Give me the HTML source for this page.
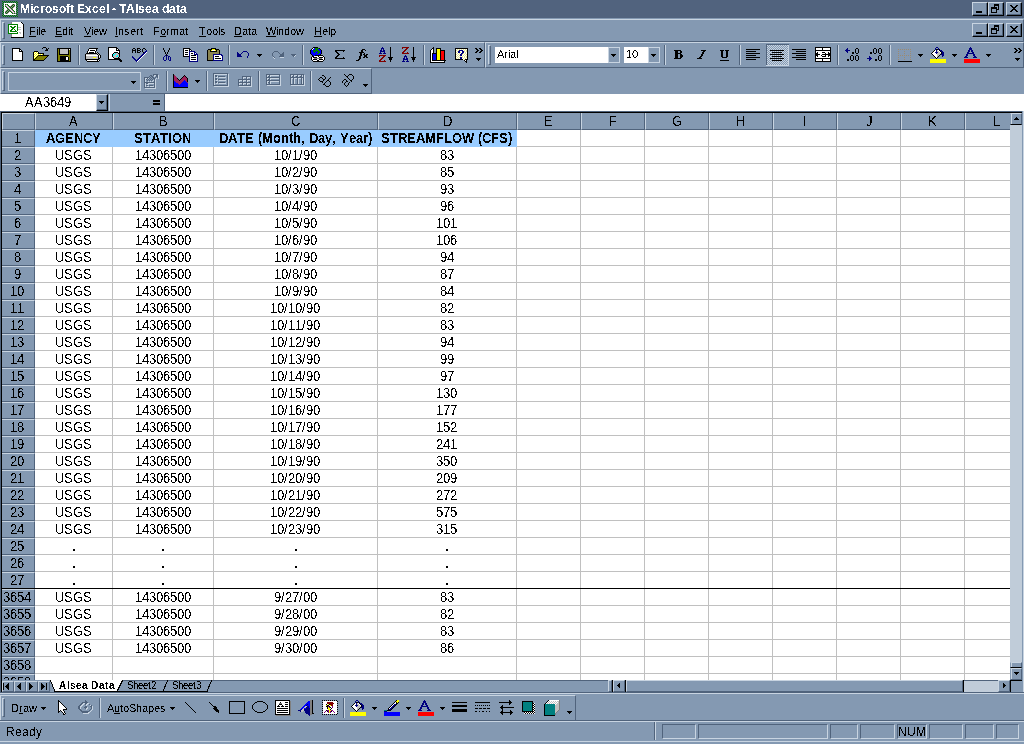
<!DOCTYPE html><html><head><meta charset="utf-8"><style>
html,body{margin:0;padding:0}
body{width:1024px;height:744px;overflow:hidden;position:relative;background:#8499b2;font-family:"Liberation Sans",sans-serif}
.a{position:absolute;margin:0;padding:0}
.b{box-sizing:border-box}
.t{white-space:nowrap;overflow:visible}
i.c{display:inline-block;font-style:normal}
i.u{text-decoration:underline}
</style></head><body>
<svg width="0" height="0" style="position:absolute"><filter id="c1" x="0" y="0" width="100%" height="100%"><feComponentTransfer><feFuncA type="discrete" tableValues="0 1"/></feComponentTransfer></filter><filter id="c2" x="0" y="0" width="100%" height="100%"><feComponentTransfer><feFuncA type="discrete" tableValues="0 1 1"/></feComponentTransfer></filter></svg>
<div class="a" style="left:0px;top:0px;width:1024px;height:18px;background:#51637e"></div>
<div class="a t" style="left:20px;top:1px;width:171px;height:16px;font-size:12px;color:#fff;font-weight:bold;line-height:16px;filter:url(#c1);"><span><i class="c" style="width:10px">M</i><i class="c" style="width:3px">i</i><i class="c" style="width:7px">c</i><i class="c" style="width:5px">r</i><i class="c" style="width:7px">o</i><i class="c" style="width:7px">s</i><i class="c" style="width:7px">o</i><i class="c" style="width:4px">f</i><i class="c" style="width:4px">t</i><i class="c" style="width:3px">&nbsp;</i><i class="c" style="width:8px">E</i><i class="c" style="width:7px">x</i><i class="c" style="width:7px">c</i><i class="c" style="width:7px">e</i><i class="c" style="width:3px">l</i><i class="c" style="width:3px">&nbsp;</i><i class="c" style="width:4px">-</i><i class="c" style="width:3px">&nbsp;</i><i class="c" style="width:7px">T</i><i class="c" style="width:9px">A</i><i class="c" style="width:3px">l</i><i class="c" style="width:7px">s</i><i class="c" style="width:7px">e</i><i class="c" style="width:7px">a</i><i class="c" style="width:3px">&nbsp;</i><i class="c" style="width:7px">d</i><i class="c" style="width:7px">a</i><i class="c" style="width:4px">t</i><i class="c" style="width:7px">a</i></span></div>
<div class="a b" style="left:972px;top:2px;width:16px;height:14px;background:#8499b2;border-style:solid;border-width:1px;border-color:#c8d4e1 #000 #000 #c8d4e1"></div>
<div class="a" style="left:973px;top:14px;width:14px;height:1px;background:#50637c"></div>
<div class="a" style="left:986px;top:3px;width:1px;height:12px;background:#50637c"></div>
<div class="a b" style="left:988px;top:2px;width:16px;height:14px;background:#8499b2;border-style:solid;border-width:1px;border-color:#c8d4e1 #000 #000 #c8d4e1"></div>
<div class="a" style="left:989px;top:14px;width:14px;height:1px;background:#50637c"></div>
<div class="a" style="left:1002px;top:3px;width:1px;height:12px;background:#50637c"></div>
<div class="a b" style="left:1006px;top:2px;width:16px;height:14px;background:#8499b2;border-style:solid;border-width:1px;border-color:#c8d4e1 #000 #000 #c8d4e1"></div>
<div class="a" style="left:1007px;top:14px;width:14px;height:1px;background:#50637c"></div>
<div class="a" style="left:1020px;top:3px;width:1px;height:12px;background:#50637c"></div>
<div class="a b" style="left:0px;top:19px;width:1024px;height:23px;background:#8499b2;border-style:solid;border-width:1px;border-color:#c8d4e1 #50637c #50637c #c8d4e1"></div>
<div class="a" style="left:0px;top:41px;width:1024px;height:1px;background:#50637c"></div>
<div class="a" style="left:2px;top:22px;width:3px;height:15px;border-style:solid;border-width:1px 1px 1px 1px;border-color:#c8d4e1 #50637c #50637c #c8d4e1;width:1px;"></div>
<div class="a t" style="left:29px;top:24px;width:21px;height:14px;font-size:11px;color:#000;line-height:14px;filter:url(#c1);"><span><i class="c u" style="width:7px">F</i><i class="c" style="width:2px">i</i><i class="c" style="width:2px">l</i><i class="c" style="width:6px">e</i></span></div>
<div class="a t" style="left:55px;top:24px;width:22px;height:14px;font-size:11px;color:#000;line-height:14px;filter:url(#c1);"><span><i class="c u" style="width:7px">E</i><i class="c" style="width:6px">d</i><i class="c" style="width:2px">i</i><i class="c" style="width:3px">t</i></span></div>
<div class="a t" style="left:84px;top:24px;width:27px;height:14px;font-size:11px;color:#000;line-height:14px;filter:url(#c1);"><span><i class="c u" style="width:7px">V</i><i class="c" style="width:2px">i</i><i class="c" style="width:6px">e</i><i class="c" style="width:8px">w</i></span></div>
<div class="a t" style="left:115px;top:24px;width:32px;height:14px;font-size:11px;color:#000;line-height:14px;filter:url(#c1);"><span><i class="c u" style="width:3px">I</i><i class="c" style="width:6px">n</i><i class="c" style="width:6px">s</i><i class="c" style="width:6px">e</i><i class="c" style="width:4px">r</i><i class="c" style="width:3px">t</i></span></div>
<div class="a t" style="left:153px;top:24px;width:39px;height:14px;font-size:11px;color:#000;line-height:14px;filter:url(#c1);"><span><i class="c" style="width:7px">F</i><i class="c u" style="width:6px">o</i><i class="c" style="width:4px">r</i><i class="c" style="width:9px">m</i><i class="c" style="width:6px">a</i><i class="c" style="width:3px">t</i></span></div>
<div class="a t" style="left:199px;top:24px;width:31px;height:14px;font-size:11px;color:#000;line-height:14px;filter:url(#c1);"><span><i class="c u" style="width:7px">T</i><i class="c" style="width:6px">o</i><i class="c" style="width:6px">o</i><i class="c" style="width:2px">l</i><i class="c" style="width:6px">s</i></span></div>
<div class="a t" style="left:234px;top:24px;width:27px;height:14px;font-size:11px;color:#000;line-height:14px;filter:url(#c1);"><span><i class="c u" style="width:8px">D</i><i class="c" style="width:6px">a</i><i class="c" style="width:3px">t</i><i class="c" style="width:6px">a</i></span></div>
<div class="a t" style="left:266px;top:24px;width:42px;height:14px;font-size:11px;color:#000;line-height:14px;filter:url(#c1);"><span><i class="c u" style="width:10px">W</i><i class="c" style="width:2px">i</i><i class="c" style="width:6px">n</i><i class="c" style="width:6px">d</i><i class="c" style="width:6px">o</i><i class="c" style="width:8px">w</i></span></div>
<div class="a t" style="left:314px;top:24px;width:26px;height:14px;font-size:11px;color:#000;line-height:14px;filter:url(#c1);"><span><i class="c u" style="width:8px">H</i><i class="c" style="width:6px">e</i><i class="c" style="width:2px">l</i><i class="c" style="width:6px">p</i></span></div>
<div class="a b" style="left:972px;top:23px;width:16px;height:14px;background:#8499b2;border-style:solid;border-width:1px;border-color:#c8d4e1 #000 #000 #c8d4e1"></div>
<div class="a" style="left:973px;top:35px;width:14px;height:1px;background:#50637c"></div>
<div class="a" style="left:986px;top:24px;width:1px;height:12px;background:#50637c"></div>
<div class="a b" style="left:988px;top:23px;width:16px;height:14px;background:#8499b2;border-style:solid;border-width:1px;border-color:#c8d4e1 #000 #000 #c8d4e1"></div>
<div class="a" style="left:989px;top:35px;width:14px;height:1px;background:#50637c"></div>
<div class="a" style="left:1002px;top:24px;width:1px;height:12px;background:#50637c"></div>
<div class="a b" style="left:1006px;top:23px;width:16px;height:14px;background:#8499b2;border-style:solid;border-width:1px;border-color:#c8d4e1 #000 #000 #c8d4e1"></div>
<div class="a" style="left:1007px;top:35px;width:14px;height:1px;background:#50637c"></div>
<div class="a" style="left:1020px;top:24px;width:1px;height:12px;background:#50637c"></div>
<div class="a b" style="left:0px;top:42px;width:485px;height:26px;background:#8499b2;border-style:solid;border-width:1px;border-color:#c8d4e1 #50637c #50637c #c8d4e1"></div>
<div class="a" style="left:2px;top:45px;width:3px;height:18px;border-style:solid;border-width:1px 1px 1px 1px;border-color:#c8d4e1 #50637c #50637c #c8d4e1;width:1px;"></div>
<div class="a b" style="left:485px;top:42px;width:539px;height:26px;background:#8499b2;border-style:solid;border-width:1px;border-color:#c8d4e1 #50637c #50637c #c8d4e1"></div>
<div class="a" style="left:488px;top:45px;width:3px;height:18px;border-style:solid;border-width:1px 1px 1px 1px;border-color:#c8d4e1 #50637c #50637c #c8d4e1;width:1px;"></div>
<div class="a" style="left:495px;top:47px;width:113px;height:16px;background:#fff"></div>
<div class="a t" style="left:497px;top:48px;width:25px;height:13px;font-size:11px;color:#000;line-height:13px;filter:url(#c1);"><span><i class="c" style="width:7px">A</i><i class="c" style="width:4px">r</i><i class="c" style="width:2px">i</i><i class="c" style="width:6px">a</i><i class="c" style="width:2px">l</i></span></div>
<div class="a b" style="left:608px;top:47px;width:12px;height:16px;border:1px solid #c8d4e1"></div>
<svg class="a" style="left:611px;top:54px" width="5" height="3" viewBox="0 0 5 3" shape-rendering="crispEdges"><path d="M0 0h5v1h-5zM1 1h3v1h-3zM2 2h1v1h-1z" fill="#000"/></svg>
<div class="a" style="left:624px;top:47px;width:24px;height:16px;background:#fff"></div>
<div class="a t" style="left:626px;top:48px;width:16px;height:13px;font-size:11px;color:#000;line-height:13px;filter:url(#c1);"><span><i class="c" style="width:6px">1</i><i class="c" style="width:6px">0</i></span></div>
<div class="a b" style="left:648px;top:47px;width:12px;height:16px;border:1px solid #c8d4e1"></div>
<svg class="a" style="left:651px;top:54px" width="5" height="3" viewBox="0 0 5 3" shape-rendering="crispEdges"><path d="M0 0h5v1h-5zM1 1h3v1h-3zM2 2h1v1h-1z" fill="#000"/></svg>
<div class="a" style="left:78px;top:45px;width:1px;height:20px;background:#50637c"></div>
<div class="a" style="left:79px;top:45px;width:1px;height:20px;background:#c8d4e1"></div>
<div class="a" style="left:153px;top:45px;width:1px;height:20px;background:#50637c"></div>
<div class="a" style="left:154px;top:45px;width:1px;height:20px;background:#c8d4e1"></div>
<div class="a" style="left:228px;top:45px;width:1px;height:20px;background:#50637c"></div>
<div class="a" style="left:229px;top:45px;width:1px;height:20px;background:#c8d4e1"></div>
<div class="a" style="left:302px;top:45px;width:1px;height:20px;background:#50637c"></div>
<div class="a" style="left:303px;top:45px;width:1px;height:20px;background:#c8d4e1"></div>
<div class="a" style="left:423px;top:45px;width:1px;height:20px;background:#50637c"></div>
<div class="a" style="left:424px;top:45px;width:1px;height:20px;background:#c8d4e1"></div>
<div class="a" style="left:664px;top:45px;width:1px;height:20px;background:#50637c"></div>
<div class="a" style="left:665px;top:45px;width:1px;height:20px;background:#c8d4e1"></div>
<div class="a" style="left:739px;top:45px;width:1px;height:20px;background:#50637c"></div>
<div class="a" style="left:740px;top:45px;width:1px;height:20px;background:#c8d4e1"></div>
<div class="a" style="left:837px;top:45px;width:1px;height:20px;background:#50637c"></div>
<div class="a" style="left:838px;top:45px;width:1px;height:20px;background:#c8d4e1"></div>
<div class="a" style="left:889px;top:45px;width:1px;height:20px;background:#50637c"></div>
<div class="a" style="left:890px;top:45px;width:1px;height:20px;background:#c8d4e1"></div>
<div class="a b" style="left:0px;top:68px;width:372px;height:26px;background:#8499b2;border-style:solid;border-width:1px;border-color:#c8d4e1 #50637c #50637c #c8d4e1"></div>
<div class="a" style="left:2px;top:71px;width:3px;height:18px;border-style:solid;border-width:1px 1px 1px 1px;border-color:#c8d4e1 #50637c #50637c #c8d4e1;width:1px;"></div>
<div class="a b" style="left:8px;top:72px;width:133px;height:19px;border:1px solid #c8d4e1"></div>
<svg class="a" style="left:131px;top:81px" width="5" height="3" viewBox="0 0 5 3" shape-rendering="crispEdges"><path d="M0 0h5v1h-5zM1 1h3v1h-3zM2 2h1v1h-1z" fill="#000"/></svg>
<div class="a" style="left:166px;top:71px;width:1px;height:20px;background:#50637c"></div>
<div class="a" style="left:167px;top:71px;width:1px;height:20px;background:#c8d4e1"></div>
<div class="a" style="left:206px;top:71px;width:1px;height:20px;background:#50637c"></div>
<div class="a" style="left:207px;top:71px;width:1px;height:20px;background:#c8d4e1"></div>
<div class="a" style="left:258px;top:71px;width:1px;height:20px;background:#50637c"></div>
<div class="a" style="left:259px;top:71px;width:1px;height:20px;background:#c8d4e1"></div>
<div class="a" style="left:310px;top:71px;width:1px;height:20px;background:#50637c"></div>
<div class="a" style="left:311px;top:71px;width:1px;height:20px;background:#c8d4e1"></div>
<div class="a" style="left:0px;top:94px;width:96px;height:17px;background:#fff"></div>
<div class="a t" style="left:25px;top:95px;width:50px;height:15px;font-size:13px;color:#000;line-height:15px;filter:url(#c1);"><span style="display:inline-block;transform:scaleY(1.1);transform-origin:50% 11.80px"><i class="c" style="width:9px">A</i><i class="c" style="width:9px">A</i><i class="c" style="width:7px">3</i><i class="c" style="width:7px">6</i><i class="c" style="width:7px">4</i><i class="c" style="width:7px">9</i></span></div>
<div class="a b" style="left:96px;top:94px;width:12px;height:17px;background:#8499b2;border-style:solid;border-width:1px;border-color:#c8d4e1 #000 #000 #c8d4e1"></div>
<div class="a" style="left:97px;top:109px;width:10px;height:1px;background:#50637c"></div>
<div class="a" style="left:106px;top:95px;width:1px;height:15px;background:#50637c"></div>
<svg class="a" style="left:99px;top:101px" width="5" height="3" viewBox="0 0 5 3" shape-rendering="crispEdges"><path d="M0 0h5v1h-5zM1 1h3v1h-3zM2 2h1v1h-1z" fill="#000"/></svg>
<div class="a" style="left:109px;top:94px;width:1px;height:17px;background:#c8d4e1"></div>
<div class="a" style="left:153px;top:100px;width:7px;height:2px;background:#000"></div>
<div class="a" style="left:153px;top:103px;width:7px;height:2px;background:#000"></div>
<div class="a" style="left:164px;top:94px;width:1px;height:17px;background:#50637c"></div>
<div class="a" style="left:165px;top:94px;width:859px;height:17px;background:#fff"></div>
<div class="a" style="left:0px;top:111px;width:1024px;height:1px;background:#50637c"></div>
<div class="a" style="left:0px;top:111px;width:1px;height:582px;background:#50637c"></div>
<div class="a" style="left:1px;top:112px;width:1021px;height:1px;background:#000"></div>
<div class="a" style="left:1px;top:112px;width:1px;height:580px;background:#000"></div>
<div class="a" style="left:1022px;top:111px;width:1px;height:582px;background:#8499b2"></div>
<div class="a" style="left:1023px;top:111px;width:1px;height:582px;background:#c8d4e1"></div>
<div class="a" style="left:2px;top:113px;width:1008px;height:567px;background:#fff"></div>
<div class="a b" style="left:2px;top:113px;width:33px;height:17px;background:#8499b2;border-style:solid;border-width:1px;border-color:#c8d4e1 #50637c #50637c #c8d4e1"></div>
<div class="a b" style="left:35px;top:113px;width:78px;height:17px;background:#8499b2;border-style:solid;border-width:0 1px 1px 1px;border-color:#c8d4e1 #50637c #50637c #c8d4e1"></div>
<div class="a t" style="left:69px;top:114px;width:13px;height:15px;font-size:13px;color:#000;line-height:15px;filter:url(#c1);"><span style="display:inline-block;transform:scaleY(1.1);transform-origin:50% 11.80px"><i class="c" style="width:9px">A</i></span></div>
<div class="a b" style="left:113px;top:113px;width:101px;height:17px;background:#8499b2;border-style:solid;border-width:0 1px 1px 1px;border-color:#c8d4e1 #50637c #50637c #c8d4e1"></div>
<div class="a t" style="left:159px;top:114px;width:13px;height:15px;font-size:13px;color:#000;line-height:15px;filter:url(#c1);"><span style="display:inline-block;transform:scaleY(1.1);transform-origin:50% 11.80px"><i class="c" style="width:9px">B</i></span></div>
<div class="a b" style="left:214px;top:113px;width:164px;height:17px;background:#8499b2;border-style:solid;border-width:0 1px 1px 1px;border-color:#c8d4e1 #50637c #50637c #c8d4e1"></div>
<div class="a t" style="left:291px;top:114px;width:13px;height:15px;font-size:13px;color:#000;line-height:15px;filter:url(#c1);"><span style="display:inline-block;transform:scaleY(1.1);transform-origin:50% 11.80px"><i class="c" style="width:9px">C</i></span></div>
<div class="a b" style="left:378px;top:113px;width:139px;height:17px;background:#8499b2;border-style:solid;border-width:0 1px 1px 1px;border-color:#c8d4e1 #50637c #50637c #c8d4e1"></div>
<div class="a t" style="left:443px;top:114px;width:13px;height:15px;font-size:13px;color:#000;line-height:15px;filter:url(#c1);"><span style="display:inline-block;transform:scaleY(1.1);transform-origin:50% 11.80px"><i class="c" style="width:9px">D</i></span></div>
<div class="a b" style="left:517px;top:113px;width:64px;height:17px;background:#8499b2;border-style:solid;border-width:0 1px 1px 1px;border-color:#c8d4e1 #50637c #50637c #c8d4e1"></div>
<div class="a t" style="left:544px;top:114px;width:13px;height:15px;font-size:13px;color:#000;line-height:15px;filter:url(#c1);"><span style="display:inline-block;transform:scaleY(1.1);transform-origin:50% 11.80px"><i class="c" style="width:9px">E</i></span></div>
<div class="a b" style="left:581px;top:113px;width:64px;height:17px;background:#8499b2;border-style:solid;border-width:0 1px 1px 1px;border-color:#c8d4e1 #50637c #50637c #c8d4e1"></div>
<div class="a t" style="left:609px;top:114px;width:12px;height:15px;font-size:13px;color:#000;line-height:15px;filter:url(#c1);"><span style="display:inline-block;transform:scaleY(1.1);transform-origin:50% 11.80px"><i class="c" style="width:8px">F</i></span></div>
<div class="a b" style="left:645px;top:113px;width:64px;height:17px;background:#8499b2;border-style:solid;border-width:0 1px 1px 1px;border-color:#c8d4e1 #50637c #50637c #c8d4e1"></div>
<div class="a t" style="left:672px;top:114px;width:14px;height:15px;font-size:13px;color:#000;line-height:15px;filter:url(#c1);"><span style="display:inline-block;transform:scaleY(1.1);transform-origin:50% 11.80px"><i class="c" style="width:10px">G</i></span></div>
<div class="a b" style="left:709px;top:113px;width:64px;height:17px;background:#8499b2;border-style:solid;border-width:0 1px 1px 1px;border-color:#c8d4e1 #50637c #50637c #c8d4e1"></div>
<div class="a t" style="left:736px;top:114px;width:13px;height:15px;font-size:13px;color:#000;line-height:15px;filter:url(#c1);"><span style="display:inline-block;transform:scaleY(1.1);transform-origin:50% 11.80px"><i class="c" style="width:9px">H</i></span></div>
<div class="a b" style="left:773px;top:113px;width:64px;height:17px;background:#8499b2;border-style:solid;border-width:0 1px 1px 1px;border-color:#c8d4e1 #50637c #50637c #c8d4e1"></div>
<div class="a t" style="left:803px;top:114px;width:8px;height:15px;font-size:13px;color:#000;line-height:15px;filter:url(#c1);"><span style="display:inline-block;transform:scaleY(1.1);transform-origin:50% 11.80px"><i class="c" style="width:4px">I</i></span></div>
<div class="a b" style="left:837px;top:113px;width:64px;height:17px;background:#8499b2;border-style:solid;border-width:0 1px 1px 1px;border-color:#c8d4e1 #50637c #50637c #c8d4e1"></div>
<div class="a t" style="left:866px;top:114px;width:10px;height:15px;font-size:13px;color:#000;line-height:15px;filter:url(#c1);"><span style="display:inline-block;transform:scaleY(1.1);transform-origin:50% 11.80px"><i class="c" style="width:6px">J</i></span></div>
<div class="a b" style="left:901px;top:113px;width:64px;height:17px;background:#8499b2;border-style:solid;border-width:0 1px 1px 1px;border-color:#c8d4e1 #50637c #50637c #c8d4e1"></div>
<div class="a t" style="left:928px;top:114px;width:13px;height:15px;font-size:13px;color:#000;line-height:15px;filter:url(#c1);"><span style="display:inline-block;transform:scaleY(1.1);transform-origin:50% 11.80px"><i class="c" style="width:9px">K</i></span></div>
<div class="a b" style="left:965px;top:113px;width:45px;height:17px;background:#8499b2;border-style:solid;border-width:0 0 1px 1px;border-color:#c8d4e1 #50637c #50637c #c8d4e1"></div>
<div class="a t" style="left:993px;top:114px;width:11px;height:15px;font-size:13px;color:#000;line-height:15px;filter:url(#c1);"><span style="display:inline-block;transform:scaleY(1.1);transform-origin:50% 11.80px"><i class="c" style="width:7px">L</i></span></div>
<div class="a b" style="left:2px;top:130px;width:33px;height:17px;background:#8499b2;border-style:solid;border-width:1px 1px 1px 0;border-color:#c8d4e1 #50637c #50637c #c8d4e1"></div>
<div class="a t" style="left:14px;top:131px;width:11px;height:16px;font-size:13px;color:#000;line-height:16px;filter:url(#c1);overflow:hidden;height:16px;"><span style="display:inline-block;transform:scaleY(1.1);transform-origin:50% 12.30px"><i class="c" style="width:7px">1</i></span></div>
<div class="a b" style="left:2px;top:147px;width:33px;height:17px;background:#8499b2;border-style:solid;border-width:1px 1px 1px 0;border-color:#c8d4e1 #50637c #50637c #c8d4e1"></div>
<div class="a t" style="left:14px;top:148px;width:11px;height:16px;font-size:13px;color:#000;line-height:16px;filter:url(#c1);overflow:hidden;height:16px;"><span style="display:inline-block;transform:scaleY(1.1);transform-origin:50% 12.30px"><i class="c" style="width:7px">2</i></span></div>
<div class="a b" style="left:2px;top:164px;width:33px;height:17px;background:#8499b2;border-style:solid;border-width:1px 1px 1px 0;border-color:#c8d4e1 #50637c #50637c #c8d4e1"></div>
<div class="a t" style="left:14px;top:165px;width:11px;height:16px;font-size:13px;color:#000;line-height:16px;filter:url(#c1);overflow:hidden;height:16px;"><span style="display:inline-block;transform:scaleY(1.1);transform-origin:50% 12.30px"><i class="c" style="width:7px">3</i></span></div>
<div class="a b" style="left:2px;top:181px;width:33px;height:17px;background:#8499b2;border-style:solid;border-width:1px 1px 1px 0;border-color:#c8d4e1 #50637c #50637c #c8d4e1"></div>
<div class="a t" style="left:14px;top:182px;width:11px;height:16px;font-size:13px;color:#000;line-height:16px;filter:url(#c1);overflow:hidden;height:16px;"><span style="display:inline-block;transform:scaleY(1.1);transform-origin:50% 12.30px"><i class="c" style="width:7px">4</i></span></div>
<div class="a b" style="left:2px;top:198px;width:33px;height:17px;background:#8499b2;border-style:solid;border-width:1px 1px 1px 0;border-color:#c8d4e1 #50637c #50637c #c8d4e1"></div>
<div class="a t" style="left:14px;top:199px;width:11px;height:16px;font-size:13px;color:#000;line-height:16px;filter:url(#c1);overflow:hidden;height:16px;"><span style="display:inline-block;transform:scaleY(1.1);transform-origin:50% 12.30px"><i class="c" style="width:7px">5</i></span></div>
<div class="a b" style="left:2px;top:215px;width:33px;height:17px;background:#8499b2;border-style:solid;border-width:1px 1px 1px 0;border-color:#c8d4e1 #50637c #50637c #c8d4e1"></div>
<div class="a t" style="left:14px;top:216px;width:11px;height:16px;font-size:13px;color:#000;line-height:16px;filter:url(#c1);overflow:hidden;height:16px;"><span style="display:inline-block;transform:scaleY(1.1);transform-origin:50% 12.30px"><i class="c" style="width:7px">6</i></span></div>
<div class="a b" style="left:2px;top:232px;width:33px;height:17px;background:#8499b2;border-style:solid;border-width:1px 1px 1px 0;border-color:#c8d4e1 #50637c #50637c #c8d4e1"></div>
<div class="a t" style="left:14px;top:233px;width:11px;height:16px;font-size:13px;color:#000;line-height:16px;filter:url(#c1);overflow:hidden;height:16px;"><span style="display:inline-block;transform:scaleY(1.1);transform-origin:50% 12.30px"><i class="c" style="width:7px">7</i></span></div>
<div class="a b" style="left:2px;top:249px;width:33px;height:17px;background:#8499b2;border-style:solid;border-width:1px 1px 1px 0;border-color:#c8d4e1 #50637c #50637c #c8d4e1"></div>
<div class="a t" style="left:14px;top:250px;width:11px;height:16px;font-size:13px;color:#000;line-height:16px;filter:url(#c1);overflow:hidden;height:16px;"><span style="display:inline-block;transform:scaleY(1.1);transform-origin:50% 12.30px"><i class="c" style="width:7px">8</i></span></div>
<div class="a b" style="left:2px;top:266px;width:33px;height:17px;background:#8499b2;border-style:solid;border-width:1px 1px 1px 0;border-color:#c8d4e1 #50637c #50637c #c8d4e1"></div>
<div class="a t" style="left:14px;top:267px;width:11px;height:16px;font-size:13px;color:#000;line-height:16px;filter:url(#c1);overflow:hidden;height:16px;"><span style="display:inline-block;transform:scaleY(1.1);transform-origin:50% 12.30px"><i class="c" style="width:7px">9</i></span></div>
<div class="a b" style="left:2px;top:283px;width:33px;height:17px;background:#8499b2;border-style:solid;border-width:1px 1px 1px 0;border-color:#c8d4e1 #50637c #50637c #c8d4e1"></div>
<div class="a t" style="left:10px;top:284px;width:18px;height:16px;font-size:13px;color:#000;line-height:16px;filter:url(#c1);overflow:hidden;height:16px;"><span style="display:inline-block;transform:scaleY(1.1);transform-origin:50% 12.30px"><i class="c" style="width:7px">1</i><i class="c" style="width:7px">0</i></span></div>
<div class="a b" style="left:2px;top:300px;width:33px;height:17px;background:#8499b2;border-style:solid;border-width:1px 1px 1px 0;border-color:#c8d4e1 #50637c #50637c #c8d4e1"></div>
<div class="a t" style="left:10px;top:301px;width:18px;height:16px;font-size:13px;color:#000;line-height:16px;filter:url(#c1);overflow:hidden;height:16px;"><span style="display:inline-block;transform:scaleY(1.1);transform-origin:50% 12.30px"><i class="c" style="width:7px">1</i><i class="c" style="width:7px">1</i></span></div>
<div class="a b" style="left:2px;top:317px;width:33px;height:17px;background:#8499b2;border-style:solid;border-width:1px 1px 1px 0;border-color:#c8d4e1 #50637c #50637c #c8d4e1"></div>
<div class="a t" style="left:10px;top:318px;width:18px;height:16px;font-size:13px;color:#000;line-height:16px;filter:url(#c1);overflow:hidden;height:16px;"><span style="display:inline-block;transform:scaleY(1.1);transform-origin:50% 12.30px"><i class="c" style="width:7px">1</i><i class="c" style="width:7px">2</i></span></div>
<div class="a b" style="left:2px;top:334px;width:33px;height:17px;background:#8499b2;border-style:solid;border-width:1px 1px 1px 0;border-color:#c8d4e1 #50637c #50637c #c8d4e1"></div>
<div class="a t" style="left:10px;top:335px;width:18px;height:16px;font-size:13px;color:#000;line-height:16px;filter:url(#c1);overflow:hidden;height:16px;"><span style="display:inline-block;transform:scaleY(1.1);transform-origin:50% 12.30px"><i class="c" style="width:7px">1</i><i class="c" style="width:7px">3</i></span></div>
<div class="a b" style="left:2px;top:351px;width:33px;height:17px;background:#8499b2;border-style:solid;border-width:1px 1px 1px 0;border-color:#c8d4e1 #50637c #50637c #c8d4e1"></div>
<div class="a t" style="left:10px;top:352px;width:18px;height:16px;font-size:13px;color:#000;line-height:16px;filter:url(#c1);overflow:hidden;height:16px;"><span style="display:inline-block;transform:scaleY(1.1);transform-origin:50% 12.30px"><i class="c" style="width:7px">1</i><i class="c" style="width:7px">4</i></span></div>
<div class="a b" style="left:2px;top:368px;width:33px;height:17px;background:#8499b2;border-style:solid;border-width:1px 1px 1px 0;border-color:#c8d4e1 #50637c #50637c #c8d4e1"></div>
<div class="a t" style="left:10px;top:369px;width:18px;height:16px;font-size:13px;color:#000;line-height:16px;filter:url(#c1);overflow:hidden;height:16px;"><span style="display:inline-block;transform:scaleY(1.1);transform-origin:50% 12.30px"><i class="c" style="width:7px">1</i><i class="c" style="width:7px">5</i></span></div>
<div class="a b" style="left:2px;top:385px;width:33px;height:17px;background:#8499b2;border-style:solid;border-width:1px 1px 1px 0;border-color:#c8d4e1 #50637c #50637c #c8d4e1"></div>
<div class="a t" style="left:10px;top:386px;width:18px;height:16px;font-size:13px;color:#000;line-height:16px;filter:url(#c1);overflow:hidden;height:16px;"><span style="display:inline-block;transform:scaleY(1.1);transform-origin:50% 12.30px"><i class="c" style="width:7px">1</i><i class="c" style="width:7px">6</i></span></div>
<div class="a b" style="left:2px;top:402px;width:33px;height:17px;background:#8499b2;border-style:solid;border-width:1px 1px 1px 0;border-color:#c8d4e1 #50637c #50637c #c8d4e1"></div>
<div class="a t" style="left:10px;top:403px;width:18px;height:16px;font-size:13px;color:#000;line-height:16px;filter:url(#c1);overflow:hidden;height:16px;"><span style="display:inline-block;transform:scaleY(1.1);transform-origin:50% 12.30px"><i class="c" style="width:7px">1</i><i class="c" style="width:7px">7</i></span></div>
<div class="a b" style="left:2px;top:419px;width:33px;height:17px;background:#8499b2;border-style:solid;border-width:1px 1px 1px 0;border-color:#c8d4e1 #50637c #50637c #c8d4e1"></div>
<div class="a t" style="left:10px;top:420px;width:18px;height:16px;font-size:13px;color:#000;line-height:16px;filter:url(#c1);overflow:hidden;height:16px;"><span style="display:inline-block;transform:scaleY(1.1);transform-origin:50% 12.30px"><i class="c" style="width:7px">1</i><i class="c" style="width:7px">8</i></span></div>
<div class="a b" style="left:2px;top:436px;width:33px;height:17px;background:#8499b2;border-style:solid;border-width:1px 1px 1px 0;border-color:#c8d4e1 #50637c #50637c #c8d4e1"></div>
<div class="a t" style="left:10px;top:437px;width:18px;height:16px;font-size:13px;color:#000;line-height:16px;filter:url(#c1);overflow:hidden;height:16px;"><span style="display:inline-block;transform:scaleY(1.1);transform-origin:50% 12.30px"><i class="c" style="width:7px">1</i><i class="c" style="width:7px">9</i></span></div>
<div class="a b" style="left:2px;top:453px;width:33px;height:17px;background:#8499b2;border-style:solid;border-width:1px 1px 1px 0;border-color:#c8d4e1 #50637c #50637c #c8d4e1"></div>
<div class="a t" style="left:10px;top:454px;width:18px;height:16px;font-size:13px;color:#000;line-height:16px;filter:url(#c1);overflow:hidden;height:16px;"><span style="display:inline-block;transform:scaleY(1.1);transform-origin:50% 12.30px"><i class="c" style="width:7px">2</i><i class="c" style="width:7px">0</i></span></div>
<div class="a b" style="left:2px;top:470px;width:33px;height:17px;background:#8499b2;border-style:solid;border-width:1px 1px 1px 0;border-color:#c8d4e1 #50637c #50637c #c8d4e1"></div>
<div class="a t" style="left:10px;top:471px;width:18px;height:16px;font-size:13px;color:#000;line-height:16px;filter:url(#c1);overflow:hidden;height:16px;"><span style="display:inline-block;transform:scaleY(1.1);transform-origin:50% 12.30px"><i class="c" style="width:7px">2</i><i class="c" style="width:7px">1</i></span></div>
<div class="a b" style="left:2px;top:487px;width:33px;height:17px;background:#8499b2;border-style:solid;border-width:1px 1px 1px 0;border-color:#c8d4e1 #50637c #50637c #c8d4e1"></div>
<div class="a t" style="left:10px;top:488px;width:18px;height:16px;font-size:13px;color:#000;line-height:16px;filter:url(#c1);overflow:hidden;height:16px;"><span style="display:inline-block;transform:scaleY(1.1);transform-origin:50% 12.30px"><i class="c" style="width:7px">2</i><i class="c" style="width:7px">2</i></span></div>
<div class="a b" style="left:2px;top:504px;width:33px;height:17px;background:#8499b2;border-style:solid;border-width:1px 1px 1px 0;border-color:#c8d4e1 #50637c #50637c #c8d4e1"></div>
<div class="a t" style="left:10px;top:505px;width:18px;height:16px;font-size:13px;color:#000;line-height:16px;filter:url(#c1);overflow:hidden;height:16px;"><span style="display:inline-block;transform:scaleY(1.1);transform-origin:50% 12.30px"><i class="c" style="width:7px">2</i><i class="c" style="width:7px">3</i></span></div>
<div class="a b" style="left:2px;top:521px;width:33px;height:17px;background:#8499b2;border-style:solid;border-width:1px 1px 1px 0;border-color:#c8d4e1 #50637c #50637c #c8d4e1"></div>
<div class="a t" style="left:10px;top:522px;width:18px;height:16px;font-size:13px;color:#000;line-height:16px;filter:url(#c1);overflow:hidden;height:16px;"><span style="display:inline-block;transform:scaleY(1.1);transform-origin:50% 12.30px"><i class="c" style="width:7px">2</i><i class="c" style="width:7px">4</i></span></div>
<div class="a b" style="left:2px;top:538px;width:33px;height:17px;background:#8499b2;border-style:solid;border-width:1px 1px 1px 0;border-color:#c8d4e1 #50637c #50637c #c8d4e1"></div>
<div class="a t" style="left:10px;top:539px;width:18px;height:16px;font-size:13px;color:#000;line-height:16px;filter:url(#c1);overflow:hidden;height:16px;"><span style="display:inline-block;transform:scaleY(1.1);transform-origin:50% 12.30px"><i class="c" style="width:7px">2</i><i class="c" style="width:7px">5</i></span></div>
<div class="a b" style="left:2px;top:555px;width:33px;height:17px;background:#8499b2;border-style:solid;border-width:1px 1px 1px 0;border-color:#c8d4e1 #50637c #50637c #c8d4e1"></div>
<div class="a t" style="left:10px;top:556px;width:18px;height:16px;font-size:13px;color:#000;line-height:16px;filter:url(#c1);overflow:hidden;height:16px;"><span style="display:inline-block;transform:scaleY(1.1);transform-origin:50% 12.30px"><i class="c" style="width:7px">2</i><i class="c" style="width:7px">6</i></span></div>
<div class="a b" style="left:2px;top:572px;width:33px;height:17px;background:#8499b2;border-style:solid;border-width:1px 1px 1px 0;border-color:#c8d4e1 #50637c #50637c #c8d4e1"></div>
<div class="a t" style="left:10px;top:573px;width:18px;height:16px;font-size:13px;color:#000;line-height:16px;filter:url(#c1);overflow:hidden;height:16px;"><span style="display:inline-block;transform:scaleY(1.1);transform-origin:50% 12.30px"><i class="c" style="width:7px">2</i><i class="c" style="width:7px">7</i></span></div>
<div class="a b" style="left:2px;top:589px;width:33px;height:17px;background:#8499b2;border-style:solid;border-width:1px 1px 1px 0;border-color:#c8d4e1 #50637c #50637c #c8d4e1"></div>
<div class="a t" style="left:3px;top:590px;width:32px;height:16px;font-size:13px;color:#000;line-height:16px;filter:url(#c1);overflow:hidden;height:16px;"><span style="display:inline-block;transform:scaleY(1.1);transform-origin:50% 12.30px"><i class="c" style="width:7px">3</i><i class="c" style="width:7px">6</i><i class="c" style="width:7px">5</i><i class="c" style="width:7px">4</i></span></div>
<div class="a b" style="left:2px;top:606px;width:33px;height:17px;background:#8499b2;border-style:solid;border-width:1px 1px 1px 0;border-color:#c8d4e1 #50637c #50637c #c8d4e1"></div>
<div class="a t" style="left:3px;top:607px;width:32px;height:16px;font-size:13px;color:#000;line-height:16px;filter:url(#c1);overflow:hidden;height:16px;"><span style="display:inline-block;transform:scaleY(1.1);transform-origin:50% 12.30px"><i class="c" style="width:7px">3</i><i class="c" style="width:7px">6</i><i class="c" style="width:7px">5</i><i class="c" style="width:7px">5</i></span></div>
<div class="a b" style="left:2px;top:623px;width:33px;height:17px;background:#8499b2;border-style:solid;border-width:1px 1px 1px 0;border-color:#c8d4e1 #50637c #50637c #c8d4e1"></div>
<div class="a t" style="left:3px;top:624px;width:32px;height:16px;font-size:13px;color:#000;line-height:16px;filter:url(#c1);overflow:hidden;height:16px;"><span style="display:inline-block;transform:scaleY(1.1);transform-origin:50% 12.30px"><i class="c" style="width:7px">3</i><i class="c" style="width:7px">6</i><i class="c" style="width:7px">5</i><i class="c" style="width:7px">6</i></span></div>
<div class="a b" style="left:2px;top:640px;width:33px;height:17px;background:#8499b2;border-style:solid;border-width:1px 1px 1px 0;border-color:#c8d4e1 #50637c #50637c #c8d4e1"></div>
<div class="a t" style="left:3px;top:641px;width:32px;height:16px;font-size:13px;color:#000;line-height:16px;filter:url(#c1);overflow:hidden;height:16px;"><span style="display:inline-block;transform:scaleY(1.1);transform-origin:50% 12.30px"><i class="c" style="width:7px">3</i><i class="c" style="width:7px">6</i><i class="c" style="width:7px">5</i><i class="c" style="width:7px">7</i></span></div>
<div class="a b" style="left:2px;top:657px;width:33px;height:17px;background:#8499b2;border-style:solid;border-width:1px 1px 1px 0;border-color:#c8d4e1 #50637c #50637c #c8d4e1"></div>
<div class="a t" style="left:3px;top:658px;width:32px;height:16px;font-size:13px;color:#000;line-height:16px;filter:url(#c1);overflow:hidden;height:16px;"><span style="display:inline-block;transform:scaleY(1.1);transform-origin:50% 12.30px"><i class="c" style="width:7px">3</i><i class="c" style="width:7px">6</i><i class="c" style="width:7px">5</i><i class="c" style="width:7px">8</i></span></div>
<div class="a b" style="left:2px;top:674px;width:33px;height:6px;background:#8499b2;border-style:solid;border-width:1px 1px 0px 0;border-color:#c8d4e1 #50637c #50637c #c8d4e1"></div>
<div class="a t" style="left:3px;top:675px;width:32px;height:16px;font-size:13px;color:#000;line-height:16px;filter:url(#c1);overflow:hidden;height:5px;"><span style="display:inline-block;transform:scaleY(1.1);transform-origin:50% 12.30px"><i class="c" style="width:7px">3</i><i class="c" style="width:7px">6</i><i class="c" style="width:7px">5</i><i class="c" style="width:7px">9</i></span></div>
<div class="a" style="left:35px;top:146px;width:975px;height:1px;background:#c0c0c0"></div>
<div class="a" style="left:35px;top:163px;width:975px;height:1px;background:#c0c0c0"></div>
<div class="a" style="left:35px;top:180px;width:975px;height:1px;background:#c0c0c0"></div>
<div class="a" style="left:35px;top:197px;width:975px;height:1px;background:#c0c0c0"></div>
<div class="a" style="left:35px;top:214px;width:975px;height:1px;background:#c0c0c0"></div>
<div class="a" style="left:35px;top:231px;width:975px;height:1px;background:#c0c0c0"></div>
<div class="a" style="left:35px;top:248px;width:975px;height:1px;background:#c0c0c0"></div>
<div class="a" style="left:35px;top:265px;width:975px;height:1px;background:#c0c0c0"></div>
<div class="a" style="left:35px;top:282px;width:975px;height:1px;background:#c0c0c0"></div>
<div class="a" style="left:35px;top:299px;width:975px;height:1px;background:#c0c0c0"></div>
<div class="a" style="left:35px;top:316px;width:975px;height:1px;background:#c0c0c0"></div>
<div class="a" style="left:35px;top:333px;width:975px;height:1px;background:#c0c0c0"></div>
<div class="a" style="left:35px;top:350px;width:975px;height:1px;background:#c0c0c0"></div>
<div class="a" style="left:35px;top:367px;width:975px;height:1px;background:#c0c0c0"></div>
<div class="a" style="left:35px;top:384px;width:975px;height:1px;background:#c0c0c0"></div>
<div class="a" style="left:35px;top:401px;width:975px;height:1px;background:#c0c0c0"></div>
<div class="a" style="left:35px;top:418px;width:975px;height:1px;background:#c0c0c0"></div>
<div class="a" style="left:35px;top:435px;width:975px;height:1px;background:#c0c0c0"></div>
<div class="a" style="left:35px;top:452px;width:975px;height:1px;background:#c0c0c0"></div>
<div class="a" style="left:35px;top:469px;width:975px;height:1px;background:#c0c0c0"></div>
<div class="a" style="left:35px;top:486px;width:975px;height:1px;background:#c0c0c0"></div>
<div class="a" style="left:35px;top:503px;width:975px;height:1px;background:#c0c0c0"></div>
<div class="a" style="left:35px;top:520px;width:975px;height:1px;background:#c0c0c0"></div>
<div class="a" style="left:35px;top:537px;width:975px;height:1px;background:#c0c0c0"></div>
<div class="a" style="left:35px;top:554px;width:975px;height:1px;background:#c0c0c0"></div>
<div class="a" style="left:35px;top:571px;width:975px;height:1px;background:#c0c0c0"></div>
<div class="a" style="left:35px;top:588px;width:975px;height:1px;background:#c0c0c0"></div>
<div class="a" style="left:35px;top:605px;width:975px;height:1px;background:#c0c0c0"></div>
<div class="a" style="left:35px;top:622px;width:975px;height:1px;background:#c0c0c0"></div>
<div class="a" style="left:35px;top:639px;width:975px;height:1px;background:#c0c0c0"></div>
<div class="a" style="left:35px;top:656px;width:975px;height:1px;background:#c0c0c0"></div>
<div class="a" style="left:35px;top:673px;width:975px;height:1px;background:#c0c0c0"></div>
<div class="a" style="left:112px;top:130px;width:1px;height:550px;background:#c0c0c0"></div>
<div class="a" style="left:213px;top:130px;width:1px;height:550px;background:#c0c0c0"></div>
<div class="a" style="left:377px;top:130px;width:1px;height:550px;background:#c0c0c0"></div>
<div class="a" style="left:516px;top:130px;width:1px;height:550px;background:#c0c0c0"></div>
<div class="a" style="left:580px;top:130px;width:1px;height:550px;background:#c0c0c0"></div>
<div class="a" style="left:644px;top:130px;width:1px;height:550px;background:#c0c0c0"></div>
<div class="a" style="left:708px;top:130px;width:1px;height:550px;background:#c0c0c0"></div>
<div class="a" style="left:772px;top:130px;width:1px;height:550px;background:#c0c0c0"></div>
<div class="a" style="left:836px;top:130px;width:1px;height:550px;background:#c0c0c0"></div>
<div class="a" style="left:900px;top:130px;width:1px;height:550px;background:#c0c0c0"></div>
<div class="a" style="left:964px;top:130px;width:1px;height:550px;background:#c0c0c0"></div>
<div class="a" style="left:35px;top:130px;width:482px;height:17px;background:#99ccff"></div>
<div class="a" style="left:1px;top:588px;width:1009px;height:1px;background:#000"></div>
<div class="a t" style="left:46px;top:130px;width:59px;height:17px;font-size:13px;color:#000;font-weight:bold;line-height:17px;filter:url(#c1);"><span style="display:inline-block;transform:scaleY(1.1);transform-origin:50% 12.80px"><i class="c" style="width:9px">A</i><i class="c" style="width:10px">G</i><i class="c" style="width:9px">E</i><i class="c" style="width:9px">N</i><i class="c" style="width:9px">C</i><i class="c" style="width:9px">Y</i></span></div>
<div class="a t" style="left:134px;top:130px;width:61px;height:17px;font-size:13px;color:#000;font-weight:bold;line-height:17px;filter:url(#c1);"><span style="display:inline-block;transform:scaleY(1.1);transform-origin:50% 12.80px"><i class="c" style="width:9px">S</i><i class="c" style="width:8px">T</i><i class="c" style="width:9px">A</i><i class="c" style="width:8px">T</i><i class="c" style="width:4px">I</i><i class="c" style="width:10px">O</i><i class="c" style="width:9px">N</i></span></div>
<div class="a t" style="left:219px;top:130px;width:157px;height:17px;font-size:13px;color:#000;font-weight:bold;line-height:17px;filter:url(#c1);"><span style="display:inline-block;transform:scaleY(1.1);transform-origin:50% 12.80px"><i class="c" style="width:9px">D</i><i class="c" style="width:9px">A</i><i class="c" style="width:8px">T</i><i class="c" style="width:9px">E</i><i class="c" style="width:4px">&nbsp;</i><i class="c" style="width:4px">(</i><i class="c" style="width:11px">M</i><i class="c" style="width:8px">o</i><i class="c" style="width:8px">n</i><i class="c" style="width:4px">t</i><i class="c" style="width:8px">h</i><i class="c" style="width:4px">,</i><i class="c" style="width:4px">&nbsp;</i><i class="c" style="width:9px">D</i><i class="c" style="width:7px">a</i><i class="c" style="width:7px">y</i><i class="c" style="width:4px">,</i><i class="c" style="width:4px">&nbsp;</i><i class="c" style="width:9px">Y</i><i class="c" style="width:7px">e</i><i class="c" style="width:7px">a</i><i class="c" style="width:5px">r</i><i class="c" style="width:4px">)</i></span></div>
<div class="a t" style="left:381px;top:130px;width:135px;height:17px;font-size:13px;color:#000;font-weight:bold;line-height:17px;filter:url(#c1);"><span style="display:inline-block;transform:scaleY(1.1);transform-origin:50% 12.80px"><i class="c" style="width:9px">S</i><i class="c" style="width:8px">T</i><i class="c" style="width:9px">R</i><i class="c" style="width:9px">E</i><i class="c" style="width:9px">A</i><i class="c" style="width:11px">M</i><i class="c" style="width:8px">F</i><i class="c" style="width:8px">L</i><i class="c" style="width:10px">O</i><i class="c" style="width:12px">W</i><i class="c" style="width:4px">&nbsp;</i><i class="c" style="width:4px">(</i><i class="c" style="width:9px">C</i><i class="c" style="width:8px">F</i><i class="c" style="width:9px">S</i><i class="c" style="width:4px">)</i></span></div>
<div class="a t" style="left:55px;top:147px;width:41px;height:17px;font-size:13px;color:#000;line-height:17px;filter:url(#c1);"><span style="display:inline-block;transform:scaleY(1.1);transform-origin:50% 12.80px"><i class="c" style="width:9px">U</i><i class="c" style="width:9px">S</i><i class="c" style="width:10px">G</i><i class="c" style="width:9px">S</i></span></div>
<div class="a t" style="left:135px;top:147px;width:60px;height:17px;font-size:13px;color:#000;line-height:17px;filter:url(#c1);"><span style="display:inline-block;transform:scaleY(1.1);transform-origin:50% 12.80px"><i class="c" style="width:7px">1</i><i class="c" style="width:7px">4</i><i class="c" style="width:7px">3</i><i class="c" style="width:7px">0</i><i class="c" style="width:7px">6</i><i class="c" style="width:7px">5</i><i class="c" style="width:7px">0</i><i class="c" style="width:7px">0</i></span></div>
<div class="a t" style="left:274px;top:147px;width:47px;height:17px;font-size:13px;color:#000;line-height:17px;filter:url(#c1);"><span style="display:inline-block;transform:scaleY(1.1);transform-origin:50% 12.80px"><i class="c" style="width:7px">1</i><i class="c" style="width:7px">0</i><i class="c" style="width:4px">/</i><i class="c" style="width:7px">1</i><i class="c" style="width:4px">/</i><i class="c" style="width:7px">9</i><i class="c" style="width:7px">0</i></span></div>
<div class="a t" style="left:440px;top:147px;width:18px;height:17px;font-size:13px;color:#000;line-height:17px;filter:url(#c1);"><span style="display:inline-block;transform:scaleY(1.1);transform-origin:50% 12.80px"><i class="c" style="width:7px">8</i><i class="c" style="width:7px">3</i></span></div>
<div class="a t" style="left:55px;top:164px;width:41px;height:17px;font-size:13px;color:#000;line-height:17px;filter:url(#c1);"><span style="display:inline-block;transform:scaleY(1.1);transform-origin:50% 12.80px"><i class="c" style="width:9px">U</i><i class="c" style="width:9px">S</i><i class="c" style="width:10px">G</i><i class="c" style="width:9px">S</i></span></div>
<div class="a t" style="left:135px;top:164px;width:60px;height:17px;font-size:13px;color:#000;line-height:17px;filter:url(#c1);"><span style="display:inline-block;transform:scaleY(1.1);transform-origin:50% 12.80px"><i class="c" style="width:7px">1</i><i class="c" style="width:7px">4</i><i class="c" style="width:7px">3</i><i class="c" style="width:7px">0</i><i class="c" style="width:7px">6</i><i class="c" style="width:7px">5</i><i class="c" style="width:7px">0</i><i class="c" style="width:7px">0</i></span></div>
<div class="a t" style="left:274px;top:164px;width:47px;height:17px;font-size:13px;color:#000;line-height:17px;filter:url(#c1);"><span style="display:inline-block;transform:scaleY(1.1);transform-origin:50% 12.80px"><i class="c" style="width:7px">1</i><i class="c" style="width:7px">0</i><i class="c" style="width:4px">/</i><i class="c" style="width:7px">2</i><i class="c" style="width:4px">/</i><i class="c" style="width:7px">9</i><i class="c" style="width:7px">0</i></span></div>
<div class="a t" style="left:440px;top:164px;width:18px;height:17px;font-size:13px;color:#000;line-height:17px;filter:url(#c1);"><span style="display:inline-block;transform:scaleY(1.1);transform-origin:50% 12.80px"><i class="c" style="width:7px">8</i><i class="c" style="width:7px">5</i></span></div>
<div class="a t" style="left:55px;top:181px;width:41px;height:17px;font-size:13px;color:#000;line-height:17px;filter:url(#c1);"><span style="display:inline-block;transform:scaleY(1.1);transform-origin:50% 12.80px"><i class="c" style="width:9px">U</i><i class="c" style="width:9px">S</i><i class="c" style="width:10px">G</i><i class="c" style="width:9px">S</i></span></div>
<div class="a t" style="left:135px;top:181px;width:60px;height:17px;font-size:13px;color:#000;line-height:17px;filter:url(#c1);"><span style="display:inline-block;transform:scaleY(1.1);transform-origin:50% 12.80px"><i class="c" style="width:7px">1</i><i class="c" style="width:7px">4</i><i class="c" style="width:7px">3</i><i class="c" style="width:7px">0</i><i class="c" style="width:7px">6</i><i class="c" style="width:7px">5</i><i class="c" style="width:7px">0</i><i class="c" style="width:7px">0</i></span></div>
<div class="a t" style="left:274px;top:181px;width:47px;height:17px;font-size:13px;color:#000;line-height:17px;filter:url(#c1);"><span style="display:inline-block;transform:scaleY(1.1);transform-origin:50% 12.80px"><i class="c" style="width:7px">1</i><i class="c" style="width:7px">0</i><i class="c" style="width:4px">/</i><i class="c" style="width:7px">3</i><i class="c" style="width:4px">/</i><i class="c" style="width:7px">9</i><i class="c" style="width:7px">0</i></span></div>
<div class="a t" style="left:440px;top:181px;width:18px;height:17px;font-size:13px;color:#000;line-height:17px;filter:url(#c1);"><span style="display:inline-block;transform:scaleY(1.1);transform-origin:50% 12.80px"><i class="c" style="width:7px">9</i><i class="c" style="width:7px">3</i></span></div>
<div class="a t" style="left:55px;top:198px;width:41px;height:17px;font-size:13px;color:#000;line-height:17px;filter:url(#c1);"><span style="display:inline-block;transform:scaleY(1.1);transform-origin:50% 12.80px"><i class="c" style="width:9px">U</i><i class="c" style="width:9px">S</i><i class="c" style="width:10px">G</i><i class="c" style="width:9px">S</i></span></div>
<div class="a t" style="left:135px;top:198px;width:60px;height:17px;font-size:13px;color:#000;line-height:17px;filter:url(#c1);"><span style="display:inline-block;transform:scaleY(1.1);transform-origin:50% 12.80px"><i class="c" style="width:7px">1</i><i class="c" style="width:7px">4</i><i class="c" style="width:7px">3</i><i class="c" style="width:7px">0</i><i class="c" style="width:7px">6</i><i class="c" style="width:7px">5</i><i class="c" style="width:7px">0</i><i class="c" style="width:7px">0</i></span></div>
<div class="a t" style="left:274px;top:198px;width:47px;height:17px;font-size:13px;color:#000;line-height:17px;filter:url(#c1);"><span style="display:inline-block;transform:scaleY(1.1);transform-origin:50% 12.80px"><i class="c" style="width:7px">1</i><i class="c" style="width:7px">0</i><i class="c" style="width:4px">/</i><i class="c" style="width:7px">4</i><i class="c" style="width:4px">/</i><i class="c" style="width:7px">9</i><i class="c" style="width:7px">0</i></span></div>
<div class="a t" style="left:440px;top:198px;width:18px;height:17px;font-size:13px;color:#000;line-height:17px;filter:url(#c1);"><span style="display:inline-block;transform:scaleY(1.1);transform-origin:50% 12.80px"><i class="c" style="width:7px">9</i><i class="c" style="width:7px">6</i></span></div>
<div class="a t" style="left:55px;top:215px;width:41px;height:17px;font-size:13px;color:#000;line-height:17px;filter:url(#c1);"><span style="display:inline-block;transform:scaleY(1.1);transform-origin:50% 12.80px"><i class="c" style="width:9px">U</i><i class="c" style="width:9px">S</i><i class="c" style="width:10px">G</i><i class="c" style="width:9px">S</i></span></div>
<div class="a t" style="left:135px;top:215px;width:60px;height:17px;font-size:13px;color:#000;line-height:17px;filter:url(#c1);"><span style="display:inline-block;transform:scaleY(1.1);transform-origin:50% 12.80px"><i class="c" style="width:7px">1</i><i class="c" style="width:7px">4</i><i class="c" style="width:7px">3</i><i class="c" style="width:7px">0</i><i class="c" style="width:7px">6</i><i class="c" style="width:7px">5</i><i class="c" style="width:7px">0</i><i class="c" style="width:7px">0</i></span></div>
<div class="a t" style="left:274px;top:215px;width:47px;height:17px;font-size:13px;color:#000;line-height:17px;filter:url(#c1);"><span style="display:inline-block;transform:scaleY(1.1);transform-origin:50% 12.80px"><i class="c" style="width:7px">1</i><i class="c" style="width:7px">0</i><i class="c" style="width:4px">/</i><i class="c" style="width:7px">5</i><i class="c" style="width:4px">/</i><i class="c" style="width:7px">9</i><i class="c" style="width:7px">0</i></span></div>
<div class="a t" style="left:436px;top:215px;width:25px;height:17px;font-size:13px;color:#000;line-height:17px;filter:url(#c1);"><span style="display:inline-block;transform:scaleY(1.1);transform-origin:50% 12.80px"><i class="c" style="width:7px">1</i><i class="c" style="width:7px">0</i><i class="c" style="width:7px">1</i></span></div>
<div class="a t" style="left:55px;top:232px;width:41px;height:17px;font-size:13px;color:#000;line-height:17px;filter:url(#c1);"><span style="display:inline-block;transform:scaleY(1.1);transform-origin:50% 12.80px"><i class="c" style="width:9px">U</i><i class="c" style="width:9px">S</i><i class="c" style="width:10px">G</i><i class="c" style="width:9px">S</i></span></div>
<div class="a t" style="left:135px;top:232px;width:60px;height:17px;font-size:13px;color:#000;line-height:17px;filter:url(#c1);"><span style="display:inline-block;transform:scaleY(1.1);transform-origin:50% 12.80px"><i class="c" style="width:7px">1</i><i class="c" style="width:7px">4</i><i class="c" style="width:7px">3</i><i class="c" style="width:7px">0</i><i class="c" style="width:7px">6</i><i class="c" style="width:7px">5</i><i class="c" style="width:7px">0</i><i class="c" style="width:7px">0</i></span></div>
<div class="a t" style="left:274px;top:232px;width:47px;height:17px;font-size:13px;color:#000;line-height:17px;filter:url(#c1);"><span style="display:inline-block;transform:scaleY(1.1);transform-origin:50% 12.80px"><i class="c" style="width:7px">1</i><i class="c" style="width:7px">0</i><i class="c" style="width:4px">/</i><i class="c" style="width:7px">6</i><i class="c" style="width:4px">/</i><i class="c" style="width:7px">9</i><i class="c" style="width:7px">0</i></span></div>
<div class="a t" style="left:436px;top:232px;width:25px;height:17px;font-size:13px;color:#000;line-height:17px;filter:url(#c1);"><span style="display:inline-block;transform:scaleY(1.1);transform-origin:50% 12.80px"><i class="c" style="width:7px">1</i><i class="c" style="width:7px">0</i><i class="c" style="width:7px">6</i></span></div>
<div class="a t" style="left:55px;top:249px;width:41px;height:17px;font-size:13px;color:#000;line-height:17px;filter:url(#c1);"><span style="display:inline-block;transform:scaleY(1.1);transform-origin:50% 12.80px"><i class="c" style="width:9px">U</i><i class="c" style="width:9px">S</i><i class="c" style="width:10px">G</i><i class="c" style="width:9px">S</i></span></div>
<div class="a t" style="left:135px;top:249px;width:60px;height:17px;font-size:13px;color:#000;line-height:17px;filter:url(#c1);"><span style="display:inline-block;transform:scaleY(1.1);transform-origin:50% 12.80px"><i class="c" style="width:7px">1</i><i class="c" style="width:7px">4</i><i class="c" style="width:7px">3</i><i class="c" style="width:7px">0</i><i class="c" style="width:7px">6</i><i class="c" style="width:7px">5</i><i class="c" style="width:7px">0</i><i class="c" style="width:7px">0</i></span></div>
<div class="a t" style="left:274px;top:249px;width:47px;height:17px;font-size:13px;color:#000;line-height:17px;filter:url(#c1);"><span style="display:inline-block;transform:scaleY(1.1);transform-origin:50% 12.80px"><i class="c" style="width:7px">1</i><i class="c" style="width:7px">0</i><i class="c" style="width:4px">/</i><i class="c" style="width:7px">7</i><i class="c" style="width:4px">/</i><i class="c" style="width:7px">9</i><i class="c" style="width:7px">0</i></span></div>
<div class="a t" style="left:440px;top:249px;width:18px;height:17px;font-size:13px;color:#000;line-height:17px;filter:url(#c1);"><span style="display:inline-block;transform:scaleY(1.1);transform-origin:50% 12.80px"><i class="c" style="width:7px">9</i><i class="c" style="width:7px">4</i></span></div>
<div class="a t" style="left:55px;top:266px;width:41px;height:17px;font-size:13px;color:#000;line-height:17px;filter:url(#c1);"><span style="display:inline-block;transform:scaleY(1.1);transform-origin:50% 12.80px"><i class="c" style="width:9px">U</i><i class="c" style="width:9px">S</i><i class="c" style="width:10px">G</i><i class="c" style="width:9px">S</i></span></div>
<div class="a t" style="left:135px;top:266px;width:60px;height:17px;font-size:13px;color:#000;line-height:17px;filter:url(#c1);"><span style="display:inline-block;transform:scaleY(1.1);transform-origin:50% 12.80px"><i class="c" style="width:7px">1</i><i class="c" style="width:7px">4</i><i class="c" style="width:7px">3</i><i class="c" style="width:7px">0</i><i class="c" style="width:7px">6</i><i class="c" style="width:7px">5</i><i class="c" style="width:7px">0</i><i class="c" style="width:7px">0</i></span></div>
<div class="a t" style="left:274px;top:266px;width:47px;height:17px;font-size:13px;color:#000;line-height:17px;filter:url(#c1);"><span style="display:inline-block;transform:scaleY(1.1);transform-origin:50% 12.80px"><i class="c" style="width:7px">1</i><i class="c" style="width:7px">0</i><i class="c" style="width:4px">/</i><i class="c" style="width:7px">8</i><i class="c" style="width:4px">/</i><i class="c" style="width:7px">9</i><i class="c" style="width:7px">0</i></span></div>
<div class="a t" style="left:440px;top:266px;width:18px;height:17px;font-size:13px;color:#000;line-height:17px;filter:url(#c1);"><span style="display:inline-block;transform:scaleY(1.1);transform-origin:50% 12.80px"><i class="c" style="width:7px">8</i><i class="c" style="width:7px">7</i></span></div>
<div class="a t" style="left:55px;top:283px;width:41px;height:17px;font-size:13px;color:#000;line-height:17px;filter:url(#c1);"><span style="display:inline-block;transform:scaleY(1.1);transform-origin:50% 12.80px"><i class="c" style="width:9px">U</i><i class="c" style="width:9px">S</i><i class="c" style="width:10px">G</i><i class="c" style="width:9px">S</i></span></div>
<div class="a t" style="left:135px;top:283px;width:60px;height:17px;font-size:13px;color:#000;line-height:17px;filter:url(#c1);"><span style="display:inline-block;transform:scaleY(1.1);transform-origin:50% 12.80px"><i class="c" style="width:7px">1</i><i class="c" style="width:7px">4</i><i class="c" style="width:7px">3</i><i class="c" style="width:7px">0</i><i class="c" style="width:7px">6</i><i class="c" style="width:7px">5</i><i class="c" style="width:7px">0</i><i class="c" style="width:7px">0</i></span></div>
<div class="a t" style="left:274px;top:283px;width:47px;height:17px;font-size:13px;color:#000;line-height:17px;filter:url(#c1);"><span style="display:inline-block;transform:scaleY(1.1);transform-origin:50% 12.80px"><i class="c" style="width:7px">1</i><i class="c" style="width:7px">0</i><i class="c" style="width:4px">/</i><i class="c" style="width:7px">9</i><i class="c" style="width:4px">/</i><i class="c" style="width:7px">9</i><i class="c" style="width:7px">0</i></span></div>
<div class="a t" style="left:440px;top:283px;width:18px;height:17px;font-size:13px;color:#000;line-height:17px;filter:url(#c1);"><span style="display:inline-block;transform:scaleY(1.1);transform-origin:50% 12.80px"><i class="c" style="width:7px">8</i><i class="c" style="width:7px">4</i></span></div>
<div class="a t" style="left:55px;top:300px;width:41px;height:17px;font-size:13px;color:#000;line-height:17px;filter:url(#c1);"><span style="display:inline-block;transform:scaleY(1.1);transform-origin:50% 12.80px"><i class="c" style="width:9px">U</i><i class="c" style="width:9px">S</i><i class="c" style="width:10px">G</i><i class="c" style="width:9px">S</i></span></div>
<div class="a t" style="left:135px;top:300px;width:60px;height:17px;font-size:13px;color:#000;line-height:17px;filter:url(#c1);"><span style="display:inline-block;transform:scaleY(1.1);transform-origin:50% 12.80px"><i class="c" style="width:7px">1</i><i class="c" style="width:7px">4</i><i class="c" style="width:7px">3</i><i class="c" style="width:7px">0</i><i class="c" style="width:7px">6</i><i class="c" style="width:7px">5</i><i class="c" style="width:7px">0</i><i class="c" style="width:7px">0</i></span></div>
<div class="a t" style="left:270px;top:300px;width:54px;height:17px;font-size:13px;color:#000;line-height:17px;filter:url(#c1);"><span style="display:inline-block;transform:scaleY(1.1);transform-origin:50% 12.80px"><i class="c" style="width:7px">1</i><i class="c" style="width:7px">0</i><i class="c" style="width:4px">/</i><i class="c" style="width:7px">1</i><i class="c" style="width:7px">0</i><i class="c" style="width:4px">/</i><i class="c" style="width:7px">9</i><i class="c" style="width:7px">0</i></span></div>
<div class="a t" style="left:440px;top:300px;width:18px;height:17px;font-size:13px;color:#000;line-height:17px;filter:url(#c1);"><span style="display:inline-block;transform:scaleY(1.1);transform-origin:50% 12.80px"><i class="c" style="width:7px">8</i><i class="c" style="width:7px">2</i></span></div>
<div class="a t" style="left:55px;top:317px;width:41px;height:17px;font-size:13px;color:#000;line-height:17px;filter:url(#c1);"><span style="display:inline-block;transform:scaleY(1.1);transform-origin:50% 12.80px"><i class="c" style="width:9px">U</i><i class="c" style="width:9px">S</i><i class="c" style="width:10px">G</i><i class="c" style="width:9px">S</i></span></div>
<div class="a t" style="left:135px;top:317px;width:60px;height:17px;font-size:13px;color:#000;line-height:17px;filter:url(#c1);"><span style="display:inline-block;transform:scaleY(1.1);transform-origin:50% 12.80px"><i class="c" style="width:7px">1</i><i class="c" style="width:7px">4</i><i class="c" style="width:7px">3</i><i class="c" style="width:7px">0</i><i class="c" style="width:7px">6</i><i class="c" style="width:7px">5</i><i class="c" style="width:7px">0</i><i class="c" style="width:7px">0</i></span></div>
<div class="a t" style="left:270px;top:317px;width:54px;height:17px;font-size:13px;color:#000;line-height:17px;filter:url(#c1);"><span style="display:inline-block;transform:scaleY(1.1);transform-origin:50% 12.80px"><i class="c" style="width:7px">1</i><i class="c" style="width:7px">0</i><i class="c" style="width:4px">/</i><i class="c" style="width:7px">1</i><i class="c" style="width:7px">1</i><i class="c" style="width:4px">/</i><i class="c" style="width:7px">9</i><i class="c" style="width:7px">0</i></span></div>
<div class="a t" style="left:440px;top:317px;width:18px;height:17px;font-size:13px;color:#000;line-height:17px;filter:url(#c1);"><span style="display:inline-block;transform:scaleY(1.1);transform-origin:50% 12.80px"><i class="c" style="width:7px">8</i><i class="c" style="width:7px">3</i></span></div>
<div class="a t" style="left:55px;top:334px;width:41px;height:17px;font-size:13px;color:#000;line-height:17px;filter:url(#c1);"><span style="display:inline-block;transform:scaleY(1.1);transform-origin:50% 12.80px"><i class="c" style="width:9px">U</i><i class="c" style="width:9px">S</i><i class="c" style="width:10px">G</i><i class="c" style="width:9px">S</i></span></div>
<div class="a t" style="left:135px;top:334px;width:60px;height:17px;font-size:13px;color:#000;line-height:17px;filter:url(#c1);"><span style="display:inline-block;transform:scaleY(1.1);transform-origin:50% 12.80px"><i class="c" style="width:7px">1</i><i class="c" style="width:7px">4</i><i class="c" style="width:7px">3</i><i class="c" style="width:7px">0</i><i class="c" style="width:7px">6</i><i class="c" style="width:7px">5</i><i class="c" style="width:7px">0</i><i class="c" style="width:7px">0</i></span></div>
<div class="a t" style="left:270px;top:334px;width:54px;height:17px;font-size:13px;color:#000;line-height:17px;filter:url(#c1);"><span style="display:inline-block;transform:scaleY(1.1);transform-origin:50% 12.80px"><i class="c" style="width:7px">1</i><i class="c" style="width:7px">0</i><i class="c" style="width:4px">/</i><i class="c" style="width:7px">1</i><i class="c" style="width:7px">2</i><i class="c" style="width:4px">/</i><i class="c" style="width:7px">9</i><i class="c" style="width:7px">0</i></span></div>
<div class="a t" style="left:440px;top:334px;width:18px;height:17px;font-size:13px;color:#000;line-height:17px;filter:url(#c1);"><span style="display:inline-block;transform:scaleY(1.1);transform-origin:50% 12.80px"><i class="c" style="width:7px">9</i><i class="c" style="width:7px">4</i></span></div>
<div class="a t" style="left:55px;top:351px;width:41px;height:17px;font-size:13px;color:#000;line-height:17px;filter:url(#c1);"><span style="display:inline-block;transform:scaleY(1.1);transform-origin:50% 12.80px"><i class="c" style="width:9px">U</i><i class="c" style="width:9px">S</i><i class="c" style="width:10px">G</i><i class="c" style="width:9px">S</i></span></div>
<div class="a t" style="left:135px;top:351px;width:60px;height:17px;font-size:13px;color:#000;line-height:17px;filter:url(#c1);"><span style="display:inline-block;transform:scaleY(1.1);transform-origin:50% 12.80px"><i class="c" style="width:7px">1</i><i class="c" style="width:7px">4</i><i class="c" style="width:7px">3</i><i class="c" style="width:7px">0</i><i class="c" style="width:7px">6</i><i class="c" style="width:7px">5</i><i class="c" style="width:7px">0</i><i class="c" style="width:7px">0</i></span></div>
<div class="a t" style="left:270px;top:351px;width:54px;height:17px;font-size:13px;color:#000;line-height:17px;filter:url(#c1);"><span style="display:inline-block;transform:scaleY(1.1);transform-origin:50% 12.80px"><i class="c" style="width:7px">1</i><i class="c" style="width:7px">0</i><i class="c" style="width:4px">/</i><i class="c" style="width:7px">1</i><i class="c" style="width:7px">3</i><i class="c" style="width:4px">/</i><i class="c" style="width:7px">9</i><i class="c" style="width:7px">0</i></span></div>
<div class="a t" style="left:440px;top:351px;width:18px;height:17px;font-size:13px;color:#000;line-height:17px;filter:url(#c1);"><span style="display:inline-block;transform:scaleY(1.1);transform-origin:50% 12.80px"><i class="c" style="width:7px">9</i><i class="c" style="width:7px">9</i></span></div>
<div class="a t" style="left:55px;top:368px;width:41px;height:17px;font-size:13px;color:#000;line-height:17px;filter:url(#c1);"><span style="display:inline-block;transform:scaleY(1.1);transform-origin:50% 12.80px"><i class="c" style="width:9px">U</i><i class="c" style="width:9px">S</i><i class="c" style="width:10px">G</i><i class="c" style="width:9px">S</i></span></div>
<div class="a t" style="left:135px;top:368px;width:60px;height:17px;font-size:13px;color:#000;line-height:17px;filter:url(#c1);"><span style="display:inline-block;transform:scaleY(1.1);transform-origin:50% 12.80px"><i class="c" style="width:7px">1</i><i class="c" style="width:7px">4</i><i class="c" style="width:7px">3</i><i class="c" style="width:7px">0</i><i class="c" style="width:7px">6</i><i class="c" style="width:7px">5</i><i class="c" style="width:7px">0</i><i class="c" style="width:7px">0</i></span></div>
<div class="a t" style="left:270px;top:368px;width:54px;height:17px;font-size:13px;color:#000;line-height:17px;filter:url(#c1);"><span style="display:inline-block;transform:scaleY(1.1);transform-origin:50% 12.80px"><i class="c" style="width:7px">1</i><i class="c" style="width:7px">0</i><i class="c" style="width:4px">/</i><i class="c" style="width:7px">1</i><i class="c" style="width:7px">4</i><i class="c" style="width:4px">/</i><i class="c" style="width:7px">9</i><i class="c" style="width:7px">0</i></span></div>
<div class="a t" style="left:440px;top:368px;width:18px;height:17px;font-size:13px;color:#000;line-height:17px;filter:url(#c1);"><span style="display:inline-block;transform:scaleY(1.1);transform-origin:50% 12.80px"><i class="c" style="width:7px">9</i><i class="c" style="width:7px">7</i></span></div>
<div class="a t" style="left:55px;top:385px;width:41px;height:17px;font-size:13px;color:#000;line-height:17px;filter:url(#c1);"><span style="display:inline-block;transform:scaleY(1.1);transform-origin:50% 12.80px"><i class="c" style="width:9px">U</i><i class="c" style="width:9px">S</i><i class="c" style="width:10px">G</i><i class="c" style="width:9px">S</i></span></div>
<div class="a t" style="left:135px;top:385px;width:60px;height:17px;font-size:13px;color:#000;line-height:17px;filter:url(#c1);"><span style="display:inline-block;transform:scaleY(1.1);transform-origin:50% 12.80px"><i class="c" style="width:7px">1</i><i class="c" style="width:7px">4</i><i class="c" style="width:7px">3</i><i class="c" style="width:7px">0</i><i class="c" style="width:7px">6</i><i class="c" style="width:7px">5</i><i class="c" style="width:7px">0</i><i class="c" style="width:7px">0</i></span></div>
<div class="a t" style="left:270px;top:385px;width:54px;height:17px;font-size:13px;color:#000;line-height:17px;filter:url(#c1);"><span style="display:inline-block;transform:scaleY(1.1);transform-origin:50% 12.80px"><i class="c" style="width:7px">1</i><i class="c" style="width:7px">0</i><i class="c" style="width:4px">/</i><i class="c" style="width:7px">1</i><i class="c" style="width:7px">5</i><i class="c" style="width:4px">/</i><i class="c" style="width:7px">9</i><i class="c" style="width:7px">0</i></span></div>
<div class="a t" style="left:436px;top:385px;width:25px;height:17px;font-size:13px;color:#000;line-height:17px;filter:url(#c1);"><span style="display:inline-block;transform:scaleY(1.1);transform-origin:50% 12.80px"><i class="c" style="width:7px">1</i><i class="c" style="width:7px">3</i><i class="c" style="width:7px">0</i></span></div>
<div class="a t" style="left:55px;top:402px;width:41px;height:17px;font-size:13px;color:#000;line-height:17px;filter:url(#c1);"><span style="display:inline-block;transform:scaleY(1.1);transform-origin:50% 12.80px"><i class="c" style="width:9px">U</i><i class="c" style="width:9px">S</i><i class="c" style="width:10px">G</i><i class="c" style="width:9px">S</i></span></div>
<div class="a t" style="left:135px;top:402px;width:60px;height:17px;font-size:13px;color:#000;line-height:17px;filter:url(#c1);"><span style="display:inline-block;transform:scaleY(1.1);transform-origin:50% 12.80px"><i class="c" style="width:7px">1</i><i class="c" style="width:7px">4</i><i class="c" style="width:7px">3</i><i class="c" style="width:7px">0</i><i class="c" style="width:7px">6</i><i class="c" style="width:7px">5</i><i class="c" style="width:7px">0</i><i class="c" style="width:7px">0</i></span></div>
<div class="a t" style="left:270px;top:402px;width:54px;height:17px;font-size:13px;color:#000;line-height:17px;filter:url(#c1);"><span style="display:inline-block;transform:scaleY(1.1);transform-origin:50% 12.80px"><i class="c" style="width:7px">1</i><i class="c" style="width:7px">0</i><i class="c" style="width:4px">/</i><i class="c" style="width:7px">1</i><i class="c" style="width:7px">6</i><i class="c" style="width:4px">/</i><i class="c" style="width:7px">9</i><i class="c" style="width:7px">0</i></span></div>
<div class="a t" style="left:436px;top:402px;width:25px;height:17px;font-size:13px;color:#000;line-height:17px;filter:url(#c1);"><span style="display:inline-block;transform:scaleY(1.1);transform-origin:50% 12.80px"><i class="c" style="width:7px">1</i><i class="c" style="width:7px">7</i><i class="c" style="width:7px">7</i></span></div>
<div class="a t" style="left:55px;top:419px;width:41px;height:17px;font-size:13px;color:#000;line-height:17px;filter:url(#c1);"><span style="display:inline-block;transform:scaleY(1.1);transform-origin:50% 12.80px"><i class="c" style="width:9px">U</i><i class="c" style="width:9px">S</i><i class="c" style="width:10px">G</i><i class="c" style="width:9px">S</i></span></div>
<div class="a t" style="left:135px;top:419px;width:60px;height:17px;font-size:13px;color:#000;line-height:17px;filter:url(#c1);"><span style="display:inline-block;transform:scaleY(1.1);transform-origin:50% 12.80px"><i class="c" style="width:7px">1</i><i class="c" style="width:7px">4</i><i class="c" style="width:7px">3</i><i class="c" style="width:7px">0</i><i class="c" style="width:7px">6</i><i class="c" style="width:7px">5</i><i class="c" style="width:7px">0</i><i class="c" style="width:7px">0</i></span></div>
<div class="a t" style="left:270px;top:419px;width:54px;height:17px;font-size:13px;color:#000;line-height:17px;filter:url(#c1);"><span style="display:inline-block;transform:scaleY(1.1);transform-origin:50% 12.80px"><i class="c" style="width:7px">1</i><i class="c" style="width:7px">0</i><i class="c" style="width:4px">/</i><i class="c" style="width:7px">1</i><i class="c" style="width:7px">7</i><i class="c" style="width:4px">/</i><i class="c" style="width:7px">9</i><i class="c" style="width:7px">0</i></span></div>
<div class="a t" style="left:436px;top:419px;width:25px;height:17px;font-size:13px;color:#000;line-height:17px;filter:url(#c1);"><span style="display:inline-block;transform:scaleY(1.1);transform-origin:50% 12.80px"><i class="c" style="width:7px">1</i><i class="c" style="width:7px">5</i><i class="c" style="width:7px">2</i></span></div>
<div class="a t" style="left:55px;top:436px;width:41px;height:17px;font-size:13px;color:#000;line-height:17px;filter:url(#c1);"><span style="display:inline-block;transform:scaleY(1.1);transform-origin:50% 12.80px"><i class="c" style="width:9px">U</i><i class="c" style="width:9px">S</i><i class="c" style="width:10px">G</i><i class="c" style="width:9px">S</i></span></div>
<div class="a t" style="left:135px;top:436px;width:60px;height:17px;font-size:13px;color:#000;line-height:17px;filter:url(#c1);"><span style="display:inline-block;transform:scaleY(1.1);transform-origin:50% 12.80px"><i class="c" style="width:7px">1</i><i class="c" style="width:7px">4</i><i class="c" style="width:7px">3</i><i class="c" style="width:7px">0</i><i class="c" style="width:7px">6</i><i class="c" style="width:7px">5</i><i class="c" style="width:7px">0</i><i class="c" style="width:7px">0</i></span></div>
<div class="a t" style="left:270px;top:436px;width:54px;height:17px;font-size:13px;color:#000;line-height:17px;filter:url(#c1);"><span style="display:inline-block;transform:scaleY(1.1);transform-origin:50% 12.80px"><i class="c" style="width:7px">1</i><i class="c" style="width:7px">0</i><i class="c" style="width:4px">/</i><i class="c" style="width:7px">1</i><i class="c" style="width:7px">8</i><i class="c" style="width:4px">/</i><i class="c" style="width:7px">9</i><i class="c" style="width:7px">0</i></span></div>
<div class="a t" style="left:436px;top:436px;width:25px;height:17px;font-size:13px;color:#000;line-height:17px;filter:url(#c1);"><span style="display:inline-block;transform:scaleY(1.1);transform-origin:50% 12.80px"><i class="c" style="width:7px">2</i><i class="c" style="width:7px">4</i><i class="c" style="width:7px">1</i></span></div>
<div class="a t" style="left:55px;top:453px;width:41px;height:17px;font-size:13px;color:#000;line-height:17px;filter:url(#c1);"><span style="display:inline-block;transform:scaleY(1.1);transform-origin:50% 12.80px"><i class="c" style="width:9px">U</i><i class="c" style="width:9px">S</i><i class="c" style="width:10px">G</i><i class="c" style="width:9px">S</i></span></div>
<div class="a t" style="left:135px;top:453px;width:60px;height:17px;font-size:13px;color:#000;line-height:17px;filter:url(#c1);"><span style="display:inline-block;transform:scaleY(1.1);transform-origin:50% 12.80px"><i class="c" style="width:7px">1</i><i class="c" style="width:7px">4</i><i class="c" style="width:7px">3</i><i class="c" style="width:7px">0</i><i class="c" style="width:7px">6</i><i class="c" style="width:7px">5</i><i class="c" style="width:7px">0</i><i class="c" style="width:7px">0</i></span></div>
<div class="a t" style="left:270px;top:453px;width:54px;height:17px;font-size:13px;color:#000;line-height:17px;filter:url(#c1);"><span style="display:inline-block;transform:scaleY(1.1);transform-origin:50% 12.80px"><i class="c" style="width:7px">1</i><i class="c" style="width:7px">0</i><i class="c" style="width:4px">/</i><i class="c" style="width:7px">1</i><i class="c" style="width:7px">9</i><i class="c" style="width:4px">/</i><i class="c" style="width:7px">9</i><i class="c" style="width:7px">0</i></span></div>
<div class="a t" style="left:436px;top:453px;width:25px;height:17px;font-size:13px;color:#000;line-height:17px;filter:url(#c1);"><span style="display:inline-block;transform:scaleY(1.1);transform-origin:50% 12.80px"><i class="c" style="width:7px">3</i><i class="c" style="width:7px">5</i><i class="c" style="width:7px">0</i></span></div>
<div class="a t" style="left:55px;top:470px;width:41px;height:17px;font-size:13px;color:#000;line-height:17px;filter:url(#c1);"><span style="display:inline-block;transform:scaleY(1.1);transform-origin:50% 12.80px"><i class="c" style="width:9px">U</i><i class="c" style="width:9px">S</i><i class="c" style="width:10px">G</i><i class="c" style="width:9px">S</i></span></div>
<div class="a t" style="left:135px;top:470px;width:60px;height:17px;font-size:13px;color:#000;line-height:17px;filter:url(#c1);"><span style="display:inline-block;transform:scaleY(1.1);transform-origin:50% 12.80px"><i class="c" style="width:7px">1</i><i class="c" style="width:7px">4</i><i class="c" style="width:7px">3</i><i class="c" style="width:7px">0</i><i class="c" style="width:7px">6</i><i class="c" style="width:7px">5</i><i class="c" style="width:7px">0</i><i class="c" style="width:7px">0</i></span></div>
<div class="a t" style="left:270px;top:470px;width:54px;height:17px;font-size:13px;color:#000;line-height:17px;filter:url(#c1);"><span style="display:inline-block;transform:scaleY(1.1);transform-origin:50% 12.80px"><i class="c" style="width:7px">1</i><i class="c" style="width:7px">0</i><i class="c" style="width:4px">/</i><i class="c" style="width:7px">2</i><i class="c" style="width:7px">0</i><i class="c" style="width:4px">/</i><i class="c" style="width:7px">9</i><i class="c" style="width:7px">0</i></span></div>
<div class="a t" style="left:436px;top:470px;width:25px;height:17px;font-size:13px;color:#000;line-height:17px;filter:url(#c1);"><span style="display:inline-block;transform:scaleY(1.1);transform-origin:50% 12.80px"><i class="c" style="width:7px">2</i><i class="c" style="width:7px">0</i><i class="c" style="width:7px">9</i></span></div>
<div class="a t" style="left:55px;top:487px;width:41px;height:17px;font-size:13px;color:#000;line-height:17px;filter:url(#c1);"><span style="display:inline-block;transform:scaleY(1.1);transform-origin:50% 12.80px"><i class="c" style="width:9px">U</i><i class="c" style="width:9px">S</i><i class="c" style="width:10px">G</i><i class="c" style="width:9px">S</i></span></div>
<div class="a t" style="left:135px;top:487px;width:60px;height:17px;font-size:13px;color:#000;line-height:17px;filter:url(#c1);"><span style="display:inline-block;transform:scaleY(1.1);transform-origin:50% 12.80px"><i class="c" style="width:7px">1</i><i class="c" style="width:7px">4</i><i class="c" style="width:7px">3</i><i class="c" style="width:7px">0</i><i class="c" style="width:7px">6</i><i class="c" style="width:7px">5</i><i class="c" style="width:7px">0</i><i class="c" style="width:7px">0</i></span></div>
<div class="a t" style="left:270px;top:487px;width:54px;height:17px;font-size:13px;color:#000;line-height:17px;filter:url(#c1);"><span style="display:inline-block;transform:scaleY(1.1);transform-origin:50% 12.80px"><i class="c" style="width:7px">1</i><i class="c" style="width:7px">0</i><i class="c" style="width:4px">/</i><i class="c" style="width:7px">2</i><i class="c" style="width:7px">1</i><i class="c" style="width:4px">/</i><i class="c" style="width:7px">9</i><i class="c" style="width:7px">0</i></span></div>
<div class="a t" style="left:436px;top:487px;width:25px;height:17px;font-size:13px;color:#000;line-height:17px;filter:url(#c1);"><span style="display:inline-block;transform:scaleY(1.1);transform-origin:50% 12.80px"><i class="c" style="width:7px">2</i><i class="c" style="width:7px">7</i><i class="c" style="width:7px">2</i></span></div>
<div class="a t" style="left:55px;top:504px;width:41px;height:17px;font-size:13px;color:#000;line-height:17px;filter:url(#c1);"><span style="display:inline-block;transform:scaleY(1.1);transform-origin:50% 12.80px"><i class="c" style="width:9px">U</i><i class="c" style="width:9px">S</i><i class="c" style="width:10px">G</i><i class="c" style="width:9px">S</i></span></div>
<div class="a t" style="left:135px;top:504px;width:60px;height:17px;font-size:13px;color:#000;line-height:17px;filter:url(#c1);"><span style="display:inline-block;transform:scaleY(1.1);transform-origin:50% 12.80px"><i class="c" style="width:7px">1</i><i class="c" style="width:7px">4</i><i class="c" style="width:7px">3</i><i class="c" style="width:7px">0</i><i class="c" style="width:7px">6</i><i class="c" style="width:7px">5</i><i class="c" style="width:7px">0</i><i class="c" style="width:7px">0</i></span></div>
<div class="a t" style="left:270px;top:504px;width:54px;height:17px;font-size:13px;color:#000;line-height:17px;filter:url(#c1);"><span style="display:inline-block;transform:scaleY(1.1);transform-origin:50% 12.80px"><i class="c" style="width:7px">1</i><i class="c" style="width:7px">0</i><i class="c" style="width:4px">/</i><i class="c" style="width:7px">2</i><i class="c" style="width:7px">2</i><i class="c" style="width:4px">/</i><i class="c" style="width:7px">9</i><i class="c" style="width:7px">0</i></span></div>
<div class="a t" style="left:436px;top:504px;width:25px;height:17px;font-size:13px;color:#000;line-height:17px;filter:url(#c1);"><span style="display:inline-block;transform:scaleY(1.1);transform-origin:50% 12.80px"><i class="c" style="width:7px">5</i><i class="c" style="width:7px">7</i><i class="c" style="width:7px">5</i></span></div>
<div class="a t" style="left:55px;top:521px;width:41px;height:17px;font-size:13px;color:#000;line-height:17px;filter:url(#c1);"><span style="display:inline-block;transform:scaleY(1.1);transform-origin:50% 12.80px"><i class="c" style="width:9px">U</i><i class="c" style="width:9px">S</i><i class="c" style="width:10px">G</i><i class="c" style="width:9px">S</i></span></div>
<div class="a t" style="left:135px;top:521px;width:60px;height:17px;font-size:13px;color:#000;line-height:17px;filter:url(#c1);"><span style="display:inline-block;transform:scaleY(1.1);transform-origin:50% 12.80px"><i class="c" style="width:7px">1</i><i class="c" style="width:7px">4</i><i class="c" style="width:7px">3</i><i class="c" style="width:7px">0</i><i class="c" style="width:7px">6</i><i class="c" style="width:7px">5</i><i class="c" style="width:7px">0</i><i class="c" style="width:7px">0</i></span></div>
<div class="a t" style="left:270px;top:521px;width:54px;height:17px;font-size:13px;color:#000;line-height:17px;filter:url(#c1);"><span style="display:inline-block;transform:scaleY(1.1);transform-origin:50% 12.80px"><i class="c" style="width:7px">1</i><i class="c" style="width:7px">0</i><i class="c" style="width:4px">/</i><i class="c" style="width:7px">2</i><i class="c" style="width:7px">3</i><i class="c" style="width:4px">/</i><i class="c" style="width:7px">9</i><i class="c" style="width:7px">0</i></span></div>
<div class="a t" style="left:436px;top:521px;width:25px;height:17px;font-size:13px;color:#000;line-height:17px;filter:url(#c1);"><span style="display:inline-block;transform:scaleY(1.1);transform-origin:50% 12.80px"><i class="c" style="width:7px">3</i><i class="c" style="width:7px">1</i><i class="c" style="width:7px">5</i></span></div>
<div class="a" style="left:73px;top:549px;width:2px;height:2px;background:#000"></div>
<div class="a" style="left:162px;top:549px;width:2px;height:2px;background:#000"></div>
<div class="a" style="left:295px;top:549px;width:2px;height:2px;background:#000"></div>
<div class="a" style="left:446px;top:549px;width:2px;height:2px;background:#000"></div>
<div class="a" style="left:73px;top:566px;width:2px;height:2px;background:#000"></div>
<div class="a" style="left:162px;top:566px;width:2px;height:2px;background:#000"></div>
<div class="a" style="left:295px;top:566px;width:2px;height:2px;background:#000"></div>
<div class="a" style="left:446px;top:566px;width:2px;height:2px;background:#000"></div>
<div class="a" style="left:73px;top:583px;width:2px;height:2px;background:#000"></div>
<div class="a" style="left:162px;top:583px;width:2px;height:2px;background:#000"></div>
<div class="a" style="left:295px;top:583px;width:2px;height:2px;background:#000"></div>
<div class="a" style="left:446px;top:583px;width:2px;height:2px;background:#000"></div>
<div class="a t" style="left:55px;top:589px;width:41px;height:17px;font-size:13px;color:#000;line-height:17px;filter:url(#c1);"><span style="display:inline-block;transform:scaleY(1.1);transform-origin:50% 12.80px"><i class="c" style="width:9px">U</i><i class="c" style="width:9px">S</i><i class="c" style="width:10px">G</i><i class="c" style="width:9px">S</i></span></div>
<div class="a t" style="left:135px;top:589px;width:60px;height:17px;font-size:13px;color:#000;line-height:17px;filter:url(#c1);"><span style="display:inline-block;transform:scaleY(1.1);transform-origin:50% 12.80px"><i class="c" style="width:7px">1</i><i class="c" style="width:7px">4</i><i class="c" style="width:7px">3</i><i class="c" style="width:7px">0</i><i class="c" style="width:7px">6</i><i class="c" style="width:7px">5</i><i class="c" style="width:7px">0</i><i class="c" style="width:7px">0</i></span></div>
<div class="a t" style="left:274px;top:589px;width:47px;height:17px;font-size:13px;color:#000;line-height:17px;filter:url(#c1);"><span style="display:inline-block;transform:scaleY(1.1);transform-origin:50% 12.80px"><i class="c" style="width:7px">9</i><i class="c" style="width:4px">/</i><i class="c" style="width:7px">2</i><i class="c" style="width:7px">7</i><i class="c" style="width:4px">/</i><i class="c" style="width:7px">0</i><i class="c" style="width:7px">0</i></span></div>
<div class="a t" style="left:440px;top:589px;width:18px;height:17px;font-size:13px;color:#000;line-height:17px;filter:url(#c1);"><span style="display:inline-block;transform:scaleY(1.1);transform-origin:50% 12.80px"><i class="c" style="width:7px">8</i><i class="c" style="width:7px">3</i></span></div>
<div class="a t" style="left:55px;top:606px;width:41px;height:17px;font-size:13px;color:#000;line-height:17px;filter:url(#c1);"><span style="display:inline-block;transform:scaleY(1.1);transform-origin:50% 12.80px"><i class="c" style="width:9px">U</i><i class="c" style="width:9px">S</i><i class="c" style="width:10px">G</i><i class="c" style="width:9px">S</i></span></div>
<div class="a t" style="left:135px;top:606px;width:60px;height:17px;font-size:13px;color:#000;line-height:17px;filter:url(#c1);"><span style="display:inline-block;transform:scaleY(1.1);transform-origin:50% 12.80px"><i class="c" style="width:7px">1</i><i class="c" style="width:7px">4</i><i class="c" style="width:7px">3</i><i class="c" style="width:7px">0</i><i class="c" style="width:7px">6</i><i class="c" style="width:7px">5</i><i class="c" style="width:7px">0</i><i class="c" style="width:7px">0</i></span></div>
<div class="a t" style="left:274px;top:606px;width:47px;height:17px;font-size:13px;color:#000;line-height:17px;filter:url(#c1);"><span style="display:inline-block;transform:scaleY(1.1);transform-origin:50% 12.80px"><i class="c" style="width:7px">9</i><i class="c" style="width:4px">/</i><i class="c" style="width:7px">2</i><i class="c" style="width:7px">8</i><i class="c" style="width:4px">/</i><i class="c" style="width:7px">0</i><i class="c" style="width:7px">0</i></span></div>
<div class="a t" style="left:440px;top:606px;width:18px;height:17px;font-size:13px;color:#000;line-height:17px;filter:url(#c1);"><span style="display:inline-block;transform:scaleY(1.1);transform-origin:50% 12.80px"><i class="c" style="width:7px">8</i><i class="c" style="width:7px">2</i></span></div>
<div class="a t" style="left:55px;top:623px;width:41px;height:17px;font-size:13px;color:#000;line-height:17px;filter:url(#c1);"><span style="display:inline-block;transform:scaleY(1.1);transform-origin:50% 12.80px"><i class="c" style="width:9px">U</i><i class="c" style="width:9px">S</i><i class="c" style="width:10px">G</i><i class="c" style="width:9px">S</i></span></div>
<div class="a t" style="left:135px;top:623px;width:60px;height:17px;font-size:13px;color:#000;line-height:17px;filter:url(#c1);"><span style="display:inline-block;transform:scaleY(1.1);transform-origin:50% 12.80px"><i class="c" style="width:7px">1</i><i class="c" style="width:7px">4</i><i class="c" style="width:7px">3</i><i class="c" style="width:7px">0</i><i class="c" style="width:7px">6</i><i class="c" style="width:7px">5</i><i class="c" style="width:7px">0</i><i class="c" style="width:7px">0</i></span></div>
<div class="a t" style="left:274px;top:623px;width:47px;height:17px;font-size:13px;color:#000;line-height:17px;filter:url(#c1);"><span style="display:inline-block;transform:scaleY(1.1);transform-origin:50% 12.80px"><i class="c" style="width:7px">9</i><i class="c" style="width:4px">/</i><i class="c" style="width:7px">2</i><i class="c" style="width:7px">9</i><i class="c" style="width:4px">/</i><i class="c" style="width:7px">0</i><i class="c" style="width:7px">0</i></span></div>
<div class="a t" style="left:440px;top:623px;width:18px;height:17px;font-size:13px;color:#000;line-height:17px;filter:url(#c1);"><span style="display:inline-block;transform:scaleY(1.1);transform-origin:50% 12.80px"><i class="c" style="width:7px">8</i><i class="c" style="width:7px">3</i></span></div>
<div class="a t" style="left:55px;top:640px;width:41px;height:17px;font-size:13px;color:#000;line-height:17px;filter:url(#c1);"><span style="display:inline-block;transform:scaleY(1.1);transform-origin:50% 12.80px"><i class="c" style="width:9px">U</i><i class="c" style="width:9px">S</i><i class="c" style="width:10px">G</i><i class="c" style="width:9px">S</i></span></div>
<div class="a t" style="left:135px;top:640px;width:60px;height:17px;font-size:13px;color:#000;line-height:17px;filter:url(#c1);"><span style="display:inline-block;transform:scaleY(1.1);transform-origin:50% 12.80px"><i class="c" style="width:7px">1</i><i class="c" style="width:7px">4</i><i class="c" style="width:7px">3</i><i class="c" style="width:7px">0</i><i class="c" style="width:7px">6</i><i class="c" style="width:7px">5</i><i class="c" style="width:7px">0</i><i class="c" style="width:7px">0</i></span></div>
<div class="a t" style="left:274px;top:640px;width:47px;height:17px;font-size:13px;color:#000;line-height:17px;filter:url(#c1);"><span style="display:inline-block;transform:scaleY(1.1);transform-origin:50% 12.80px"><i class="c" style="width:7px">9</i><i class="c" style="width:4px">/</i><i class="c" style="width:7px">3</i><i class="c" style="width:7px">0</i><i class="c" style="width:4px">/</i><i class="c" style="width:7px">0</i><i class="c" style="width:7px">0</i></span></div>
<div class="a t" style="left:440px;top:640px;width:18px;height:17px;font-size:13px;color:#000;line-height:17px;filter:url(#c1);"><span style="display:inline-block;transform:scaleY(1.1);transform-origin:50% 12.80px"><i class="c" style="width:7px">8</i><i class="c" style="width:7px">6</i></span></div>
<div class="a" style="left:1010px;top:113px;width:12px;height:567px;background:#c0ccd9"></div>
<div class="a b" style="left:1010px;top:113px;width:12px;height:12px;background:#8499b2;border-style:solid;border-width:1px;border-color:#c8d4e1 #50637c #000 #8499b2"></div>
<div class="a" style="left:1011px;top:114px;width:1px;height:10px;background:#c8d4e1"></div>
<svg class="a" style="left:1014px;top:117px" width="5" height="3" shape-rendering="crispEdges"><rect x="2" y="0" width="1" height="1" fill="#000000"/><rect x="1" y="1" width="3" height="1" fill="#000000"/><rect x="0" y="2" width="5" height="1" fill="#000000"/></svg>
<div class="a b" style="left:1010px;top:662px;width:12px;height:6px;background:#8499b2;border-style:solid;border-width:1px;border-color:#c8d4e1 #50637c #000 #8499b2"></div>
<div class="a" style="left:1011px;top:663px;width:1px;height:4px;background:#c8d4e1"></div>
<div class="a b" style="left:1010px;top:668px;width:12px;height:12px;background:#8499b2;border-style:solid;border-width:1px;border-color:#c8d4e1 #50637c #50637c #8499b2"></div>
<div class="a" style="left:1011px;top:669px;width:1px;height:10px;background:#c8d4e1"></div>
<svg class="a" style="left:1014px;top:672px" width="5" height="3" shape-rendering="crispEdges"><rect x="0" y="0" width="5" height="1" fill="#000000"/><rect x="1" y="1" width="3" height="1" fill="#000000"/><rect x="2" y="2" width="1" height="1" fill="#000000"/></svg>
<div class="a" style="left:2px;top:680px;width:1020px;height:12px;background:#8499b2"></div>
<div class="a" style="left:50px;top:680px;width:558px;height:1px;background:#50637c"></div>
<div class="a b" style="left:2px;top:681px;width:12px;height:11px;background:#8499b2;border-style:solid;border-width:1px;border-color:#c8d4e1 #50637c #50637c #c8d4e1"></div>
<div class="a b" style="left:14px;top:681px;width:12px;height:11px;background:#8499b2;border-style:solid;border-width:1px;border-color:#c8d4e1 #50637c #50637c #c8d4e1"></div>
<div class="a b" style="left:26px;top:681px;width:12px;height:11px;background:#8499b2;border-style:solid;border-width:1px;border-color:#c8d4e1 #50637c #50637c #c8d4e1"></div>
<div class="a b" style="left:38px;top:681px;width:12px;height:11px;background:#8499b2;border-style:solid;border-width:1px;border-color:#c8d4e1 #50637c #50637c #c8d4e1"></div>
<svg class="a" style="left:0px;top:680px" width="240" height="13" shape-rendering="crispEdges">
<path d="M167.5 0.5 L163 11.5 L207 11.5 L211.5 0.5" fill="#8499b2" stroke="#000" stroke-width="1"/>
<path d="M122.5 0.5 L117 11.5 L163 11.5 L167.5 0.5" fill="#8499b2" stroke="#000" stroke-width="1"/>
<path d="M50 0 L55 12 L117 12 L123 0 Z" fill="#fff" stroke="none"/>
<path d="M50.5 0.5 L55 11.5 L117 11.5 L122.5 0.5" fill="none" stroke="#000" stroke-width="1"/>
</svg>
<div class="a t" style="left:59px;top:679px;width:60px;height:13px;font-size:10px;color:#000;font-weight:bold;line-height:13px;filter:url(#c1);"><span><i class="c" style="width:8px">A</i><i class="c" style="width:3px">l</i><i class="c" style="width:6px">s</i><i class="c" style="width:6px">e</i><i class="c" style="width:6px">a</i><i class="c" style="width:3px">&nbsp;</i><i class="c" style="width:8px">D</i><i class="c" style="width:6px">a</i><i class="c" style="width:4px">t</i><i class="c" style="width:6px">a</i></span></div>
<div class="a t" style="left:127px;top:679px;width:33px;height:13px;font-size:10px;color:#000;line-height:13px;filter:url(#c1);"><span><i class="c" style="width:6px">S</i><i class="c" style="width:5px">h</i><i class="c" style="width:5px">e</i><i class="c" style="width:5px">e</i><i class="c" style="width:3px">t</i><i class="c" style="width:5px">2</i></span></div>
<div class="a t" style="left:172px;top:679px;width:33px;height:13px;font-size:10px;color:#000;line-height:13px;filter:url(#c1);"><span><i class="c" style="width:6px">S</i><i class="c" style="width:5px">h</i><i class="c" style="width:5px">e</i><i class="c" style="width:5px">e</i><i class="c" style="width:3px">t</i><i class="c" style="width:5px">3</i></span></div>
<svg class="a" style="left:3px;top:683px" width="6" height="7" shape-rendering="crispEdges"><rect x="0" y="0" width="1" height="1" fill="#000000"/><rect x="5" y="0" width="1" height="1" fill="#000000"/><rect x="0" y="1" width="1" height="1" fill="#000000"/><rect x="4" y="1" width="2" height="1" fill="#000000"/><rect x="0" y="2" width="1" height="1" fill="#000000"/><rect x="3" y="2" width="3" height="1" fill="#000000"/><rect x="0" y="3" width="1" height="1" fill="#000000"/><rect x="2" y="3" width="4" height="1" fill="#000000"/><rect x="0" y="4" width="1" height="1" fill="#000000"/><rect x="3" y="4" width="3" height="1" fill="#000000"/><rect x="0" y="5" width="1" height="1" fill="#000000"/><rect x="4" y="5" width="2" height="1" fill="#000000"/><rect x="0" y="6" width="1" height="1" fill="#000000"/><rect x="5" y="6" width="1" height="1" fill="#000000"/></svg>
<svg class="a" style="left:17px;top:683px" width="4" height="7" shape-rendering="crispEdges"><rect x="3" y="0" width="1" height="1" fill="#000000"/><rect x="2" y="1" width="2" height="1" fill="#000000"/><rect x="1" y="2" width="3" height="1" fill="#000000"/><rect x="0" y="3" width="4" height="1" fill="#000000"/><rect x="1" y="4" width="3" height="1" fill="#000000"/><rect x="2" y="5" width="2" height="1" fill="#000000"/><rect x="3" y="6" width="1" height="1" fill="#000000"/></svg>
<svg class="a" style="left:29px;top:683px" width="4" height="7" shape-rendering="crispEdges"><rect x="0" y="0" width="1" height="1" fill="#000000"/><rect x="0" y="1" width="2" height="1" fill="#000000"/><rect x="0" y="2" width="3" height="1" fill="#000000"/><rect x="0" y="3" width="4" height="1" fill="#000000"/><rect x="0" y="4" width="3" height="1" fill="#000000"/><rect x="0" y="5" width="2" height="1" fill="#000000"/><rect x="0" y="6" width="1" height="1" fill="#000000"/></svg>
<svg class="a" style="left:41px;top:683px" width="6" height="7" shape-rendering="crispEdges"><rect x="0" y="0" width="1" height="1" fill="#000000"/><rect x="5" y="0" width="1" height="1" fill="#000000"/><rect x="0" y="1" width="2" height="1" fill="#000000"/><rect x="5" y="1" width="1" height="1" fill="#000000"/><rect x="0" y="2" width="3" height="1" fill="#000000"/><rect x="5" y="2" width="1" height="1" fill="#000000"/><rect x="0" y="3" width="4" height="1" fill="#000000"/><rect x="5" y="3" width="1" height="1" fill="#000000"/><rect x="0" y="4" width="3" height="1" fill="#000000"/><rect x="5" y="4" width="1" height="1" fill="#000000"/><rect x="0" y="5" width="2" height="1" fill="#000000"/><rect x="5" y="5" width="1" height="1" fill="#000000"/><rect x="0" y="6" width="1" height="1" fill="#000000"/><rect x="5" y="6" width="1" height="1" fill="#000000"/></svg>
<div class="a b" style="left:608px;top:680px;width:4px;height:12px;background:#8499b2;border-style:solid;border-width:1px;border-color:#c8d4e1 #50637c #50637c #c8d4e1"></div>
<div class="a" style="left:612px;top:680px;width:1px;height:12px;background:#000"></div>
<div class="a b" style="left:613px;top:680px;width:12px;height:12px;background:#8499b2;border-style:solid;border-width:1px;border-color:#c8d4e1 #50637c #50637c #c8d4e1"></div>
<svg class="a" style="left:617px;top:683px" width="3" height="5" shape-rendering="crispEdges"><rect x="2" y="0" width="1" height="1" fill="#000000"/><rect x="1" y="1" width="2" height="1" fill="#000000"/><rect x="0" y="2" width="3" height="1" fill="#000000"/><rect x="1" y="3" width="2" height="1" fill="#000000"/><rect x="2" y="4" width="1" height="1" fill="#000000"/></svg>
<div class="a" style="left:625px;top:680px;width:1px;height:12px;background:#000"></div>
<div class="a b" style="left:626px;top:680px;width:337px;height:12px;background:#8499b2;border-style:solid;border-width:1px;border-color:#c8d4e1 #50637c #50637c #c8d4e1"></div>
<div class="a" style="left:963px;top:680px;width:1px;height:12px;background:#000"></div>
<div class="a" style="left:964px;top:680px;width:34px;height:12px;background:#c0ccd9"></div>
<div class="a" style="left:964px;top:680px;width:34px;height:1px;background:#50637c"></div>
<div class="a b" style="left:998px;top:680px;width:12px;height:12px;background:#8499b2;border-style:solid;border-width:1px;border-color:#c8d4e1 #50637c #50637c #c8d4e1"></div>
<svg class="a" style="left:1003px;top:683px" width="3" height="5" shape-rendering="crispEdges"><rect x="0" y="0" width="1" height="1" fill="#000000"/><rect x="0" y="1" width="2" height="1" fill="#000000"/><rect x="0" y="2" width="3" height="1" fill="#000000"/><rect x="0" y="3" width="2" height="1" fill="#000000"/><rect x="0" y="4" width="1" height="1" fill="#000000"/></svg>
<div class="a" style="left:1010px;top:680px;width:12px;height:12px;background:#8499b2"></div>
<div class="a" style="left:1010px;top:680px;width:12px;height:1px;background:#000"></div>
<div class="a" style="left:1010px;top:680px;width:1px;height:12px;background:#000"></div>
<div class="a" style="left:0px;top:692px;width:1024px;height:1px;background:#50637c"></div>
<div class="a" style="left:0px;top:693px;width:1024px;height:1px;background:#c8d4e1"></div>
<div class="a b" style="left:0px;top:695px;width:576px;height:26px;background:#8499b2;border-style:solid;border-width:1px;border-color:#c8d4e1 #50637c #50637c #c8d4e1"></div>
<div class="a" style="left:2px;top:698px;width:3px;height:17px;border-style:solid;border-width:1px 1px 1px 1px;border-color:#c8d4e1 #50637c #50637c #c8d4e1;width:1px;"></div>
<div class="a t" style="left:11px;top:701px;width:30px;height:14px;font-size:11px;color:#000;line-height:14px;filter:url(#c1);"><span><i class="c" style="width:8px">D</i><i class="c u" style="width:4px">r</i><i class="c" style="width:6px">a</i><i class="c" style="width:8px">w</i></span></div>
<svg class="a" style="left:41px;top:707px" width="5" height="3" viewBox="0 0 5 3" shape-rendering="crispEdges"><path d="M0 0h5v1h-5zM1 1h3v1h-3zM2 2h1v1h-1z" fill="#000"/></svg>
<div class="a t" style="left:107px;top:701px;width:63px;height:14px;font-size:11px;color:#000;line-height:14px;filter:url(#c1);"><span><i class="c" style="width:7px">A</i><i class="c u" style="width:6px">u</i><i class="c" style="width:3px">t</i><i class="c" style="width:6px">o</i><i class="c" style="width:7px">S</i><i class="c" style="width:6px">h</i><i class="c" style="width:6px">a</i><i class="c" style="width:6px">p</i><i class="c" style="width:6px">e</i><i class="c" style="width:6px">s</i></span></div>
<svg class="a" style="left:170px;top:707px" width="5" height="3" viewBox="0 0 5 3" shape-rendering="crispEdges"><path d="M0 0h5v1h-5zM1 1h3v1h-3zM2 2h1v1h-1z" fill="#000"/></svg>
<div class="a" style="left:99px;top:698px;width:1px;height:20px;background:#50637c"></div>
<div class="a" style="left:100px;top:698px;width:1px;height:20px;background:#c8d4e1"></div>
<div class="a" style="left:343px;top:698px;width:1px;height:20px;background:#50637c"></div>
<div class="a" style="left:344px;top:698px;width:1px;height:20px;background:#c8d4e1"></div>
<div class="a" style="left:0px;top:720px;width:1024px;height:1px;background:#50637c"></div>
<div class="a" style="left:0px;top:721px;width:1024px;height:1px;background:#c8d4e1"></div>
<div class="a t" style="left:6px;top:724px;width:40px;height:16px;font-size:12px;color:#000;line-height:16px;filter:url(#c1);"><span><i class="c" style="width:9px">R</i><i class="c" style="width:7px">e</i><i class="c" style="width:7px">a</i><i class="c" style="width:7px">d</i><i class="c" style="width:6px">y</i></span></div>
<div class="a" style="left:654px;top:722px;width:1px;height:18px;background:#50637c"></div>
<div class="a" style="left:655px;top:722px;width:1px;height:18px;background:#c8d4e1"></div>
<div class="a b" style="left:662px;top:724px;width:34px;height:15px;border-style:solid;border-width:1px;border-color:#50637c #c8d4e1 #c8d4e1 #50637c"></div>
<div class="a b" style="left:698px;top:724px;width:130px;height:15px;border-style:solid;border-width:1px;border-color:#50637c #c8d4e1 #c8d4e1 #50637c"></div>
<div class="a b" style="left:830px;top:724px;width:28px;height:15px;border-style:solid;border-width:1px;border-color:#50637c #c8d4e1 #c8d4e1 #50637c"></div>
<div class="a b" style="left:860px;top:724px;width:35px;height:15px;border-style:solid;border-width:1px;border-color:#50637c #c8d4e1 #c8d4e1 #50637c"></div>
<div class="a b" style="left:897px;top:724px;width:30px;height:15px;border-style:solid;border-width:1px;border-color:#50637c #c8d4e1 #c8d4e1 #50637c"></div>
<div class="a b" style="left:929px;top:724px;width:34px;height:15px;border-style:solid;border-width:1px;border-color:#50637c #c8d4e1 #c8d4e1 #50637c"></div>
<div class="a b" style="left:965px;top:724px;width:29px;height:15px;border-style:solid;border-width:1px;border-color:#50637c #c8d4e1 #c8d4e1 #50637c"></div>
<div class="a b" style="left:996px;top:724px;width:23px;height:15px;border-style:solid;border-width:1px;border-color:#50637c #c8d4e1 #c8d4e1 #50637c"></div>
<div class="a t" style="left:898px;top:725px;width:32px;height:15px;font-size:12px;color:#000;line-height:15px;filter:url(#c1);"><span><i class="c" style="width:9px">N</i><i class="c" style="width:9px">U</i><i class="c" style="width:10px">M</i></span></div>
<div class="a" style="left:0px;top:741px;width:1024px;height:1px;background:#c8d4e1"></div>
<svg class="a" style="left:2px;top:1px" width="16" height="16" shape-rendering="crispEdges"><rect x="0" y="0" width="1" height="1" fill="#008000"/><rect x="2" y="0" width="1" height="1" fill="#008000"/><rect x="4" y="0" width="1" height="1" fill="#008000"/><rect x="6" y="0" width="1" height="1" fill="#008000"/><rect x="8" y="0" width="1" height="1" fill="#008000"/><rect x="10" y="0" width="1" height="1" fill="#008000"/><rect x="12" y="0" width="1" height="1" fill="#008000"/><rect x="14" y="0" width="1" height="1" fill="#008000"/><rect x="1" y="1" width="1" height="1" fill="#008000"/><rect x="3" y="1" width="1" height="1" fill="#008000"/><rect x="5" y="1" width="1" height="1" fill="#008000"/><rect x="7" y="1" width="1" height="1" fill="#008000"/><rect x="9" y="1" width="1" height="1" fill="#008000"/><rect x="11" y="1" width="1" height="1" fill="#008000"/><rect x="13" y="1" width="1" height="1" fill="#008000"/><rect x="15" y="1" width="1" height="1" fill="#008000"/><rect x="0" y="2" width="1" height="1" fill="#008000"/><rect x="2" y="2" width="12" height="1" fill="#ffffff"/><rect x="14" y="2" width="1" height="1" fill="#008000"/><rect x="1" y="3" width="1" height="1" fill="#008000"/><rect x="2" y="3" width="1" height="1" fill="#ffffff"/><rect x="3" y="3" width="1" height="1" fill="#008000"/><rect x="4" y="3" width="1" height="1" fill="#a07898"/><rect x="5" y="3" width="1" height="1" fill="#008000"/><rect x="6" y="3" width="4" height="1" fill="#ffffff"/><rect x="10" y="3" width="1" height="1" fill="#a07898"/><rect x="11" y="3" width="1" height="1" fill="#008000"/><rect x="12" y="3" width="1" height="1" fill="#a07898"/><rect x="13" y="3" width="1" height="1" fill="#ffffff"/><rect x="15" y="3" width="1" height="1" fill="#008000"/><rect x="0" y="4" width="1" height="1" fill="#008000"/><rect x="2" y="4" width="1" height="1" fill="#ffffff"/><rect x="3" y="4" width="1" height="1" fill="#a07898"/><rect x="4" y="4" width="1" height="1" fill="#ffffff"/><rect x="5" y="4" width="1" height="1" fill="#a07898"/><rect x="6" y="4" width="1" height="1" fill="#008000"/><rect x="7" y="4" width="2" height="1" fill="#ffffff"/><rect x="9" y="4" width="1" height="1" fill="#a07898"/><rect x="10" y="4" width="1" height="1" fill="#008000"/><rect x="11" y="4" width="1" height="1" fill="#a07898"/><rect x="12" y="4" width="1" height="1" fill="#008000"/><rect x="13" y="4" width="1" height="1" fill="#ffffff"/><rect x="14" y="4" width="1" height="1" fill="#008000"/><rect x="1" y="5" width="1" height="1" fill="#008000"/><rect x="2" y="5" width="1" height="1" fill="#ffffff"/><rect x="3" y="5" width="1" height="1" fill="#008000"/><rect x="4" y="5" width="1" height="1" fill="#a07898"/><rect x="5" y="5" width="1" height="1" fill="#ffffff"/><rect x="6" y="5" width="1" height="1" fill="#a07898"/><rect x="7" y="5" width="1" height="1" fill="#008000"/><rect x="8" y="5" width="1" height="1" fill="#a07898"/><rect x="9" y="5" width="1" height="1" fill="#008000"/><rect x="10" y="5" width="1" height="1" fill="#a07898"/><rect x="11" y="5" width="1" height="1" fill="#008000"/><rect x="12" y="5" width="1" height="1" fill="#a07898"/><rect x="13" y="5" width="1" height="1" fill="#ffffff"/><rect x="15" y="5" width="1" height="1" fill="#008000"/><rect x="0" y="6" width="1" height="1" fill="#008000"/><rect x="2" y="6" width="2" height="1" fill="#ffffff"/><rect x="4" y="6" width="1" height="1" fill="#008000"/><rect x="5" y="6" width="1" height="1" fill="#a07898"/><rect x="6" y="6" width="1" height="1" fill="#ffffff"/><rect x="7" y="6" width="1" height="1" fill="#a07898"/><rect x="8" y="6" width="1" height="1" fill="#008000"/><rect x="9" y="6" width="1" height="1" fill="#a07898"/><rect x="10" y="6" width="1" height="1" fill="#008000"/><rect x="11" y="6" width="1" height="1" fill="#a07898"/><rect x="12" y="6" width="2" height="1" fill="#ffffff"/><rect x="14" y="6" width="1" height="1" fill="#008000"/><rect x="1" y="7" width="1" height="1" fill="#008000"/><rect x="2" y="7" width="3" height="1" fill="#ffffff"/><rect x="5" y="7" width="1" height="1" fill="#008000"/><rect x="6" y="7" width="1" height="1" fill="#a07898"/><rect x="7" y="7" width="1" height="1" fill="#ffffff"/><rect x="8" y="7" width="1" height="1" fill="#a07898"/><rect x="9" y="7" width="1" height="1" fill="#008000"/><rect x="10" y="7" width="1" height="1" fill="#a07898"/><rect x="11" y="7" width="3" height="1" fill="#ffffff"/><rect x="15" y="7" width="1" height="1" fill="#008000"/><rect x="0" y="8" width="1" height="1" fill="#008000"/><rect x="2" y="8" width="3" height="1" fill="#ffffff"/><rect x="5" y="8" width="1" height="1" fill="#a07898"/><rect x="6" y="8" width="1" height="1" fill="#008000"/><rect x="7" y="8" width="1" height="1" fill="#a07898"/><rect x="8" y="8" width="1" height="1" fill="#ffffff"/><rect x="9" y="8" width="1" height="1" fill="#a07898"/><rect x="10" y="8" width="1" height="1" fill="#008000"/><rect x="11" y="8" width="3" height="1" fill="#ffffff"/><rect x="14" y="8" width="1" height="1" fill="#008000"/><rect x="1" y="9" width="1" height="1" fill="#008000"/><rect x="2" y="9" width="2" height="1" fill="#ffffff"/><rect x="4" y="9" width="1" height="1" fill="#a07898"/><rect x="5" y="9" width="1" height="1" fill="#008000"/><rect x="6" y="9" width="1" height="1" fill="#a07898"/><rect x="7" y="9" width="1" height="1" fill="#008000"/><rect x="8" y="9" width="1" height="1" fill="#a07898"/><rect x="9" y="9" width="1" height="1" fill="#ffffff"/><rect x="10" y="9" width="1" height="1" fill="#a07898"/><rect x="11" y="9" width="1" height="1" fill="#008000"/><rect x="12" y="9" width="2" height="1" fill="#ffffff"/><rect x="15" y="9" width="1" height="1" fill="#008000"/><rect x="0" y="10" width="1" height="1" fill="#008000"/><rect x="2" y="10" width="1" height="1" fill="#ffffff"/><rect x="3" y="10" width="1" height="1" fill="#a07898"/><rect x="4" y="10" width="1" height="1" fill="#008000"/><rect x="5" y="10" width="1" height="1" fill="#a07898"/><rect x="6" y="10" width="1" height="1" fill="#008000"/><rect x="7" y="10" width="1" height="1" fill="#a07898"/><rect x="8" y="10" width="1" height="1" fill="#008000"/><rect x="9" y="10" width="1" height="1" fill="#a07898"/><rect x="10" y="10" width="1" height="1" fill="#ffffff"/><rect x="11" y="10" width="1" height="1" fill="#a07898"/><rect x="12" y="10" width="1" height="1" fill="#008000"/><rect x="13" y="10" width="1" height="1" fill="#ffffff"/><rect x="14" y="10" width="1" height="1" fill="#008000"/><rect x="1" y="11" width="1" height="1" fill="#008000"/><rect x="2" y="11" width="1" height="1" fill="#ffffff"/><rect x="3" y="11" width="1" height="1" fill="#008000"/><rect x="4" y="11" width="1" height="1" fill="#a07898"/><rect x="5" y="11" width="1" height="1" fill="#008000"/><rect x="6" y="11" width="1" height="1" fill="#a07898"/><rect x="7" y="11" width="2" height="1" fill="#ffffff"/><rect x="9" y="11" width="1" height="1" fill="#008000"/><rect x="10" y="11" width="1" height="1" fill="#a07898"/><rect x="11" y="11" width="1" height="1" fill="#ffffff"/><rect x="12" y="11" width="1" height="1" fill="#a07898"/><rect x="13" y="11" width="1" height="1" fill="#ffffff"/><rect x="15" y="11" width="1" height="1" fill="#008000"/><rect x="0" y="12" width="1" height="1" fill="#008000"/><rect x="2" y="12" width="1" height="1" fill="#ffffff"/><rect x="3" y="12" width="1" height="1" fill="#a07898"/><rect x="4" y="12" width="1" height="1" fill="#008000"/><rect x="5" y="12" width="1" height="1" fill="#a07898"/><rect x="6" y="12" width="4" height="1" fill="#ffffff"/><rect x="10" y="12" width="1" height="1" fill="#008000"/><rect x="11" y="12" width="1" height="1" fill="#a07898"/><rect x="12" y="12" width="1" height="1" fill="#008000"/><rect x="13" y="12" width="1" height="1" fill="#a07898"/><rect x="14" y="12" width="1" height="1" fill="#008000"/><rect x="1" y="13" width="1" height="1" fill="#008000"/><rect x="2" y="13" width="12" height="1" fill="#ffffff"/><rect x="15" y="13" width="1" height="1" fill="#008000"/><rect x="0" y="14" width="1" height="1" fill="#008000"/><rect x="2" y="14" width="1" height="1" fill="#008000"/><rect x="4" y="14" width="1" height="1" fill="#008000"/><rect x="6" y="14" width="1" height="1" fill="#008000"/><rect x="8" y="14" width="1" height="1" fill="#008000"/><rect x="10" y="14" width="1" height="1" fill="#008000"/><rect x="12" y="14" width="1" height="1" fill="#008000"/><rect x="14" y="14" width="1" height="1" fill="#008000"/><rect x="1" y="15" width="1" height="1" fill="#008000"/><rect x="3" y="15" width="1" height="1" fill="#008000"/><rect x="5" y="15" width="1" height="1" fill="#008000"/><rect x="7" y="15" width="1" height="1" fill="#008000"/><rect x="9" y="15" width="1" height="1" fill="#008000"/><rect x="11" y="15" width="1" height="1" fill="#008000"/><rect x="13" y="15" width="1" height="1" fill="#008000"/><rect x="15" y="15" width="1" height="1" fill="#008000"/></svg>
<svg class="a" style="left:8px;top:22px" width="16" height="16" shape-rendering="crispEdges"><rect x="3" y="0" width="1" height="1" fill="#808080"/><rect x="4" y="0" width="9" height="1" fill="#ffffff"/><rect x="13" y="0" width="1" height="1" fill="#000000"/><rect x="3" y="1" width="1" height="1" fill="#808080"/><rect x="4" y="1" width="10" height="1" fill="#ffffff"/><rect x="14" y="1" width="1" height="1" fill="#000000"/><rect x="0" y="2" width="10" height="1" fill="#008000"/><rect x="10" y="2" width="5" height="1" fill="#ffffff"/><rect x="15" y="2" width="1" height="1" fill="#000000"/><rect x="0" y="3" width="1" height="1" fill="#008000"/><rect x="1" y="3" width="8" height="1" fill="#ffffff"/><rect x="9" y="3" width="1" height="1" fill="#008000"/><rect x="10" y="3" width="5" height="1" fill="#ffffff"/><rect x="15" y="3" width="1" height="1" fill="#000000"/><rect x="0" y="4" width="1" height="1" fill="#008000"/><rect x="1" y="4" width="1" height="1" fill="#ffffff"/><rect x="2" y="4" width="2" height="1" fill="#008000"/><rect x="4" y="4" width="2" height="1" fill="#ffffff"/><rect x="6" y="4" width="2" height="1" fill="#008000"/><rect x="8" y="4" width="1" height="1" fill="#ffffff"/><rect x="9" y="4" width="1" height="1" fill="#008000"/><rect x="10" y="4" width="5" height="1" fill="#ffffff"/><rect x="15" y="4" width="1" height="1" fill="#000000"/><rect x="0" y="5" width="1" height="1" fill="#008000"/><rect x="1" y="5" width="2" height="1" fill="#ffffff"/><rect x="3" y="5" width="4" height="1" fill="#008000"/><rect x="7" y="5" width="2" height="1" fill="#ffffff"/><rect x="9" y="5" width="1" height="1" fill="#008000"/><rect x="10" y="5" width="3" height="1" fill="#c0c0c0"/><rect x="13" y="5" width="2" height="1" fill="#ffffff"/><rect x="15" y="5" width="1" height="1" fill="#000000"/><rect x="0" y="6" width="1" height="1" fill="#008000"/><rect x="1" y="6" width="3" height="1" fill="#ffffff"/><rect x="4" y="6" width="2" height="1" fill="#008000"/><rect x="6" y="6" width="3" height="1" fill="#ffffff"/><rect x="9" y="6" width="1" height="1" fill="#008000"/><rect x="10" y="6" width="5" height="1" fill="#ffffff"/><rect x="15" y="6" width="1" height="1" fill="#000000"/><rect x="0" y="7" width="1" height="1" fill="#008000"/><rect x="1" y="7" width="2" height="1" fill="#ffffff"/><rect x="3" y="7" width="2" height="1" fill="#008000"/><rect x="5" y="7" width="1" height="1" fill="#ffffff"/><rect x="6" y="7" width="1" height="1" fill="#008000"/><rect x="7" y="7" width="2" height="1" fill="#ffffff"/><rect x="9" y="7" width="1" height="1" fill="#008000"/><rect x="10" y="7" width="3" height="1" fill="#c0c0c0"/><rect x="13" y="7" width="2" height="1" fill="#ffffff"/><rect x="15" y="7" width="1" height="1" fill="#000000"/><rect x="0" y="8" width="1" height="1" fill="#008000"/><rect x="1" y="8" width="1" height="1" fill="#ffffff"/><rect x="2" y="8" width="2" height="1" fill="#008000"/><rect x="4" y="8" width="3" height="1" fill="#ffffff"/><rect x="7" y="8" width="1" height="1" fill="#008000"/><rect x="8" y="8" width="1" height="1" fill="#ffffff"/><rect x="9" y="8" width="1" height="1" fill="#008000"/><rect x="10" y="8" width="5" height="1" fill="#ffffff"/><rect x="15" y="8" width="1" height="1" fill="#000000"/><rect x="0" y="9" width="1" height="1" fill="#008000"/><rect x="1" y="9" width="1" height="1" fill="#ffffff"/><rect x="2" y="9" width="7" height="1" fill="#008000"/><rect x="9" y="9" width="6" height="1" fill="#ffffff"/><rect x="15" y="9" width="1" height="1" fill="#000000"/><rect x="0" y="10" width="1" height="1" fill="#008000"/><rect x="1" y="10" width="8" height="1" fill="#ffffff"/><rect x="9" y="10" width="1" height="1" fill="#008000"/><rect x="10" y="10" width="1" height="1" fill="#ffffff"/><rect x="11" y="10" width="2" height="1" fill="#c0c0c0"/><rect x="13" y="10" width="2" height="1" fill="#ffffff"/><rect x="15" y="10" width="1" height="1" fill="#000000"/><rect x="0" y="11" width="10" height="1" fill="#008000"/><rect x="10" y="11" width="2" height="1" fill="#ffffff"/><rect x="12" y="11" width="1" height="1" fill="#c0c0c0"/><rect x="13" y="11" width="2" height="1" fill="#ffffff"/><rect x="15" y="11" width="1" height="1" fill="#000000"/><rect x="3" y="12" width="1" height="1" fill="#808080"/><rect x="4" y="12" width="11" height="1" fill="#ffffff"/><rect x="15" y="12" width="1" height="1" fill="#000000"/><rect x="3" y="13" width="1" height="1" fill="#808080"/><rect x="4" y="13" width="11" height="1" fill="#ffffff"/><rect x="15" y="13" width="1" height="1" fill="#000000"/><rect x="3" y="14" width="1" height="1" fill="#808080"/><rect x="4" y="14" width="11" height="1" fill="#ffffff"/><rect x="15" y="14" width="1" height="1" fill="#000000"/><rect x="3" y="15" width="13" height="1" fill="#000000"/></svg>
<svg class="a" style="left:12px;top:48px" width="11" height="13" shape-rendering="crispEdges"><rect x="0" y="0" width="8" height="1" fill="#000000"/><rect x="0" y="1" width="1" height="1" fill="#000000"/><rect x="1" y="1" width="6" height="1" fill="#ffffff"/><rect x="7" y="1" width="2" height="1" fill="#000000"/><rect x="0" y="2" width="1" height="1" fill="#000000"/><rect x="1" y="2" width="6" height="1" fill="#ffffff"/><rect x="7" y="2" width="1" height="1" fill="#000000"/><rect x="8" y="2" width="1" height="1" fill="#ffffff"/><rect x="9" y="2" width="1" height="1" fill="#000000"/><rect x="0" y="3" width="1" height="1" fill="#000000"/><rect x="1" y="3" width="6" height="1" fill="#ffffff"/><rect x="7" y="3" width="4" height="1" fill="#000000"/><rect x="0" y="4" width="1" height="1" fill="#000000"/><rect x="1" y="4" width="9" height="1" fill="#ffffff"/><rect x="10" y="4" width="1" height="1" fill="#000000"/><rect x="0" y="5" width="1" height="1" fill="#000000"/><rect x="1" y="5" width="9" height="1" fill="#ffffff"/><rect x="10" y="5" width="1" height="1" fill="#000000"/><rect x="0" y="6" width="1" height="1" fill="#000000"/><rect x="1" y="6" width="9" height="1" fill="#ffffff"/><rect x="10" y="6" width="1" height="1" fill="#000000"/><rect x="0" y="7" width="1" height="1" fill="#000000"/><rect x="1" y="7" width="9" height="1" fill="#ffffff"/><rect x="10" y="7" width="1" height="1" fill="#000000"/><rect x="0" y="8" width="1" height="1" fill="#000000"/><rect x="1" y="8" width="9" height="1" fill="#ffffff"/><rect x="10" y="8" width="1" height="1" fill="#000000"/><rect x="0" y="9" width="1" height="1" fill="#000000"/><rect x="1" y="9" width="9" height="1" fill="#ffffff"/><rect x="10" y="9" width="1" height="1" fill="#000000"/><rect x="0" y="10" width="1" height="1" fill="#000000"/><rect x="1" y="10" width="9" height="1" fill="#ffffff"/><rect x="10" y="10" width="1" height="1" fill="#000000"/><rect x="0" y="11" width="1" height="1" fill="#000000"/><rect x="1" y="11" width="9" height="1" fill="#ffffff"/><rect x="10" y="11" width="1" height="1" fill="#000000"/><rect x="0" y="12" width="11" height="1" fill="#000000"/></svg><svg class="a" style="left:33px;top:47px" width="16" height="14" shape-rendering="crispEdges"><rect x="10" y="0" width="3" height="1" fill="#000000"/><rect x="9" y="1" width="1" height="1" fill="#000000"/><rect x="13" y="1" width="1" height="1" fill="#000000"/><rect x="15" y="1" width="1" height="1" fill="#000000"/><rect x="13" y="2" width="2" height="1" fill="#000000"/><rect x="12" y="3" width="3" height="1" fill="#000000"/><rect x="1" y="4" width="4" height="1" fill="#000000"/><rect x="0" y="5" width="1" height="1" fill="#000000"/><rect x="1" y="5" width="1" height="1" fill="#ffff00"/><rect x="2" y="5" width="1" height="1" fill="#ffffff"/><rect x="3" y="5" width="1" height="1" fill="#ffff00"/><rect x="4" y="5" width="1" height="1" fill="#ffffff"/><rect x="5" y="5" width="1" height="1" fill="#000000"/><rect x="0" y="6" width="1" height="1" fill="#000000"/><rect x="1" y="6" width="1" height="1" fill="#ffffff"/><rect x="2" y="6" width="1" height="1" fill="#ffff00"/><rect x="3" y="6" width="1" height="1" fill="#ffffff"/><rect x="4" y="6" width="1" height="1" fill="#ffff00"/><rect x="5" y="6" width="6" height="1" fill="#000000"/><rect x="0" y="7" width="1" height="1" fill="#000000"/><rect x="1" y="7" width="1" height="1" fill="#ffff00"/><rect x="2" y="7" width="1" height="1" fill="#ffffff"/><rect x="3" y="7" width="1" height="1" fill="#ffff00"/><rect x="4" y="7" width="1" height="1" fill="#ffffff"/><rect x="5" y="7" width="1" height="1" fill="#ffff00"/><rect x="6" y="7" width="1" height="1" fill="#ffffff"/><rect x="7" y="7" width="1" height="1" fill="#ffff00"/><rect x="8" y="7" width="1" height="1" fill="#ffffff"/><rect x="9" y="7" width="1" height="1" fill="#ffff00"/><rect x="10" y="7" width="1" height="1" fill="#000000"/><rect x="0" y="8" width="1" height="1" fill="#000000"/><rect x="1" y="8" width="1" height="1" fill="#ffffff"/><rect x="2" y="8" width="1" height="1" fill="#ffff00"/><rect x="3" y="8" width="1" height="1" fill="#ffffff"/><rect x="4" y="8" width="1" height="1" fill="#ffff00"/><rect x="5" y="8" width="11" height="1" fill="#000000"/><rect x="0" y="9" width="1" height="1" fill="#000000"/><rect x="1" y="9" width="1" height="1" fill="#ffff00"/><rect x="2" y="9" width="1" height="1" fill="#ffffff"/><rect x="3" y="9" width="1" height="1" fill="#ffff00"/><rect x="4" y="9" width="1" height="1" fill="#000000"/><rect x="5" y="9" width="9" height="1" fill="#808000"/><rect x="14" y="9" width="1" height="1" fill="#000000"/><rect x="0" y="10" width="1" height="1" fill="#000000"/><rect x="1" y="10" width="1" height="1" fill="#ffffff"/><rect x="2" y="10" width="1" height="1" fill="#ffff00"/><rect x="3" y="10" width="1" height="1" fill="#000000"/><rect x="4" y="10" width="9" height="1" fill="#808000"/><rect x="13" y="10" width="1" height="1" fill="#000000"/><rect x="0" y="11" width="1" height="1" fill="#000000"/><rect x="1" y="11" width="1" height="1" fill="#ffff00"/><rect x="2" y="11" width="1" height="1" fill="#000000"/><rect x="3" y="11" width="9" height="1" fill="#808000"/><rect x="12" y="11" width="1" height="1" fill="#000000"/><rect x="0" y="12" width="2" height="1" fill="#000000"/><rect x="2" y="12" width="9" height="1" fill="#808000"/><rect x="11" y="12" width="1" height="1" fill="#000000"/><rect x="0" y="13" width="11" height="1" fill="#000000"/></svg><svg class="a" style="left:57px;top:48px" width="14" height="14" shape-rendering="crispEdges"><rect x="0" y="0" width="14" height="1" fill="#000000"/><rect x="0" y="1" width="1" height="1" fill="#000000"/><rect x="1" y="1" width="1" height="1" fill="#808000"/><rect x="2" y="1" width="1" height="1" fill="#000000"/><rect x="3" y="1" width="8" height="1" fill="#c0c0c0"/><rect x="11" y="1" width="1" height="1" fill="#000000"/><rect x="12" y="1" width="1" height="1" fill="#ffffff"/><rect x="13" y="1" width="1" height="1" fill="#000000"/><rect x="0" y="2" width="1" height="1" fill="#000000"/><rect x="1" y="2" width="1" height="1" fill="#808000"/><rect x="2" y="2" width="1" height="1" fill="#000000"/><rect x="3" y="2" width="8" height="1" fill="#c0c0c0"/><rect x="11" y="2" width="1" height="1" fill="#000000"/><rect x="12" y="2" width="1" height="1" fill="#808000"/><rect x="13" y="2" width="1" height="1" fill="#000000"/><rect x="0" y="3" width="1" height="1" fill="#000000"/><rect x="1" y="3" width="1" height="1" fill="#808000"/><rect x="2" y="3" width="1" height="1" fill="#000000"/><rect x="3" y="3" width="8" height="1" fill="#c0c0c0"/><rect x="11" y="3" width="1" height="1" fill="#000000"/><rect x="12" y="3" width="1" height="1" fill="#808000"/><rect x="13" y="3" width="1" height="1" fill="#000000"/><rect x="0" y="4" width="1" height="1" fill="#000000"/><rect x="1" y="4" width="1" height="1" fill="#808000"/><rect x="2" y="4" width="1" height="1" fill="#000000"/><rect x="3" y="4" width="8" height="1" fill="#c0c0c0"/><rect x="11" y="4" width="1" height="1" fill="#000000"/><rect x="12" y="4" width="1" height="1" fill="#808000"/><rect x="13" y="4" width="1" height="1" fill="#000000"/><rect x="0" y="5" width="1" height="1" fill="#000000"/><rect x="1" y="5" width="1" height="1" fill="#808000"/><rect x="2" y="5" width="1" height="1" fill="#000000"/><rect x="3" y="5" width="8" height="1" fill="#c0c0c0"/><rect x="11" y="5" width="1" height="1" fill="#000000"/><rect x="12" y="5" width="1" height="1" fill="#808000"/><rect x="13" y="5" width="1" height="1" fill="#000000"/><rect x="0" y="6" width="1" height="1" fill="#000000"/><rect x="1" y="6" width="1" height="1" fill="#808000"/><rect x="2" y="6" width="10" height="1" fill="#000000"/><rect x="12" y="6" width="1" height="1" fill="#808000"/><rect x="13" y="6" width="1" height="1" fill="#000000"/><rect x="0" y="7" width="1" height="1" fill="#000000"/><rect x="1" y="7" width="12" height="1" fill="#808000"/><rect x="13" y="7" width="1" height="1" fill="#000000"/><rect x="0" y="8" width="1" height="1" fill="#000000"/><rect x="1" y="8" width="2" height="1" fill="#808000"/><rect x="3" y="8" width="8" height="1" fill="#000000"/><rect x="11" y="8" width="2" height="1" fill="#808000"/><rect x="13" y="8" width="1" height="1" fill="#000000"/><rect x="0" y="9" width="1" height="1" fill="#000000"/><rect x="1" y="9" width="2" height="1" fill="#808000"/><rect x="3" y="9" width="6" height="1" fill="#000000"/><rect x="9" y="9" width="2" height="1" fill="#ffffff"/><rect x="11" y="9" width="1" height="1" fill="#000000"/><rect x="12" y="9" width="1" height="1" fill="#808000"/><rect x="13" y="9" width="1" height="1" fill="#000000"/><rect x="0" y="10" width="1" height="1" fill="#000000"/><rect x="1" y="10" width="2" height="1" fill="#808000"/><rect x="3" y="10" width="6" height="1" fill="#000000"/><rect x="9" y="10" width="2" height="1" fill="#ffffff"/><rect x="11" y="10" width="1" height="1" fill="#000000"/><rect x="12" y="10" width="1" height="1" fill="#808000"/><rect x="13" y="10" width="1" height="1" fill="#000000"/><rect x="0" y="11" width="1" height="1" fill="#000000"/><rect x="1" y="11" width="2" height="1" fill="#808000"/><rect x="3" y="11" width="6" height="1" fill="#000000"/><rect x="9" y="11" width="2" height="1" fill="#ffffff"/><rect x="11" y="11" width="1" height="1" fill="#000000"/><rect x="12" y="11" width="1" height="1" fill="#808000"/><rect x="13" y="11" width="1" height="1" fill="#000000"/><rect x="0" y="12" width="1" height="1" fill="#000000"/><rect x="1" y="12" width="2" height="1" fill="#808000"/><rect x="3" y="12" width="9" height="1" fill="#000000"/><rect x="12" y="12" width="1" height="1" fill="#808000"/><rect x="13" y="12" width="1" height="1" fill="#000000"/><rect x="0" y="13" width="14" height="1" fill="#000000"/></svg><svg class="a" style="left:85px;top:48px" width="16" height="14" shape-rendering="crispEdges"><rect x="4" y="0" width="9" height="1" fill="#000000"/><rect x="3" y="1" width="1" height="1" fill="#000000"/><rect x="4" y="1" width="7" height="1" fill="#ffffff"/><rect x="11" y="1" width="1" height="1" fill="#000000"/><rect x="3" y="2" width="1" height="1" fill="#000000"/><rect x="4" y="2" width="1" height="1" fill="#ffffff"/><rect x="5" y="2" width="5" height="1" fill="#000000"/><rect x="10" y="2" width="1" height="1" fill="#ffffff"/><rect x="11" y="2" width="1" height="1" fill="#000000"/><rect x="2" y="3" width="1" height="1" fill="#000000"/><rect x="3" y="3" width="7" height="1" fill="#ffffff"/><rect x="10" y="3" width="1" height="1" fill="#000000"/><rect x="2" y="4" width="1" height="1" fill="#000000"/><rect x="3" y="4" width="1" height="1" fill="#ffffff"/><rect x="4" y="4" width="5" height="1" fill="#000000"/><rect x="9" y="4" width="1" height="1" fill="#ffffff"/><rect x="10" y="4" width="1" height="1" fill="#000000"/><rect x="11" y="4" width="1" height="1" fill="#c0c0c0"/><rect x="12" y="4" width="1" height="1" fill="#000000"/><rect x="1" y="5" width="11" height="1" fill="#000000"/><rect x="12" y="5" width="1" height="1" fill="#c0c0c0"/><rect x="13" y="5" width="1" height="1" fill="#000000"/><rect x="0" y="6" width="1" height="1" fill="#000000"/><rect x="1" y="6" width="11" height="1" fill="#c0c0c0"/><rect x="12" y="6" width="1" height="1" fill="#000000"/><rect x="13" y="6" width="1" height="1" fill="#c0c0c0"/><rect x="14" y="6" width="1" height="1" fill="#000000"/><rect x="0" y="7" width="1" height="1" fill="#000000"/><rect x="1" y="7" width="12" height="1" fill="#ffffff"/><rect x="13" y="7" width="1" height="1" fill="#000000"/><rect x="14" y="7" width="1" height="1" fill="#c0c0c0"/><rect x="15" y="7" width="1" height="1" fill="#000000"/><rect x="0" y="8" width="1" height="1" fill="#000000"/><rect x="1" y="8" width="12" height="1" fill="#c0c0c0"/><rect x="13" y="8" width="1" height="1" fill="#000000"/><rect x="14" y="8" width="1" height="1" fill="#ffffff"/><rect x="15" y="8" width="1" height="1" fill="#000000"/><rect x="0" y="9" width="1" height="1" fill="#000000"/><rect x="1" y="9" width="7" height="1" fill="#c0c0c0"/><rect x="8" y="9" width="3" height="1" fill="#ffff00"/><rect x="11" y="9" width="2" height="1" fill="#c0c0c0"/><rect x="13" y="9" width="1" height="1" fill="#000000"/><rect x="14" y="9" width="1" height="1" fill="#c0c0c0"/><rect x="15" y="9" width="1" height="1" fill="#000000"/><rect x="0" y="10" width="1" height="1" fill="#000000"/><rect x="1" y="10" width="12" height="1" fill="#c0c0c0"/><rect x="13" y="10" width="2" height="1" fill="#000000"/><rect x="0" y="11" width="14" height="1" fill="#000000"/><rect x="1" y="12" width="1" height="1" fill="#000000"/><rect x="2" y="12" width="10" height="1" fill="#ffffff"/><rect x="12" y="12" width="1" height="1" fill="#000000"/><rect x="13" y="12" width="1" height="1" fill="#ffffff"/><rect x="14" y="12" width="1" height="1" fill="#000000"/><rect x="2" y="13" width="12" height="1" fill="#000000"/></svg><svg class="a" style="left:108px;top:47px" width="16" height="15" shape-rendering="crispEdges"><rect x="0" y="0" width="9" height="1" fill="#000000"/><rect x="0" y="1" width="1" height="1" fill="#000000"/><rect x="1" y="1" width="7" height="1" fill="#ffffff"/><rect x="8" y="1" width="2" height="1" fill="#000000"/><rect x="0" y="2" width="1" height="1" fill="#000000"/><rect x="1" y="2" width="7" height="1" fill="#ffffff"/><rect x="8" y="2" width="1" height="1" fill="#000000"/><rect x="9" y="2" width="1" height="1" fill="#ffffff"/><rect x="10" y="2" width="1" height="1" fill="#000000"/><rect x="0" y="3" width="1" height="1" fill="#000000"/><rect x="1" y="3" width="7" height="1" fill="#ffffff"/><rect x="8" y="3" width="4" height="1" fill="#000000"/><rect x="0" y="4" width="1" height="1" fill="#000000"/><rect x="1" y="4" width="10" height="1" fill="#ffffff"/><rect x="11" y="4" width="1" height="1" fill="#000000"/><rect x="0" y="5" width="1" height="1" fill="#000000"/><rect x="1" y="5" width="5" height="1" fill="#ffffff"/><rect x="6" y="5" width="4" height="1" fill="#000000"/><rect x="10" y="5" width="1" height="1" fill="#ffffff"/><rect x="11" y="5" width="1" height="1" fill="#000000"/><rect x="0" y="6" width="1" height="1" fill="#000000"/><rect x="1" y="6" width="4" height="1" fill="#ffffff"/><rect x="5" y="6" width="1" height="1" fill="#000000"/><rect x="6" y="6" width="1" height="1" fill="#c0c0c0"/><rect x="7" y="6" width="1" height="1" fill="#00ffff"/><rect x="8" y="6" width="2" height="1" fill="#c0c0c0"/><rect x="10" y="6" width="2" height="1" fill="#000000"/><rect x="0" y="7" width="1" height="1" fill="#000000"/><rect x="1" y="7" width="3" height="1" fill="#ffffff"/><rect x="4" y="7" width="1" height="1" fill="#000000"/><rect x="5" y="7" width="2" height="1" fill="#00ffff"/><rect x="7" y="7" width="4" height="1" fill="#c0c0c0"/><rect x="11" y="7" width="1" height="1" fill="#000000"/><rect x="0" y="8" width="1" height="1" fill="#000000"/><rect x="1" y="8" width="3" height="1" fill="#ffffff"/><rect x="4" y="8" width="1" height="1" fill="#000000"/><rect x="5" y="8" width="1" height="1" fill="#00ffff"/><rect x="6" y="8" width="3" height="1" fill="#c0c0c0"/><rect x="9" y="8" width="1" height="1" fill="#00ffff"/><rect x="10" y="8" width="1" height="1" fill="#c0c0c0"/><rect x="11" y="8" width="1" height="1" fill="#000000"/><rect x="0" y="9" width="1" height="1" fill="#000000"/><rect x="1" y="9" width="3" height="1" fill="#ffffff"/><rect x="4" y="9" width="1" height="1" fill="#000000"/><rect x="5" y="9" width="3" height="1" fill="#c0c0c0"/><rect x="8" y="9" width="2" height="1" fill="#00ffff"/><rect x="10" y="9" width="1" height="1" fill="#c0c0c0"/><rect x="11" y="9" width="1" height="1" fill="#000000"/><rect x="0" y="10" width="1" height="1" fill="#000000"/><rect x="1" y="10" width="4" height="1" fill="#ffffff"/><rect x="5" y="10" width="1" height="1" fill="#000000"/><rect x="6" y="10" width="4" height="1" fill="#c0c0c0"/><rect x="10" y="10" width="1" height="1" fill="#000000"/><rect x="0" y="11" width="1" height="1" fill="#000000"/><rect x="1" y="11" width="5" height="1" fill="#ffffff"/><rect x="6" y="11" width="6" height="1" fill="#000000"/><rect x="0" y="12" width="13" height="1" fill="#000000"/><rect x="11" y="13" width="3" height="1" fill="#000000"/><rect x="12" y="14" width="2" height="1" fill="#000000"/></svg><svg class="a" style="left:132px;top:48px" width="15" height="14" shape-rendering="crispEdges"><rect x="1" y="0" width="2" height="1" fill="#000000"/><rect x="5" y="0" width="3" height="1" fill="#000000"/><rect x="11" y="0" width="2" height="1" fill="#000000"/><rect x="0" y="1" width="1" height="1" fill="#000000"/><rect x="3" y="1" width="1" height="1" fill="#000000"/><rect x="5" y="1" width="1" height="1" fill="#000000"/><rect x="8" y="1" width="1" height="1" fill="#000000"/><rect x="10" y="1" width="1" height="1" fill="#000000"/><rect x="13" y="1" width="1" height="1" fill="#000000"/><rect x="0" y="2" width="4" height="1" fill="#000000"/><rect x="5" y="2" width="3" height="1" fill="#000000"/><rect x="10" y="2" width="1" height="1" fill="#000000"/><rect x="14" y="2" width="1" height="1" fill="#000080"/><rect x="0" y="3" width="1" height="1" fill="#000000"/><rect x="3" y="3" width="1" height="1" fill="#000000"/><rect x="5" y="3" width="1" height="1" fill="#000000"/><rect x="8" y="3" width="1" height="1" fill="#000000"/><rect x="10" y="3" width="1" height="1" fill="#000000"/><rect x="13" y="3" width="2" height="1" fill="#000080"/><rect x="0" y="4" width="1" height="1" fill="#000000"/><rect x="3" y="4" width="1" height="1" fill="#000000"/><rect x="5" y="4" width="3" height="1" fill="#000000"/><rect x="11" y="4" width="1" height="1" fill="#000000"/><rect x="12" y="4" width="2" height="1" fill="#000080"/><rect x="14" y="4" width="1" height="1" fill="#ffffff"/><rect x="11" y="5" width="2" height="1" fill="#000080"/><rect x="13" y="5" width="1" height="1" fill="#ffffff"/><rect x="10" y="6" width="2" height="1" fill="#000080"/><rect x="12" y="6" width="1" height="1" fill="#ffffff"/><rect x="9" y="7" width="2" height="1" fill="#000080"/><rect x="11" y="7" width="1" height="1" fill="#ffffff"/><rect x="0" y="8" width="1" height="1" fill="#000080"/><rect x="8" y="8" width="2" height="1" fill="#000080"/><rect x="10" y="8" width="1" height="1" fill="#ffffff"/><rect x="0" y="9" width="2" height="1" fill="#000080"/><rect x="7" y="9" width="2" height="1" fill="#000080"/><rect x="9" y="9" width="1" height="1" fill="#ffffff"/><rect x="1" y="10" width="2" height="1" fill="#000080"/><rect x="6" y="10" width="2" height="1" fill="#000080"/><rect x="8" y="10" width="1" height="1" fill="#ffffff"/><rect x="2" y="11" width="2" height="1" fill="#000080"/><rect x="5" y="11" width="2" height="1" fill="#000080"/><rect x="7" y="11" width="1" height="1" fill="#ffffff"/><rect x="3" y="12" width="3" height="1" fill="#000080"/><rect x="6" y="12" width="1" height="1" fill="#ffffff"/><rect x="4" y="13" width="1" height="1" fill="#000080"/><rect x="5" y="13" width="1" height="1" fill="#ffffff"/></svg><svg class="a" style="left:163px;top:48px" width="9" height="14" shape-rendering="crispEdges"><rect x="0" y="0" width="1" height="1" fill="#000000"/><rect x="6" y="0" width="1" height="1" fill="#000000"/><rect x="0" y="1" width="1" height="1" fill="#000000"/><rect x="6" y="1" width="1" height="1" fill="#000000"/><rect x="1" y="2" width="1" height="1" fill="#000000"/><rect x="5" y="2" width="1" height="1" fill="#000000"/><rect x="1" y="3" width="1" height="1" fill="#000000"/><rect x="5" y="3" width="1" height="1" fill="#000000"/><rect x="2" y="4" width="1" height="1" fill="#000000"/><rect x="4" y="4" width="1" height="1" fill="#000000"/><rect x="2" y="5" width="1" height="1" fill="#000000"/><rect x="4" y="5" width="1" height="1" fill="#000000"/><rect x="3" y="6" width="1" height="1" fill="#000000"/><rect x="2" y="7" width="1" height="1" fill="#000080"/><rect x="3" y="7" width="1" height="1" fill="#000000"/><rect x="4" y="7" width="1" height="1" fill="#000080"/><rect x="1" y="8" width="1" height="1" fill="#000080"/><rect x="3" y="8" width="1" height="1" fill="#000080"/><rect x="5" y="8" width="2" height="1" fill="#000080"/><rect x="0" y="9" width="1" height="1" fill="#000080"/><rect x="3" y="9" width="1" height="1" fill="#000080"/><rect x="5" y="9" width="1" height="1" fill="#000080"/><rect x="7" y="9" width="1" height="1" fill="#000080"/><rect x="0" y="10" width="1" height="1" fill="#000080"/><rect x="3" y="10" width="1" height="1" fill="#000080"/><rect x="5" y="10" width="1" height="1" fill="#000080"/><rect x="7" y="10" width="1" height="1" fill="#000080"/><rect x="0" y="11" width="1" height="1" fill="#000080"/><rect x="3" y="11" width="1" height="1" fill="#000080"/><rect x="5" y="11" width="1" height="1" fill="#000080"/><rect x="7" y="11" width="1" height="1" fill="#000080"/><rect x="1" y="12" width="2" height="1" fill="#000080"/><rect x="6" y="12" width="2" height="1" fill="#000080"/></svg><svg class="a" style="left:183px;top:48px" width="16" height="14" shape-rendering="crispEdges"><rect x="0" y="0" width="7" height="1" fill="#000000"/><rect x="0" y="1" width="1" height="1" fill="#000000"/><rect x="1" y="1" width="5" height="1" fill="#ffffff"/><rect x="6" y="1" width="2" height="1" fill="#000000"/><rect x="0" y="2" width="1" height="1" fill="#000000"/><rect x="1" y="2" width="1" height="1" fill="#ffffff"/><rect x="2" y="2" width="3" height="1" fill="#000000"/><rect x="5" y="2" width="1" height="1" fill="#ffffff"/><rect x="6" y="2" width="1" height="1" fill="#000000"/><rect x="7" y="2" width="1" height="1" fill="#ffffff"/><rect x="8" y="2" width="1" height="1" fill="#000000"/><rect x="0" y="3" width="1" height="1" fill="#000000"/><rect x="1" y="3" width="5" height="1" fill="#ffffff"/><rect x="6" y="3" width="6" height="1" fill="#000080"/><rect x="0" y="4" width="1" height="1" fill="#000000"/><rect x="1" y="4" width="1" height="1" fill="#ffffff"/><rect x="2" y="4" width="3" height="1" fill="#000000"/><rect x="5" y="4" width="1" height="1" fill="#ffffff"/><rect x="6" y="4" width="1" height="1" fill="#000080"/><rect x="7" y="4" width="4" height="1" fill="#ffffff"/><rect x="11" y="4" width="2" height="1" fill="#000080"/><rect x="0" y="5" width="1" height="1" fill="#000000"/><rect x="1" y="5" width="5" height="1" fill="#ffffff"/><rect x="6" y="5" width="1" height="1" fill="#000080"/><rect x="7" y="5" width="1" height="1" fill="#ffffff"/><rect x="8" y="5" width="2" height="1" fill="#000000"/><rect x="10" y="5" width="1" height="1" fill="#ffffff"/><rect x="11" y="5" width="1" height="1" fill="#000080"/><rect x="12" y="5" width="1" height="1" fill="#ffffff"/><rect x="13" y="5" width="1" height="1" fill="#000080"/><rect x="0" y="6" width="1" height="1" fill="#000000"/><rect x="1" y="6" width="1" height="1" fill="#ffffff"/><rect x="2" y="6" width="3" height="1" fill="#000000"/><rect x="5" y="6" width="1" height="1" fill="#ffffff"/><rect x="6" y="6" width="1" height="1" fill="#000080"/><rect x="7" y="6" width="4" height="1" fill="#ffffff"/><rect x="11" y="6" width="4" height="1" fill="#000080"/><rect x="0" y="7" width="1" height="1" fill="#000000"/><rect x="1" y="7" width="5" height="1" fill="#ffffff"/><rect x="6" y="7" width="1" height="1" fill="#000080"/><rect x="7" y="7" width="1" height="1" fill="#ffffff"/><rect x="8" y="7" width="5" height="1" fill="#000000"/><rect x="13" y="7" width="1" height="1" fill="#ffffff"/><rect x="14" y="7" width="1" height="1" fill="#000080"/><rect x="0" y="8" width="6" height="1" fill="#000000"/><rect x="6" y="8" width="1" height="1" fill="#000080"/><rect x="7" y="8" width="7" height="1" fill="#ffffff"/><rect x="14" y="8" width="1" height="1" fill="#000080"/><rect x="6" y="9" width="1" height="1" fill="#000080"/><rect x="7" y="9" width="1" height="1" fill="#ffffff"/><rect x="8" y="9" width="5" height="1" fill="#000000"/><rect x="13" y="9" width="1" height="1" fill="#ffffff"/><rect x="14" y="9" width="1" height="1" fill="#000080"/><rect x="6" y="10" width="1" height="1" fill="#000080"/><rect x="7" y="10" width="7" height="1" fill="#ffffff"/><rect x="14" y="10" width="1" height="1" fill="#000080"/><rect x="6" y="11" width="1" height="1" fill="#000080"/><rect x="7" y="11" width="1" height="1" fill="#ffffff"/><rect x="8" y="11" width="5" height="1" fill="#000000"/><rect x="13" y="11" width="1" height="1" fill="#ffffff"/><rect x="14" y="11" width="1" height="1" fill="#000080"/><rect x="6" y="12" width="1" height="1" fill="#000080"/><rect x="7" y="12" width="7" height="1" fill="#ffffff"/><rect x="14" y="12" width="1" height="1" fill="#000080"/><rect x="6" y="13" width="9" height="1" fill="#000080"/></svg><svg class="a" style="left:207px;top:48px" width="16" height="13" shape-rendering="crispEdges"><rect x="4" y="0" width="5" height="1" fill="#000000"/><rect x="1" y="1" width="4" height="1" fill="#000000"/><rect x="5" y="1" width="3" height="1" fill="#ffff00"/><rect x="8" y="1" width="4" height="1" fill="#000000"/><rect x="0" y="2" width="1" height="1" fill="#000000"/><rect x="1" y="2" width="2" height="1" fill="#8a8450"/><rect x="3" y="2" width="1" height="1" fill="#000000"/><rect x="4" y="2" width="1" height="1" fill="#ffff00"/><rect x="5" y="2" width="3" height="1" fill="#ffffff"/><rect x="8" y="2" width="1" height="1" fill="#ffff00"/><rect x="9" y="2" width="1" height="1" fill="#000000"/><rect x="10" y="2" width="2" height="1" fill="#8a8450"/><rect x="12" y="2" width="1" height="1" fill="#000000"/><rect x="0" y="3" width="1" height="1" fill="#000000"/><rect x="1" y="3" width="2" height="1" fill="#8a8450"/><rect x="3" y="3" width="7" height="1" fill="#000000"/><rect x="10" y="3" width="2" height="1" fill="#8a8450"/><rect x="12" y="3" width="1" height="1" fill="#000000"/><rect x="0" y="4" width="1" height="1" fill="#000000"/><rect x="1" y="4" width="11" height="1" fill="#8a8450"/><rect x="12" y="4" width="1" height="1" fill="#000000"/><rect x="0" y="5" width="1" height="1" fill="#000000"/><rect x="1" y="5" width="11" height="1" fill="#8a8450"/><rect x="12" y="5" width="1" height="1" fill="#000000"/><rect x="0" y="6" width="1" height="1" fill="#000000"/><rect x="1" y="6" width="5" height="1" fill="#8a8450"/><rect x="6" y="6" width="9" height="1" fill="#000080"/><rect x="0" y="7" width="1" height="1" fill="#000000"/><rect x="1" y="7" width="5" height="1" fill="#8a8450"/><rect x="6" y="7" width="1" height="1" fill="#000080"/><rect x="7" y="7" width="7" height="1" fill="#ffffff"/><rect x="14" y="7" width="2" height="1" fill="#000080"/><rect x="0" y="8" width="1" height="1" fill="#000000"/><rect x="1" y="8" width="5" height="1" fill="#8a8450"/><rect x="6" y="8" width="1" height="1" fill="#000080"/><rect x="7" y="8" width="1" height="1" fill="#ffffff"/><rect x="8" y="8" width="4" height="1" fill="#000000"/><rect x="12" y="8" width="3" height="1" fill="#ffffff"/><rect x="15" y="8" width="1" height="1" fill="#000080"/><rect x="0" y="9" width="1" height="1" fill="#000000"/><rect x="1" y="9" width="5" height="1" fill="#8a8450"/><rect x="6" y="9" width="1" height="1" fill="#000080"/><rect x="7" y="9" width="8" height="1" fill="#ffffff"/><rect x="15" y="9" width="1" height="1" fill="#000080"/><rect x="0" y="10" width="1" height="1" fill="#000000"/><rect x="1" y="10" width="5" height="1" fill="#8a8450"/><rect x="6" y="10" width="1" height="1" fill="#000080"/><rect x="7" y="10" width="1" height="1" fill="#ffffff"/><rect x="8" y="10" width="6" height="1" fill="#000000"/><rect x="14" y="10" width="1" height="1" fill="#ffffff"/><rect x="15" y="10" width="1" height="1" fill="#000080"/><rect x="0" y="11" width="1" height="1" fill="#000000"/><rect x="1" y="11" width="5" height="1" fill="#8a8450"/><rect x="6" y="11" width="1" height="1" fill="#000080"/><rect x="7" y="11" width="8" height="1" fill="#ffffff"/><rect x="15" y="11" width="1" height="1" fill="#000080"/><rect x="0" y="12" width="6" height="1" fill="#000000"/><rect x="6" y="12" width="10" height="1" fill="#000080"/></svg><svg class="a" style="left:237px;top:51px" width="13" height="7" shape-rendering="crispEdges"><rect x="6" y="0" width="4" height="1" fill="#000080"/><rect x="0" y="1" width="1" height="1" fill="#000080"/><rect x="5" y="1" width="1" height="1" fill="#000080"/><rect x="10" y="1" width="1" height="1" fill="#000080"/><rect x="0" y="2" width="2" height="1" fill="#000080"/><rect x="4" y="2" width="1" height="1" fill="#000080"/><rect x="11" y="2" width="1" height="1" fill="#000080"/><rect x="0" y="3" width="4" height="1" fill="#000080"/><rect x="11" y="3" width="1" height="1" fill="#000080"/><rect x="0" y="4" width="4" height="1" fill="#000080"/><rect x="11" y="4" width="1" height="1" fill="#000080"/><rect x="0" y="5" width="5" height="1" fill="#000080"/><rect x="10" y="5" width="1" height="1" fill="#000080"/><rect x="10" y="6" width="1" height="1" fill="#000080"/></svg><svg class="a" style="left:257px;top:54px" width="5" height="3" shape-rendering="crispEdges"><rect x="0" y="0" width="5" height="1" fill="#000000"/><rect x="1" y="1" width="3" height="1" fill="#000000"/><rect x="2" y="2" width="1" height="1" fill="#000000"/></svg><svg class="a" style="left:271px;top:51px" width="14" height="8" shape-rendering="crispEdges"><rect x="3" y="0" width="4" height="1" fill="#50637c"/><rect x="2" y="1" width="1" height="1" fill="#50637c"/><rect x="7" y="1" width="1" height="1" fill="#50637c"/><rect x="12" y="1" width="1" height="1" fill="#50637c"/><rect x="1" y="2" width="1" height="1" fill="#50637c"/><rect x="8" y="2" width="1" height="1" fill="#50637c"/><rect x="11" y="2" width="2" height="1" fill="#50637c"/><rect x="1" y="3" width="1" height="1" fill="#50637c"/><rect x="9" y="3" width="4" height="1" fill="#50637c"/><rect x="1" y="4" width="1" height="1" fill="#50637c"/><rect x="9" y="4" width="4" height="1" fill="#50637c"/><rect x="2" y="5" width="1" height="1" fill="#50637c"/><rect x="8" y="5" width="5" height="1" fill="#50637c"/><rect x="2" y="6" width="1" height="1" fill="#c8d4e1"/><rect x="3" y="6" width="1" height="1" fill="#50637c"/><rect x="9" y="6" width="4" height="1" fill="#c8d4e1"/><rect x="3" y="7" width="1" height="1" fill="#c8d4e1"/></svg><svg class="a" style="left:291px;top:54px" width="5" height="3" shape-rendering="crispEdges"><rect x="0" y="0" width="5" height="1" fill="#50637c"/><rect x="1" y="1" width="3" height="1" fill="#50637c"/><rect x="4" y="1" width="1" height="1" fill="#c8d4e1"/><rect x="2" y="2" width="1" height="1" fill="#50637c"/><rect x="3" y="2" width="1" height="1" fill="#c8d4e1"/></svg><svg class="a" style="left:310px;top:47px" width="15" height="15" shape-rendering="crispEdges"><rect x="3" y="0" width="5" height="1" fill="#000000"/><rect x="2" y="1" width="1" height="1" fill="#000000"/><rect x="3" y="1" width="1" height="1" fill="#ffffff"/><rect x="4" y="1" width="1" height="1" fill="#0000ff"/><rect x="5" y="1" width="4" height="1" fill="#008000"/><rect x="9" y="1" width="1" height="1" fill="#000000"/><rect x="1" y="2" width="1" height="1" fill="#000000"/><rect x="2" y="2" width="1" height="1" fill="#ffffff"/><rect x="3" y="2" width="2" height="1" fill="#0000ff"/><rect x="5" y="2" width="3" height="1" fill="#008000"/><rect x="8" y="2" width="2" height="1" fill="#0000ff"/><rect x="10" y="2" width="1" height="1" fill="#000000"/><rect x="0" y="3" width="1" height="1" fill="#000000"/><rect x="1" y="3" width="2" height="1" fill="#0000ff"/><rect x="3" y="3" width="6" height="1" fill="#008000"/><rect x="9" y="3" width="2" height="1" fill="#0000ff"/><rect x="11" y="3" width="1" height="1" fill="#000000"/><rect x="0" y="4" width="1" height="1" fill="#000000"/><rect x="1" y="4" width="2" height="1" fill="#0000ff"/><rect x="3" y="4" width="3" height="1" fill="#008000"/><rect x="6" y="4" width="1" height="1" fill="#0000ff"/><rect x="7" y="4" width="3" height="1" fill="#008000"/><rect x="10" y="4" width="1" height="1" fill="#0000ff"/><rect x="11" y="4" width="1" height="1" fill="#000000"/><rect x="0" y="5" width="1" height="1" fill="#000000"/><rect x="1" y="5" width="3" height="1" fill="#0000ff"/><rect x="4" y="5" width="1" height="1" fill="#008000"/><rect x="5" y="5" width="3" height="1" fill="#0000ff"/><rect x="8" y="5" width="2" height="1" fill="#008000"/><rect x="10" y="5" width="1" height="1" fill="#0000ff"/><rect x="11" y="5" width="1" height="1" fill="#000000"/><rect x="0" y="6" width="1" height="1" fill="#000000"/><rect x="1" y="6" width="6" height="1" fill="#0000ff"/><rect x="7" y="6" width="2" height="1" fill="#008000"/><rect x="9" y="6" width="2" height="1" fill="#0000ff"/><rect x="11" y="6" width="1" height="1" fill="#000000"/><rect x="1" y="7" width="1" height="1" fill="#000000"/><rect x="2" y="7" width="8" height="1" fill="#0000ff"/><rect x="10" y="7" width="1" height="1" fill="#000000"/><rect x="2" y="8" width="1" height="1" fill="#000000"/><rect x="3" y="8" width="2" height="1" fill="#0000ff"/><rect x="5" y="8" width="8" height="1" fill="#000000"/><rect x="2" y="9" width="2" height="1" fill="#000000"/><rect x="4" y="9" width="4" height="1" fill="#ffffff"/><rect x="8" y="9" width="1" height="1" fill="#000000"/><rect x="9" y="9" width="4" height="1" fill="#ffffff"/><rect x="13" y="9" width="1" height="1" fill="#000000"/><rect x="1" y="10" width="1" height="1" fill="#000000"/><rect x="2" y="10" width="1" height="1" fill="#ffffff"/><rect x="3" y="10" width="4" height="1" fill="#000000"/><rect x="7" y="10" width="2" height="1" fill="#ffffff"/><rect x="9" y="10" width="4" height="1" fill="#000000"/><rect x="13" y="10" width="1" height="1" fill="#ffffff"/><rect x="14" y="10" width="1" height="1" fill="#000000"/><rect x="1" y="11" width="1" height="1" fill="#000000"/><rect x="2" y="11" width="2" height="1" fill="#ffffff"/><rect x="4" y="11" width="8" height="1" fill="#808080"/><rect x="12" y="11" width="2" height="1" fill="#ffffff"/><rect x="14" y="11" width="1" height="1" fill="#000000"/><rect x="1" y="12" width="1" height="1" fill="#000000"/><rect x="2" y="12" width="1" height="1" fill="#ffffff"/><rect x="3" y="12" width="4" height="1" fill="#000000"/><rect x="7" y="12" width="2" height="1" fill="#ffffff"/><rect x="9" y="12" width="4" height="1" fill="#000000"/><rect x="13" y="12" width="1" height="1" fill="#ffffff"/><rect x="14" y="12" width="1" height="1" fill="#000000"/><rect x="2" y="13" width="1" height="1" fill="#000000"/><rect x="3" y="13" width="4" height="1" fill="#ffffff"/><rect x="7" y="13" width="2" height="1" fill="#000000"/><rect x="9" y="13" width="4" height="1" fill="#ffffff"/><rect x="13" y="13" width="1" height="1" fill="#000000"/><rect x="3" y="14" width="10" height="1" fill="#000000"/></svg><svg class="a" style="left:335px;top:50px" width="10" height="9" shape-rendering="crispEdges"><rect x="0" y="0" width="10" height="1" fill="#000000"/><rect x="0" y="1" width="2" height="1" fill="#000000"/><rect x="8" y="1" width="1" height="1" fill="#000000"/><rect x="1" y="2" width="2" height="1" fill="#000000"/><rect x="2" y="3" width="2" height="1" fill="#000000"/><rect x="3" y="4" width="2" height="1" fill="#000000"/><rect x="2" y="5" width="2" height="1" fill="#000000"/><rect x="1" y="6" width="2" height="1" fill="#000000"/><rect x="0" y="7" width="2" height="1" fill="#000000"/><rect x="8" y="7" width="1" height="1" fill="#000000"/><rect x="0" y="8" width="10" height="1" fill="#000000"/></svg><svg class="a" style="left:356px;top:49px" width="12" height="12" shape-rendering="crispEdges"><rect x="6" y="0" width="3" height="1" fill="#000000"/><rect x="5" y="1" width="2" height="1" fill="#000000"/><rect x="9" y="1" width="1" height="1" fill="#000000"/><rect x="5" y="2" width="2" height="1" fill="#000000"/><rect x="3" y="3" width="5" height="1" fill="#000000"/><rect x="4" y="4" width="2" height="1" fill="#000000"/><rect x="8" y="4" width="1" height="1" fill="#000000"/><rect x="4" y="5" width="2" height="1" fill="#000000"/><rect x="7" y="5" width="2" height="1" fill="#000000"/><rect x="10" y="5" width="2" height="1" fill="#000000"/><rect x="4" y="6" width="2" height="1" fill="#000000"/><rect x="8" y="6" width="3" height="1" fill="#000000"/><rect x="3" y="7" width="2" height="1" fill="#000000"/><rect x="8" y="7" width="3" height="1" fill="#000000"/><rect x="3" y="8" width="2" height="1" fill="#000000"/><rect x="7" y="8" width="2" height="1" fill="#000000"/><rect x="10" y="8" width="2" height="1" fill="#000000"/><rect x="3" y="9" width="2" height="1" fill="#000000"/><rect x="2" y="10" width="2" height="1" fill="#000000"/><rect x="0" y="11" width="3" height="1" fill="#000000"/></svg><svg class="a" style="left:379px;top:47px" width="7" height="7" shape-rendering="crispEdges"><rect x="3" y="0" width="1" height="1" fill="#000080"/><rect x="2" y="1" width="3" height="1" fill="#000080"/><rect x="2" y="2" width="1" height="1" fill="#000080"/><rect x="4" y="2" width="1" height="1" fill="#000080"/><rect x="1" y="3" width="2" height="1" fill="#000080"/><rect x="4" y="3" width="2" height="1" fill="#000080"/><rect x="1" y="4" width="5" height="1" fill="#000080"/><rect x="1" y="5" width="1" height="1" fill="#000080"/><rect x="5" y="5" width="1" height="1" fill="#000080"/><rect x="0" y="6" width="3" height="1" fill="#000080"/><rect x="4" y="6" width="3" height="1" fill="#000080"/></svg><svg class="a" style="left:379px;top:55px" width="7" height="7" shape-rendering="crispEdges"><rect x="0" y="0" width="7" height="1" fill="#800000"/><rect x="0" y="1" width="1" height="1" fill="#800000"/><rect x="4" y="1" width="2" height="1" fill="#800000"/><rect x="3" y="2" width="2" height="1" fill="#800000"/><rect x="2" y="3" width="2" height="1" fill="#800000"/><rect x="1" y="4" width="2" height="1" fill="#800000"/><rect x="0" y="5" width="2" height="1" fill="#800000"/><rect x="5" y="5" width="1" height="1" fill="#800000"/><rect x="0" y="6" width="7" height="1" fill="#800000"/></svg><svg class="a" style="left:388px;top:47px" width="5" height="15" shape-rendering="crispEdges"><rect x="2" y="0" width="1" height="1" fill="#000000"/><rect x="2" y="1" width="1" height="1" fill="#000000"/><rect x="2" y="2" width="1" height="1" fill="#000000"/><rect x="2" y="3" width="1" height="1" fill="#000000"/><rect x="2" y="4" width="1" height="1" fill="#000000"/><rect x="2" y="5" width="1" height="1" fill="#000000"/><rect x="2" y="6" width="1" height="1" fill="#000000"/><rect x="2" y="7" width="1" height="1" fill="#000000"/><rect x="2" y="8" width="1" height="1" fill="#000000"/><rect x="2" y="9" width="1" height="1" fill="#000000"/><rect x="0" y="10" width="5" height="1" fill="#000000"/><rect x="1" y="11" width="3" height="1" fill="#000000"/><rect x="1" y="12" width="3" height="1" fill="#000000"/><rect x="2" y="13" width="1" height="1" fill="#000000"/><rect x="2" y="14" width="1" height="1" fill="#000000"/></svg><svg class="a" style="left:402px;top:47px" width="7" height="7" shape-rendering="crispEdges"><rect x="0" y="0" width="7" height="1" fill="#800000"/><rect x="0" y="1" width="1" height="1" fill="#800000"/><rect x="4" y="1" width="2" height="1" fill="#800000"/><rect x="3" y="2" width="2" height="1" fill="#800000"/><rect x="2" y="3" width="2" height="1" fill="#800000"/><rect x="1" y="4" width="2" height="1" fill="#800000"/><rect x="0" y="5" width="2" height="1" fill="#800000"/><rect x="5" y="5" width="1" height="1" fill="#800000"/><rect x="0" y="6" width="7" height="1" fill="#800000"/></svg><svg class="a" style="left:402px;top:55px" width="7" height="7" shape-rendering="crispEdges"><rect x="3" y="0" width="1" height="1" fill="#000080"/><rect x="2" y="1" width="3" height="1" fill="#000080"/><rect x="2" y="2" width="1" height="1" fill="#000080"/><rect x="4" y="2" width="1" height="1" fill="#000080"/><rect x="1" y="3" width="2" height="1" fill="#000080"/><rect x="4" y="3" width="2" height="1" fill="#000080"/><rect x="1" y="4" width="5" height="1" fill="#000080"/><rect x="1" y="5" width="1" height="1" fill="#000080"/><rect x="5" y="5" width="1" height="1" fill="#000080"/><rect x="0" y="6" width="3" height="1" fill="#000080"/><rect x="4" y="6" width="3" height="1" fill="#000080"/></svg><svg class="a" style="left:411px;top:47px" width="5" height="15" shape-rendering="crispEdges"><rect x="2" y="0" width="1" height="1" fill="#000000"/><rect x="2" y="1" width="1" height="1" fill="#000000"/><rect x="2" y="2" width="1" height="1" fill="#000000"/><rect x="2" y="3" width="1" height="1" fill="#000000"/><rect x="2" y="4" width="1" height="1" fill="#000000"/><rect x="2" y="5" width="1" height="1" fill="#000000"/><rect x="2" y="6" width="1" height="1" fill="#000000"/><rect x="2" y="7" width="1" height="1" fill="#000000"/><rect x="2" y="8" width="1" height="1" fill="#000000"/><rect x="2" y="9" width="1" height="1" fill="#000000"/><rect x="0" y="10" width="5" height="1" fill="#000000"/><rect x="1" y="11" width="3" height="1" fill="#000000"/><rect x="1" y="12" width="3" height="1" fill="#000000"/><rect x="2" y="13" width="1" height="1" fill="#000000"/><rect x="2" y="14" width="1" height="1" fill="#000000"/></svg><svg class="a" style="left:430px;top:47px" width="16" height="16" shape-rendering="crispEdges"><rect x="3" y="0" width="1" height="1" fill="#000000"/><rect x="2" y="1" width="2" height="1" fill="#000000"/><rect x="6" y="1" width="5" height="1" fill="#000000"/><rect x="1" y="2" width="1" height="1" fill="#000000"/><rect x="2" y="2" width="1" height="1" fill="#ffffff"/><rect x="3" y="2" width="1" height="1" fill="#000000"/><rect x="6" y="2" width="1" height="1" fill="#000000"/><rect x="7" y="2" width="3" height="1" fill="#ffff00"/><rect x="10" y="2" width="1" height="1" fill="#000000"/><rect x="0" y="3" width="1" height="1" fill="#000000"/><rect x="1" y="3" width="2" height="1" fill="#ffffff"/><rect x="3" y="3" width="1" height="1" fill="#000000"/><rect x="6" y="3" width="1" height="1" fill="#000000"/><rect x="7" y="3" width="3" height="1" fill="#ffff00"/><rect x="10" y="3" width="5" height="1" fill="#000000"/><rect x="0" y="4" width="1" height="1" fill="#000000"/><rect x="1" y="4" width="2" height="1" fill="#ffffff"/><rect x="3" y="4" width="1" height="1" fill="#000000"/><rect x="6" y="4" width="1" height="1" fill="#000000"/><rect x="7" y="4" width="3" height="1" fill="#ffff00"/><rect x="10" y="4" width="1" height="1" fill="#000000"/><rect x="11" y="4" width="3" height="1" fill="#ff0000"/><rect x="14" y="4" width="1" height="1" fill="#000000"/><rect x="0" y="5" width="1" height="1" fill="#000000"/><rect x="1" y="5" width="2" height="1" fill="#ffffff"/><rect x="3" y="5" width="1" height="1" fill="#000000"/><rect x="6" y="5" width="1" height="1" fill="#000000"/><rect x="7" y="5" width="3" height="1" fill="#ffff00"/><rect x="10" y="5" width="1" height="1" fill="#000000"/><rect x="11" y="5" width="3" height="1" fill="#ff0000"/><rect x="14" y="5" width="1" height="1" fill="#000000"/><rect x="0" y="6" width="1" height="1" fill="#000000"/><rect x="1" y="6" width="1" height="1" fill="#ffffff"/><rect x="2" y="6" width="5" height="1" fill="#000000"/><rect x="7" y="6" width="3" height="1" fill="#ffff00"/><rect x="10" y="6" width="1" height="1" fill="#000000"/><rect x="11" y="6" width="3" height="1" fill="#ff0000"/><rect x="14" y="6" width="1" height="1" fill="#000000"/><rect x="0" y="7" width="1" height="1" fill="#000000"/><rect x="1" y="7" width="1" height="1" fill="#ffffff"/><rect x="2" y="7" width="1" height="1" fill="#000000"/><rect x="3" y="7" width="3" height="1" fill="#0000ff"/><rect x="6" y="7" width="1" height="1" fill="#000000"/><rect x="7" y="7" width="3" height="1" fill="#ffff00"/><rect x="10" y="7" width="1" height="1" fill="#000000"/><rect x="11" y="7" width="3" height="1" fill="#ff0000"/><rect x="14" y="7" width="1" height="1" fill="#000000"/><rect x="0" y="8" width="1" height="1" fill="#000000"/><rect x="1" y="8" width="1" height="1" fill="#ffffff"/><rect x="2" y="8" width="1" height="1" fill="#000000"/><rect x="3" y="8" width="3" height="1" fill="#0000ff"/><rect x="6" y="8" width="1" height="1" fill="#000000"/><rect x="7" y="8" width="3" height="1" fill="#ffff00"/><rect x="10" y="8" width="1" height="1" fill="#000000"/><rect x="11" y="8" width="3" height="1" fill="#ff0000"/><rect x="14" y="8" width="1" height="1" fill="#000000"/><rect x="0" y="9" width="1" height="1" fill="#000000"/><rect x="1" y="9" width="1" height="1" fill="#ffffff"/><rect x="2" y="9" width="1" height="1" fill="#000000"/><rect x="3" y="9" width="3" height="1" fill="#0000ff"/><rect x="6" y="9" width="1" height="1" fill="#000000"/><rect x="7" y="9" width="3" height="1" fill="#ffff00"/><rect x="10" y="9" width="1" height="1" fill="#000000"/><rect x="11" y="9" width="3" height="1" fill="#ff0000"/><rect x="14" y="9" width="1" height="1" fill="#000000"/><rect x="0" y="10" width="1" height="1" fill="#000000"/><rect x="1" y="10" width="1" height="1" fill="#ffffff"/><rect x="2" y="10" width="1" height="1" fill="#000000"/><rect x="3" y="10" width="3" height="1" fill="#0000ff"/><rect x="6" y="10" width="1" height="1" fill="#000000"/><rect x="7" y="10" width="3" height="1" fill="#ffff00"/><rect x="10" y="10" width="1" height="1" fill="#000000"/><rect x="11" y="10" width="3" height="1" fill="#ff0000"/><rect x="14" y="10" width="1" height="1" fill="#000000"/><rect x="0" y="11" width="1" height="1" fill="#000000"/><rect x="1" y="11" width="1" height="1" fill="#ffffff"/><rect x="2" y="11" width="1" height="1" fill="#000000"/><rect x="3" y="11" width="3" height="1" fill="#0000ff"/><rect x="6" y="11" width="1" height="1" fill="#000000"/><rect x="7" y="11" width="3" height="1" fill="#ffff00"/><rect x="10" y="11" width="1" height="1" fill="#000000"/><rect x="11" y="11" width="3" height="1" fill="#ff0000"/><rect x="14" y="11" width="1" height="1" fill="#000000"/><rect x="0" y="12" width="1" height="1" fill="#000000"/><rect x="1" y="12" width="1" height="1" fill="#ffffff"/><rect x="2" y="12" width="1" height="1" fill="#000000"/><rect x="3" y="12" width="3" height="1" fill="#0000ff"/><rect x="6" y="12" width="1" height="1" fill="#000000"/><rect x="7" y="12" width="3" height="1" fill="#ffff00"/><rect x="10" y="12" width="1" height="1" fill="#000000"/><rect x="11" y="12" width="3" height="1" fill="#ff0000"/><rect x="14" y="12" width="1" height="1" fill="#000000"/><rect x="0" y="13" width="1" height="1" fill="#000000"/><rect x="1" y="13" width="1" height="1" fill="#ffffff"/><rect x="2" y="13" width="14" height="1" fill="#000000"/><rect x="0" y="14" width="1" height="1" fill="#000000"/><rect x="1" y="14" width="13" height="1" fill="#ffffff"/><rect x="14" y="14" width="1" height="1" fill="#000000"/><rect x="0" y="15" width="15" height="1" fill="#000000"/></svg><svg class="a" style="left:455px;top:48px" width="14" height="15" shape-rendering="crispEdges"><rect x="0" y="0" width="13" height="1" fill="#000000"/><rect x="0" y="1" width="1" height="1" fill="#000000"/><rect x="1" y="1" width="1" height="1" fill="#ffffff"/><rect x="2" y="1" width="1" height="1" fill="#e8e890"/><rect x="3" y="1" width="1" height="1" fill="#ffffff"/><rect x="4" y="1" width="1" height="1" fill="#e8e890"/><rect x="5" y="1" width="1" height="1" fill="#ffffff"/><rect x="6" y="1" width="1" height="1" fill="#e8e890"/><rect x="7" y="1" width="1" height="1" fill="#ffffff"/><rect x="8" y="1" width="1" height="1" fill="#e8e890"/><rect x="9" y="1" width="1" height="1" fill="#ffffff"/><rect x="10" y="1" width="1" height="1" fill="#e8e890"/><rect x="11" y="1" width="1" height="1" fill="#ffffff"/><rect x="12" y="1" width="1" height="1" fill="#000000"/><rect x="0" y="2" width="1" height="1" fill="#000000"/><rect x="1" y="2" width="1" height="1" fill="#e8e890"/><rect x="2" y="2" width="1" height="1" fill="#ffffff"/><rect x="3" y="2" width="1" height="1" fill="#e8e890"/><rect x="4" y="2" width="4" height="1" fill="#000080"/><rect x="8" y="2" width="1" height="1" fill="#ffffff"/><rect x="9" y="2" width="1" height="1" fill="#e8e890"/><rect x="10" y="2" width="1" height="1" fill="#ffffff"/><rect x="11" y="2" width="1" height="1" fill="#e8e890"/><rect x="12" y="2" width="1" height="1" fill="#000000"/><rect x="0" y="3" width="1" height="1" fill="#000000"/><rect x="1" y="3" width="1" height="1" fill="#ffffff"/><rect x="2" y="3" width="1" height="1" fill="#e8e890"/><rect x="3" y="3" width="2" height="1" fill="#000080"/><rect x="5" y="3" width="2" height="1" fill="#ffffff"/><rect x="7" y="3" width="2" height="1" fill="#000080"/><rect x="9" y="3" width="1" height="1" fill="#e8e890"/><rect x="10" y="3" width="1" height="1" fill="#ffffff"/><rect x="11" y="3" width="1" height="1" fill="#e8e890"/><rect x="12" y="3" width="1" height="1" fill="#000000"/><rect x="0" y="4" width="1" height="1" fill="#000000"/><rect x="1" y="4" width="1" height="1" fill="#e8e890"/><rect x="2" y="4" width="1" height="1" fill="#ffffff"/><rect x="3" y="4" width="2" height="1" fill="#000080"/><rect x="5" y="4" width="1" height="1" fill="#e8e890"/><rect x="6" y="4" width="1" height="1" fill="#ffffff"/><rect x="7" y="4" width="2" height="1" fill="#000080"/><rect x="9" y="4" width="1" height="1" fill="#ffffff"/><rect x="10" y="4" width="1" height="1" fill="#e8e890"/><rect x="11" y="4" width="1" height="1" fill="#ffffff"/><rect x="12" y="4" width="1" height="1" fill="#000000"/><rect x="0" y="5" width="1" height="1" fill="#000000"/><rect x="1" y="5" width="1" height="1" fill="#ffffff"/><rect x="2" y="5" width="1" height="1" fill="#e8e890"/><rect x="3" y="5" width="1" height="1" fill="#ffffff"/><rect x="4" y="5" width="1" height="1" fill="#e8e890"/><rect x="5" y="5" width="1" height="1" fill="#ffffff"/><rect x="6" y="5" width="2" height="1" fill="#000080"/><rect x="8" y="5" width="1" height="1" fill="#e8e890"/><rect x="9" y="5" width="1" height="1" fill="#ffffff"/><rect x="10" y="5" width="1" height="1" fill="#e8e890"/><rect x="11" y="5" width="1" height="1" fill="#ffffff"/><rect x="12" y="5" width="1" height="1" fill="#000000"/><rect x="0" y="6" width="1" height="1" fill="#000000"/><rect x="1" y="6" width="1" height="1" fill="#e8e890"/><rect x="2" y="6" width="1" height="1" fill="#ffffff"/><rect x="3" y="6" width="1" height="1" fill="#e8e890"/><rect x="4" y="6" width="1" height="1" fill="#ffffff"/><rect x="5" y="6" width="2" height="1" fill="#000080"/><rect x="7" y="6" width="1" height="1" fill="#e8e890"/><rect x="8" y="6" width="1" height="1" fill="#ffffff"/><rect x="9" y="6" width="1" height="1" fill="#e8e890"/><rect x="10" y="6" width="1" height="1" fill="#ffffff"/><rect x="11" y="6" width="1" height="1" fill="#e8e890"/><rect x="12" y="6" width="1" height="1" fill="#000000"/><rect x="0" y="7" width="1" height="1" fill="#000000"/><rect x="1" y="7" width="1" height="1" fill="#ffffff"/><rect x="2" y="7" width="1" height="1" fill="#e8e890"/><rect x="3" y="7" width="1" height="1" fill="#ffffff"/><rect x="4" y="7" width="1" height="1" fill="#e8e890"/><rect x="5" y="7" width="2" height="1" fill="#000080"/><rect x="7" y="7" width="1" height="1" fill="#ffffff"/><rect x="8" y="7" width="1" height="1" fill="#e8e890"/><rect x="9" y="7" width="1" height="1" fill="#ffffff"/><rect x="10" y="7" width="1" height="1" fill="#e8e890"/><rect x="11" y="7" width="1" height="1" fill="#ffffff"/><rect x="12" y="7" width="1" height="1" fill="#000000"/><rect x="0" y="8" width="1" height="1" fill="#000000"/><rect x="1" y="8" width="1" height="1" fill="#e8e890"/><rect x="2" y="8" width="1" height="1" fill="#ffffff"/><rect x="3" y="8" width="1" height="1" fill="#e8e890"/><rect x="4" y="8" width="1" height="1" fill="#ffffff"/><rect x="5" y="8" width="1" height="1" fill="#e8e890"/><rect x="6" y="8" width="1" height="1" fill="#ffffff"/><rect x="7" y="8" width="1" height="1" fill="#e8e890"/><rect x="8" y="8" width="1" height="1" fill="#ffffff"/><rect x="9" y="8" width="1" height="1" fill="#e8e890"/><rect x="10" y="8" width="1" height="1" fill="#ffffff"/><rect x="11" y="8" width="1" height="1" fill="#e8e890"/><rect x="12" y="8" width="1" height="1" fill="#000000"/><rect x="0" y="9" width="1" height="1" fill="#000000"/><rect x="1" y="9" width="1" height="1" fill="#ffffff"/><rect x="2" y="9" width="1" height="1" fill="#e8e890"/><rect x="3" y="9" width="1" height="1" fill="#ffffff"/><rect x="4" y="9" width="1" height="1" fill="#e8e890"/><rect x="5" y="9" width="2" height="1" fill="#000080"/><rect x="7" y="9" width="1" height="1" fill="#e8e890"/><rect x="8" y="9" width="1" height="1" fill="#ffffff"/><rect x="9" y="9" width="1" height="1" fill="#e8e890"/><rect x="10" y="9" width="1" height="1" fill="#ffffff"/><rect x="11" y="9" width="1" height="1" fill="#e8e890"/><rect x="12" y="9" width="1" height="1" fill="#000000"/><rect x="0" y="10" width="1" height="1" fill="#000000"/><rect x="1" y="10" width="1" height="1" fill="#e8e890"/><rect x="2" y="10" width="1" height="1" fill="#ffffff"/><rect x="3" y="10" width="1" height="1" fill="#e8e890"/><rect x="4" y="10" width="1" height="1" fill="#ffffff"/><rect x="5" y="10" width="2" height="1" fill="#000080"/><rect x="7" y="10" width="1" height="1" fill="#ffffff"/><rect x="8" y="10" width="1" height="1" fill="#e8e890"/><rect x="9" y="10" width="1" height="1" fill="#ffffff"/><rect x="10" y="10" width="1" height="1" fill="#e8e890"/><rect x="11" y="10" width="1" height="1" fill="#ffffff"/><rect x="12" y="10" width="1" height="1" fill="#000000"/><rect x="0" y="11" width="8" height="1" fill="#000000"/><rect x="8" y="11" width="1" height="1" fill="#ffffff"/><rect x="9" y="11" width="1" height="1" fill="#e8e890"/><rect x="10" y="11" width="3" height="1" fill="#000000"/><rect x="9" y="12" width="1" height="1" fill="#000000"/><rect x="10" y="12" width="1" height="1" fill="#ffffff"/><rect x="11" y="12" width="1" height="1" fill="#000000"/><rect x="10" y="13" width="2" height="1" fill="#000000"/><rect x="11" y="14" width="1" height="1" fill="#000000"/></svg><svg class="a" style="left:475px;top:48px" width="8" height="5" shape-rendering="crispEdges"><rect x="0" y="0" width="2" height="1" fill="#000000"/><rect x="4" y="0" width="2" height="1" fill="#000000"/><rect x="1" y="1" width="2" height="1" fill="#000000"/><rect x="5" y="1" width="2" height="1" fill="#000000"/><rect x="2" y="2" width="2" height="1" fill="#000000"/><rect x="6" y="2" width="2" height="1" fill="#000000"/><rect x="1" y="3" width="2" height="1" fill="#000000"/><rect x="5" y="3" width="2" height="1" fill="#000000"/><rect x="0" y="4" width="2" height="1" fill="#000000"/><rect x="4" y="4" width="2" height="1" fill="#000000"/></svg><svg class="a" style="left:476px;top:58px" width="5" height="3" shape-rendering="crispEdges"><rect x="0" y="0" width="5" height="1" fill="#000000"/><rect x="1" y="1" width="3" height="1" fill="#000000"/><rect x="2" y="2" width="1" height="1" fill="#000000"/></svg>
<svg class="a" style="left:674px;top:50px" width="9" height="9" shape-rendering="crispEdges"><rect x="0" y="0" width="7" height="1" fill="#000000"/><rect x="1" y="1" width="3" height="1" fill="#000000"/><rect x="6" y="1" width="2" height="1" fill="#000000"/><rect x="1" y="2" width="3" height="1" fill="#000000"/><rect x="6" y="2" width="2" height="1" fill="#000000"/><rect x="1" y="3" width="6" height="1" fill="#000000"/><rect x="1" y="4" width="3" height="1" fill="#000000"/><rect x="6" y="4" width="2" height="1" fill="#000000"/><rect x="1" y="5" width="3" height="1" fill="#000000"/><rect x="6" y="5" width="3" height="1" fill="#000000"/><rect x="1" y="6" width="3" height="1" fill="#000000"/><rect x="6" y="6" width="3" height="1" fill="#000000"/><rect x="1" y="7" width="3" height="1" fill="#000000"/><rect x="6" y="7" width="2" height="1" fill="#000000"/><rect x="0" y="8" width="7" height="1" fill="#000000"/></svg><svg class="a" style="left:697px;top:50px" width="9" height="9" shape-rendering="crispEdges"><rect x="4" y="0" width="5" height="1" fill="#000000"/><rect x="6" y="1" width="2" height="1" fill="#000000"/><rect x="5" y="2" width="2" height="1" fill="#000000"/><rect x="5" y="3" width="2" height="1" fill="#000000"/><rect x="4" y="4" width="2" height="1" fill="#000000"/><rect x="4" y="5" width="2" height="1" fill="#000000"/><rect x="3" y="6" width="2" height="1" fill="#000000"/><rect x="2" y="7" width="2" height="1" fill="#000000"/><rect x="0" y="8" width="5" height="1" fill="#000000"/></svg><svg class="a" style="left:720px;top:50px" width="9" height="11" shape-rendering="crispEdges"><rect x="0" y="0" width="4" height="1" fill="#000000"/><rect x="5" y="0" width="4" height="1" fill="#000000"/><rect x="1" y="1" width="2" height="1" fill="#000000"/><rect x="6" y="1" width="2" height="1" fill="#000000"/><rect x="1" y="2" width="2" height="1" fill="#000000"/><rect x="6" y="2" width="2" height="1" fill="#000000"/><rect x="1" y="3" width="2" height="1" fill="#000000"/><rect x="6" y="3" width="2" height="1" fill="#000000"/><rect x="1" y="4" width="2" height="1" fill="#000000"/><rect x="6" y="4" width="2" height="1" fill="#000000"/><rect x="1" y="5" width="2" height="1" fill="#000000"/><rect x="6" y="5" width="2" height="1" fill="#000000"/><rect x="1" y="6" width="2" height="1" fill="#000000"/><rect x="6" y="6" width="2" height="1" fill="#000000"/><rect x="2" y="7" width="5" height="1" fill="#000000"/><rect x="0" y="10" width="9" height="1" fill="#000000"/></svg><svg class="a" style="left:746px;top:49px" width="14" height="11" shape-rendering="crispEdges"><rect x="0" y="0" width="14" height="1" fill="#000000"/><rect x="0" y="2" width="10" height="1" fill="#000000"/><rect x="0" y="4" width="14" height="1" fill="#000000"/><rect x="0" y="6" width="10" height="1" fill="#000000"/><rect x="0" y="8" width="14" height="1" fill="#000000"/><rect x="0" y="10" width="10" height="1" fill="#000000"/></svg><svg class="a" style="left:767px;top:45px" width="21" height="20" shape-rendering="crispEdges"><rect x="0" y="0" width="1" height="1" fill="#c8d4e1"/><rect x="2" y="0" width="1" height="1" fill="#c8d4e1"/><rect x="4" y="0" width="1" height="1" fill="#c8d4e1"/><rect x="6" y="0" width="1" height="1" fill="#c8d4e1"/><rect x="8" y="0" width="1" height="1" fill="#c8d4e1"/><rect x="10" y="0" width="1" height="1" fill="#c8d4e1"/><rect x="12" y="0" width="1" height="1" fill="#c8d4e1"/><rect x="14" y="0" width="1" height="1" fill="#c8d4e1"/><rect x="16" y="0" width="1" height="1" fill="#c8d4e1"/><rect x="18" y="0" width="1" height="1" fill="#c8d4e1"/><rect x="20" y="0" width="1" height="1" fill="#c8d4e1"/><rect x="1" y="1" width="1" height="1" fill="#c8d4e1"/><rect x="3" y="1" width="1" height="1" fill="#c8d4e1"/><rect x="5" y="1" width="1" height="1" fill="#c8d4e1"/><rect x="7" y="1" width="1" height="1" fill="#c8d4e1"/><rect x="9" y="1" width="1" height="1" fill="#c8d4e1"/><rect x="11" y="1" width="1" height="1" fill="#c8d4e1"/><rect x="13" y="1" width="1" height="1" fill="#c8d4e1"/><rect x="15" y="1" width="1" height="1" fill="#c8d4e1"/><rect x="17" y="1" width="1" height="1" fill="#c8d4e1"/><rect x="19" y="1" width="1" height="1" fill="#c8d4e1"/><rect x="0" y="2" width="1" height="1" fill="#c8d4e1"/><rect x="2" y="2" width="1" height="1" fill="#c8d4e1"/><rect x="4" y="2" width="1" height="1" fill="#c8d4e1"/><rect x="6" y="2" width="1" height="1" fill="#c8d4e1"/><rect x="8" y="2" width="1" height="1" fill="#c8d4e1"/><rect x="10" y="2" width="1" height="1" fill="#c8d4e1"/><rect x="12" y="2" width="1" height="1" fill="#c8d4e1"/><rect x="14" y="2" width="1" height="1" fill="#c8d4e1"/><rect x="16" y="2" width="1" height="1" fill="#c8d4e1"/><rect x="18" y="2" width="1" height="1" fill="#c8d4e1"/><rect x="20" y="2" width="1" height="1" fill="#c8d4e1"/><rect x="1" y="3" width="1" height="1" fill="#c8d4e1"/><rect x="3" y="3" width="1" height="1" fill="#c8d4e1"/><rect x="5" y="3" width="1" height="1" fill="#c8d4e1"/><rect x="7" y="3" width="1" height="1" fill="#c8d4e1"/><rect x="9" y="3" width="1" height="1" fill="#c8d4e1"/><rect x="11" y="3" width="1" height="1" fill="#c8d4e1"/><rect x="13" y="3" width="1" height="1" fill="#c8d4e1"/><rect x="15" y="3" width="1" height="1" fill="#c8d4e1"/><rect x="17" y="3" width="1" height="1" fill="#c8d4e1"/><rect x="19" y="3" width="1" height="1" fill="#c8d4e1"/><rect x="0" y="4" width="1" height="1" fill="#c8d4e1"/><rect x="2" y="4" width="1" height="1" fill="#c8d4e1"/><rect x="4" y="4" width="1" height="1" fill="#c8d4e1"/><rect x="6" y="4" width="1" height="1" fill="#c8d4e1"/><rect x="8" y="4" width="1" height="1" fill="#c8d4e1"/><rect x="10" y="4" width="1" height="1" fill="#c8d4e1"/><rect x="12" y="4" width="1" height="1" fill="#c8d4e1"/><rect x="14" y="4" width="1" height="1" fill="#c8d4e1"/><rect x="16" y="4" width="1" height="1" fill="#c8d4e1"/><rect x="18" y="4" width="1" height="1" fill="#c8d4e1"/><rect x="20" y="4" width="1" height="1" fill="#c8d4e1"/><rect x="1" y="5" width="1" height="1" fill="#c8d4e1"/><rect x="3" y="5" width="1" height="1" fill="#c8d4e1"/><rect x="5" y="5" width="1" height="1" fill="#c8d4e1"/><rect x="7" y="5" width="1" height="1" fill="#c8d4e1"/><rect x="9" y="5" width="1" height="1" fill="#c8d4e1"/><rect x="11" y="5" width="1" height="1" fill="#c8d4e1"/><rect x="13" y="5" width="1" height="1" fill="#c8d4e1"/><rect x="15" y="5" width="1" height="1" fill="#c8d4e1"/><rect x="17" y="5" width="1" height="1" fill="#c8d4e1"/><rect x="19" y="5" width="1" height="1" fill="#c8d4e1"/><rect x="0" y="6" width="1" height="1" fill="#c8d4e1"/><rect x="2" y="6" width="1" height="1" fill="#c8d4e1"/><rect x="4" y="6" width="1" height="1" fill="#c8d4e1"/><rect x="6" y="6" width="1" height="1" fill="#c8d4e1"/><rect x="8" y="6" width="1" height="1" fill="#c8d4e1"/><rect x="10" y="6" width="1" height="1" fill="#c8d4e1"/><rect x="12" y="6" width="1" height="1" fill="#c8d4e1"/><rect x="14" y="6" width="1" height="1" fill="#c8d4e1"/><rect x="16" y="6" width="1" height="1" fill="#c8d4e1"/><rect x="18" y="6" width="1" height="1" fill="#c8d4e1"/><rect x="20" y="6" width="1" height="1" fill="#c8d4e1"/><rect x="1" y="7" width="1" height="1" fill="#c8d4e1"/><rect x="3" y="7" width="1" height="1" fill="#c8d4e1"/><rect x="5" y="7" width="1" height="1" fill="#c8d4e1"/><rect x="7" y="7" width="1" height="1" fill="#c8d4e1"/><rect x="9" y="7" width="1" height="1" fill="#c8d4e1"/><rect x="11" y="7" width="1" height="1" fill="#c8d4e1"/><rect x="13" y="7" width="1" height="1" fill="#c8d4e1"/><rect x="15" y="7" width="1" height="1" fill="#c8d4e1"/><rect x="17" y="7" width="1" height="1" fill="#c8d4e1"/><rect x="19" y="7" width="1" height="1" fill="#c8d4e1"/><rect x="0" y="8" width="1" height="1" fill="#c8d4e1"/><rect x="2" y="8" width="1" height="1" fill="#c8d4e1"/><rect x="4" y="8" width="1" height="1" fill="#c8d4e1"/><rect x="6" y="8" width="1" height="1" fill="#c8d4e1"/><rect x="8" y="8" width="1" height="1" fill="#c8d4e1"/><rect x="10" y="8" width="1" height="1" fill="#c8d4e1"/><rect x="12" y="8" width="1" height="1" fill="#c8d4e1"/><rect x="14" y="8" width="1" height="1" fill="#c8d4e1"/><rect x="16" y="8" width="1" height="1" fill="#c8d4e1"/><rect x="18" y="8" width="1" height="1" fill="#c8d4e1"/><rect x="20" y="8" width="1" height="1" fill="#c8d4e1"/><rect x="1" y="9" width="1" height="1" fill="#c8d4e1"/><rect x="3" y="9" width="1" height="1" fill="#c8d4e1"/><rect x="5" y="9" width="1" height="1" fill="#c8d4e1"/><rect x="7" y="9" width="1" height="1" fill="#c8d4e1"/><rect x="9" y="9" width="1" height="1" fill="#c8d4e1"/><rect x="11" y="9" width="1" height="1" fill="#c8d4e1"/><rect x="13" y="9" width="1" height="1" fill="#c8d4e1"/><rect x="15" y="9" width="1" height="1" fill="#c8d4e1"/><rect x="17" y="9" width="1" height="1" fill="#c8d4e1"/><rect x="19" y="9" width="1" height="1" fill="#c8d4e1"/><rect x="0" y="10" width="1" height="1" fill="#c8d4e1"/><rect x="2" y="10" width="1" height="1" fill="#c8d4e1"/><rect x="4" y="10" width="1" height="1" fill="#c8d4e1"/><rect x="6" y="10" width="1" height="1" fill="#c8d4e1"/><rect x="8" y="10" width="1" height="1" fill="#c8d4e1"/><rect x="10" y="10" width="1" height="1" fill="#c8d4e1"/><rect x="12" y="10" width="1" height="1" fill="#c8d4e1"/><rect x="14" y="10" width="1" height="1" fill="#c8d4e1"/><rect x="16" y="10" width="1" height="1" fill="#c8d4e1"/><rect x="18" y="10" width="1" height="1" fill="#c8d4e1"/><rect x="20" y="10" width="1" height="1" fill="#c8d4e1"/><rect x="1" y="11" width="1" height="1" fill="#c8d4e1"/><rect x="3" y="11" width="1" height="1" fill="#c8d4e1"/><rect x="5" y="11" width="1" height="1" fill="#c8d4e1"/><rect x="7" y="11" width="1" height="1" fill="#c8d4e1"/><rect x="9" y="11" width="1" height="1" fill="#c8d4e1"/><rect x="11" y="11" width="1" height="1" fill="#c8d4e1"/><rect x="13" y="11" width="1" height="1" fill="#c8d4e1"/><rect x="15" y="11" width="1" height="1" fill="#c8d4e1"/><rect x="17" y="11" width="1" height="1" fill="#c8d4e1"/><rect x="19" y="11" width="1" height="1" fill="#c8d4e1"/><rect x="0" y="12" width="1" height="1" fill="#c8d4e1"/><rect x="2" y="12" width="1" height="1" fill="#c8d4e1"/><rect x="4" y="12" width="1" height="1" fill="#c8d4e1"/><rect x="6" y="12" width="1" height="1" fill="#c8d4e1"/><rect x="8" y="12" width="1" height="1" fill="#c8d4e1"/><rect x="10" y="12" width="1" height="1" fill="#c8d4e1"/><rect x="12" y="12" width="1" height="1" fill="#c8d4e1"/><rect x="14" y="12" width="1" height="1" fill="#c8d4e1"/><rect x="16" y="12" width="1" height="1" fill="#c8d4e1"/><rect x="18" y="12" width="1" height="1" fill="#c8d4e1"/><rect x="20" y="12" width="1" height="1" fill="#c8d4e1"/><rect x="1" y="13" width="1" height="1" fill="#c8d4e1"/><rect x="3" y="13" width="1" height="1" fill="#c8d4e1"/><rect x="5" y="13" width="1" height="1" fill="#c8d4e1"/><rect x="7" y="13" width="1" height="1" fill="#c8d4e1"/><rect x="9" y="13" width="1" height="1" fill="#c8d4e1"/><rect x="11" y="13" width="1" height="1" fill="#c8d4e1"/><rect x="13" y="13" width="1" height="1" fill="#c8d4e1"/><rect x="15" y="13" width="1" height="1" fill="#c8d4e1"/><rect x="17" y="13" width="1" height="1" fill="#c8d4e1"/><rect x="19" y="13" width="1" height="1" fill="#c8d4e1"/><rect x="0" y="14" width="1" height="1" fill="#c8d4e1"/><rect x="2" y="14" width="1" height="1" fill="#c8d4e1"/><rect x="4" y="14" width="1" height="1" fill="#c8d4e1"/><rect x="6" y="14" width="1" height="1" fill="#c8d4e1"/><rect x="8" y="14" width="1" height="1" fill="#c8d4e1"/><rect x="10" y="14" width="1" height="1" fill="#c8d4e1"/><rect x="12" y="14" width="1" height="1" fill="#c8d4e1"/><rect x="14" y="14" width="1" height="1" fill="#c8d4e1"/><rect x="16" y="14" width="1" height="1" fill="#c8d4e1"/><rect x="18" y="14" width="1" height="1" fill="#c8d4e1"/><rect x="20" y="14" width="1" height="1" fill="#c8d4e1"/><rect x="1" y="15" width="1" height="1" fill="#c8d4e1"/><rect x="3" y="15" width="1" height="1" fill="#c8d4e1"/><rect x="5" y="15" width="1" height="1" fill="#c8d4e1"/><rect x="7" y="15" width="1" height="1" fill="#c8d4e1"/><rect x="9" y="15" width="1" height="1" fill="#c8d4e1"/><rect x="11" y="15" width="1" height="1" fill="#c8d4e1"/><rect x="13" y="15" width="1" height="1" fill="#c8d4e1"/><rect x="15" y="15" width="1" height="1" fill="#c8d4e1"/><rect x="17" y="15" width="1" height="1" fill="#c8d4e1"/><rect x="19" y="15" width="1" height="1" fill="#c8d4e1"/><rect x="0" y="16" width="1" height="1" fill="#c8d4e1"/><rect x="2" y="16" width="1" height="1" fill="#c8d4e1"/><rect x="4" y="16" width="1" height="1" fill="#c8d4e1"/><rect x="6" y="16" width="1" height="1" fill="#c8d4e1"/><rect x="8" y="16" width="1" height="1" fill="#c8d4e1"/><rect x="10" y="16" width="1" height="1" fill="#c8d4e1"/><rect x="12" y="16" width="1" height="1" fill="#c8d4e1"/><rect x="14" y="16" width="1" height="1" fill="#c8d4e1"/><rect x="16" y="16" width="1" height="1" fill="#c8d4e1"/><rect x="18" y="16" width="1" height="1" fill="#c8d4e1"/><rect x="20" y="16" width="1" height="1" fill="#c8d4e1"/><rect x="1" y="17" width="1" height="1" fill="#c8d4e1"/><rect x="3" y="17" width="1" height="1" fill="#c8d4e1"/><rect x="5" y="17" width="1" height="1" fill="#c8d4e1"/><rect x="7" y="17" width="1" height="1" fill="#c8d4e1"/><rect x="9" y="17" width="1" height="1" fill="#c8d4e1"/><rect x="11" y="17" width="1" height="1" fill="#c8d4e1"/><rect x="13" y="17" width="1" height="1" fill="#c8d4e1"/><rect x="15" y="17" width="1" height="1" fill="#c8d4e1"/><rect x="17" y="17" width="1" height="1" fill="#c8d4e1"/><rect x="19" y="17" width="1" height="1" fill="#c8d4e1"/><rect x="0" y="18" width="1" height="1" fill="#c8d4e1"/><rect x="2" y="18" width="1" height="1" fill="#c8d4e1"/><rect x="4" y="18" width="1" height="1" fill="#c8d4e1"/><rect x="6" y="18" width="1" height="1" fill="#c8d4e1"/><rect x="8" y="18" width="1" height="1" fill="#c8d4e1"/><rect x="10" y="18" width="1" height="1" fill="#c8d4e1"/><rect x="12" y="18" width="1" height="1" fill="#c8d4e1"/><rect x="14" y="18" width="1" height="1" fill="#c8d4e1"/><rect x="16" y="18" width="1" height="1" fill="#c8d4e1"/><rect x="18" y="18" width="1" height="1" fill="#c8d4e1"/><rect x="20" y="18" width="1" height="1" fill="#c8d4e1"/><rect x="1" y="19" width="1" height="1" fill="#c8d4e1"/><rect x="3" y="19" width="1" height="1" fill="#c8d4e1"/><rect x="5" y="19" width="1" height="1" fill="#c8d4e1"/><rect x="7" y="19" width="1" height="1" fill="#c8d4e1"/><rect x="9" y="19" width="1" height="1" fill="#c8d4e1"/><rect x="11" y="19" width="1" height="1" fill="#c8d4e1"/><rect x="13" y="19" width="1" height="1" fill="#c8d4e1"/><rect x="15" y="19" width="1" height="1" fill="#c8d4e1"/><rect x="17" y="19" width="1" height="1" fill="#c8d4e1"/><rect x="19" y="19" width="1" height="1" fill="#c8d4e1"/></svg><svg class="a" style="left:766px;top:44px" width="23" height="22" shape-rendering="crispEdges"><rect x="0" y="0" width="23" height="1" fill="#50637c"/><rect x="0" y="1" width="1" height="1" fill="#50637c"/><rect x="22" y="1" width="1" height="1" fill="#c8d4e1"/><rect x="0" y="2" width="1" height="1" fill="#50637c"/><rect x="22" y="2" width="1" height="1" fill="#c8d4e1"/><rect x="0" y="3" width="1" height="1" fill="#50637c"/><rect x="22" y="3" width="1" height="1" fill="#c8d4e1"/><rect x="0" y="4" width="1" height="1" fill="#50637c"/><rect x="22" y="4" width="1" height="1" fill="#c8d4e1"/><rect x="0" y="5" width="1" height="1" fill="#50637c"/><rect x="22" y="5" width="1" height="1" fill="#c8d4e1"/><rect x="0" y="6" width="1" height="1" fill="#50637c"/><rect x="22" y="6" width="1" height="1" fill="#c8d4e1"/><rect x="0" y="7" width="1" height="1" fill="#50637c"/><rect x="22" y="7" width="1" height="1" fill="#c8d4e1"/><rect x="0" y="8" width="1" height="1" fill="#50637c"/><rect x="22" y="8" width="1" height="1" fill="#c8d4e1"/><rect x="0" y="9" width="1" height="1" fill="#50637c"/><rect x="22" y="9" width="1" height="1" fill="#c8d4e1"/><rect x="0" y="10" width="1" height="1" fill="#50637c"/><rect x="22" y="10" width="1" height="1" fill="#c8d4e1"/><rect x="0" y="11" width="1" height="1" fill="#50637c"/><rect x="22" y="11" width="1" height="1" fill="#c8d4e1"/><rect x="0" y="12" width="1" height="1" fill="#50637c"/><rect x="22" y="12" width="1" height="1" fill="#c8d4e1"/><rect x="0" y="13" width="1" height="1" fill="#50637c"/><rect x="22" y="13" width="1" height="1" fill="#c8d4e1"/><rect x="0" y="14" width="1" height="1" fill="#50637c"/><rect x="22" y="14" width="1" height="1" fill="#c8d4e1"/><rect x="0" y="15" width="1" height="1" fill="#50637c"/><rect x="22" y="15" width="1" height="1" fill="#c8d4e1"/><rect x="0" y="16" width="1" height="1" fill="#50637c"/><rect x="22" y="16" width="1" height="1" fill="#c8d4e1"/><rect x="0" y="17" width="1" height="1" fill="#50637c"/><rect x="22" y="17" width="1" height="1" fill="#c8d4e1"/><rect x="0" y="18" width="1" height="1" fill="#50637c"/><rect x="22" y="18" width="1" height="1" fill="#c8d4e1"/><rect x="0" y="19" width="1" height="1" fill="#50637c"/><rect x="22" y="19" width="1" height="1" fill="#c8d4e1"/><rect x="0" y="20" width="1" height="1" fill="#50637c"/><rect x="22" y="20" width="1" height="1" fill="#c8d4e1"/><rect x="0" y="21" width="23" height="1" fill="#c8d4e1"/></svg><svg class="a" style="left:770px;top:50px" width="14" height="11" shape-rendering="crispEdges"><rect x="0" y="0" width="14" height="1" fill="#000000"/><rect x="2" y="2" width="10" height="1" fill="#000000"/><rect x="0" y="4" width="14" height="1" fill="#000000"/><rect x="2" y="6" width="10" height="1" fill="#000000"/><rect x="0" y="8" width="14" height="1" fill="#000000"/><rect x="2" y="10" width="10" height="1" fill="#000000"/></svg><svg class="a" style="left:792px;top:49px" width="14" height="11" shape-rendering="crispEdges"><rect x="0" y="0" width="14" height="1" fill="#000000"/><rect x="4" y="2" width="10" height="1" fill="#000000"/><rect x="0" y="4" width="14" height="1" fill="#000000"/><rect x="4" y="6" width="10" height="1" fill="#000000"/><rect x="0" y="8" width="14" height="1" fill="#000000"/><rect x="4" y="10" width="10" height="1" fill="#000000"/></svg><svg class="a" style="left:815px;top:47px" width="16" height="15" shape-rendering="crispEdges"><rect x="0" y="0" width="16" height="1" fill="#000000"/><rect x="0" y="1" width="1" height="1" fill="#000000"/><rect x="1" y="1" width="6" height="1" fill="#ffffff"/><rect x="7" y="1" width="1" height="1" fill="#000000"/><rect x="8" y="1" width="7" height="1" fill="#ffffff"/><rect x="15" y="1" width="1" height="1" fill="#000000"/><rect x="0" y="2" width="1" height="1" fill="#000000"/><rect x="1" y="2" width="6" height="1" fill="#ffffff"/><rect x="7" y="2" width="1" height="1" fill="#000000"/><rect x="8" y="2" width="7" height="1" fill="#ffffff"/><rect x="15" y="2" width="1" height="1" fill="#000000"/><rect x="0" y="3" width="16" height="1" fill="#000000"/><rect x="0" y="4" width="1" height="1" fill="#000000"/><rect x="1" y="4" width="14" height="1" fill="#ffffff"/><rect x="15" y="4" width="1" height="1" fill="#000000"/><rect x="0" y="5" width="1" height="1" fill="#000000"/><rect x="1" y="5" width="1" height="1" fill="#ffffff"/><rect x="2" y="5" width="1" height="1" fill="#000000"/><rect x="3" y="5" width="4" height="1" fill="#ffffff"/><rect x="7" y="5" width="3" height="1" fill="#000000"/><rect x="10" y="5" width="3" height="1" fill="#ffffff"/><rect x="13" y="5" width="1" height="1" fill="#000000"/><rect x="14" y="5" width="1" height="1" fill="#ffffff"/><rect x="15" y="5" width="1" height="1" fill="#000000"/><rect x="0" y="6" width="3" height="1" fill="#000000"/><rect x="3" y="6" width="7" height="1" fill="#ffffff"/><rect x="10" y="6" width="1" height="1" fill="#000000"/><rect x="11" y="6" width="2" height="1" fill="#ffffff"/><rect x="13" y="6" width="3" height="1" fill="#000000"/><rect x="0" y="7" width="5" height="1" fill="#000000"/><rect x="5" y="7" width="2" height="1" fill="#ffffff"/><rect x="7" y="7" width="9" height="1" fill="#000000"/><rect x="0" y="8" width="3" height="1" fill="#000000"/><rect x="3" y="8" width="3" height="1" fill="#ffffff"/><rect x="6" y="8" width="1" height="1" fill="#000000"/><rect x="7" y="8" width="3" height="1" fill="#ffffff"/><rect x="10" y="8" width="1" height="1" fill="#000000"/><rect x="11" y="8" width="2" height="1" fill="#ffffff"/><rect x="13" y="8" width="3" height="1" fill="#000000"/><rect x="0" y="9" width="1" height="1" fill="#000000"/><rect x="1" y="9" width="1" height="1" fill="#ffffff"/><rect x="2" y="9" width="1" height="1" fill="#000000"/><rect x="3" y="9" width="4" height="1" fill="#ffffff"/><rect x="7" y="9" width="4" height="1" fill="#000000"/><rect x="11" y="9" width="2" height="1" fill="#ffffff"/><rect x="13" y="9" width="1" height="1" fill="#000000"/><rect x="14" y="9" width="1" height="1" fill="#ffffff"/><rect x="15" y="9" width="1" height="1" fill="#000000"/><rect x="0" y="10" width="1" height="1" fill="#000000"/><rect x="1" y="10" width="14" height="1" fill="#ffffff"/><rect x="15" y="10" width="1" height="1" fill="#000000"/><rect x="0" y="11" width="16" height="1" fill="#000000"/><rect x="0" y="12" width="1" height="1" fill="#000000"/><rect x="1" y="12" width="6" height="1" fill="#ffffff"/><rect x="7" y="12" width="1" height="1" fill="#000000"/><rect x="8" y="12" width="7" height="1" fill="#ffffff"/><rect x="15" y="12" width="1" height="1" fill="#000000"/><rect x="0" y="13" width="1" height="1" fill="#000000"/><rect x="1" y="13" width="6" height="1" fill="#ffffff"/><rect x="7" y="13" width="1" height="1" fill="#000000"/><rect x="8" y="13" width="7" height="1" fill="#ffffff"/><rect x="15" y="13" width="1" height="1" fill="#000000"/><rect x="0" y="14" width="16" height="1" fill="#000000"/></svg><svg class="a" style="left:845px;top:48px" width="14" height="13" shape-rendering="crispEdges"><rect x="2" y="0" width="1" height="1" fill="#000080"/><rect x="11" y="0" width="2" height="1" fill="#000000"/><rect x="1" y="1" width="2" height="1" fill="#000080"/><rect x="10" y="1" width="1" height="1" fill="#000000"/><rect x="13" y="1" width="1" height="1" fill="#000000"/><rect x="0" y="2" width="5" height="1" fill="#000080"/><rect x="10" y="2" width="1" height="1" fill="#000000"/><rect x="13" y="2" width="1" height="1" fill="#000000"/><rect x="1" y="3" width="2" height="1" fill="#000080"/><rect x="10" y="3" width="1" height="1" fill="#000000"/><rect x="13" y="3" width="1" height="1" fill="#000000"/><rect x="2" y="4" width="1" height="1" fill="#000080"/><rect x="7" y="4" width="2" height="1" fill="#000000"/><rect x="10" y="4" width="1" height="1" fill="#000000"/><rect x="13" y="4" width="1" height="1" fill="#000000"/><rect x="7" y="5" width="2" height="1" fill="#000000"/><rect x="11" y="5" width="2" height="1" fill="#000000"/><rect x="6" y="7" width="2" height="1" fill="#000000"/><rect x="11" y="7" width="2" height="1" fill="#000000"/><rect x="5" y="8" width="1" height="1" fill="#000000"/><rect x="8" y="8" width="1" height="1" fill="#000000"/><rect x="10" y="8" width="1" height="1" fill="#000000"/><rect x="13" y="8" width="1" height="1" fill="#000000"/><rect x="5" y="9" width="1" height="1" fill="#000000"/><rect x="8" y="9" width="1" height="1" fill="#000000"/><rect x="10" y="9" width="1" height="1" fill="#000000"/><rect x="13" y="9" width="1" height="1" fill="#000000"/><rect x="5" y="10" width="1" height="1" fill="#000000"/><rect x="8" y="10" width="1" height="1" fill="#000000"/><rect x="10" y="10" width="1" height="1" fill="#000000"/><rect x="13" y="10" width="1" height="1" fill="#000000"/><rect x="2" y="11" width="2" height="1" fill="#000000"/><rect x="5" y="11" width="1" height="1" fill="#000000"/><rect x="8" y="11" width="1" height="1" fill="#000000"/><rect x="10" y="11" width="1" height="1" fill="#000000"/><rect x="13" y="11" width="1" height="1" fill="#000000"/><rect x="2" y="12" width="2" height="1" fill="#000000"/><rect x="6" y="12" width="2" height="1" fill="#000000"/><rect x="11" y="12" width="2" height="1" fill="#000000"/></svg><svg class="a" style="left:867px;top:48px" width="15" height="13" shape-rendering="crispEdges"><rect x="7" y="0" width="2" height="1" fill="#000000"/><rect x="12" y="0" width="2" height="1" fill="#000000"/><rect x="6" y="1" width="1" height="1" fill="#000000"/><rect x="9" y="1" width="1" height="1" fill="#000000"/><rect x="11" y="1" width="1" height="1" fill="#000000"/><rect x="14" y="1" width="1" height="1" fill="#000000"/><rect x="6" y="2" width="1" height="1" fill="#000000"/><rect x="9" y="2" width="1" height="1" fill="#000000"/><rect x="11" y="2" width="1" height="1" fill="#000000"/><rect x="14" y="2" width="1" height="1" fill="#000000"/><rect x="6" y="3" width="1" height="1" fill="#000000"/><rect x="9" y="3" width="1" height="1" fill="#000000"/><rect x="11" y="3" width="1" height="1" fill="#000000"/><rect x="14" y="3" width="1" height="1" fill="#000000"/><rect x="3" y="4" width="2" height="1" fill="#000000"/><rect x="6" y="4" width="1" height="1" fill="#000000"/><rect x="9" y="4" width="1" height="1" fill="#000000"/><rect x="11" y="4" width="1" height="1" fill="#000000"/><rect x="14" y="4" width="1" height="1" fill="#000000"/><rect x="3" y="5" width="2" height="1" fill="#000000"/><rect x="7" y="5" width="2" height="1" fill="#000000"/><rect x="12" y="5" width="2" height="1" fill="#000000"/><rect x="12" y="7" width="2" height="1" fill="#000000"/><rect x="2" y="8" width="1" height="1" fill="#000080"/><rect x="11" y="8" width="1" height="1" fill="#000000"/><rect x="14" y="8" width="1" height="1" fill="#000000"/><rect x="2" y="9" width="2" height="1" fill="#000080"/><rect x="11" y="9" width="1" height="1" fill="#000000"/><rect x="14" y="9" width="1" height="1" fill="#000000"/><rect x="0" y="10" width="5" height="1" fill="#000080"/><rect x="11" y="10" width="1" height="1" fill="#000000"/><rect x="14" y="10" width="1" height="1" fill="#000000"/><rect x="2" y="11" width="2" height="1" fill="#000080"/><rect x="8" y="11" width="2" height="1" fill="#000000"/><rect x="11" y="11" width="1" height="1" fill="#000000"/><rect x="14" y="11" width="1" height="1" fill="#000000"/><rect x="2" y="12" width="1" height="1" fill="#000080"/><rect x="8" y="12" width="2" height="1" fill="#000000"/><rect x="12" y="12" width="2" height="1" fill="#000000"/></svg><svg class="a" style="left:898px;top:49px" width="14" height="13" shape-rendering="crispEdges"><rect x="0" y="0" width="1" height="1" fill="#9c8a70"/><rect x="2" y="0" width="1" height="1" fill="#9c8a70"/><rect x="4" y="0" width="1" height="1" fill="#9c8a70"/><rect x="6" y="0" width="1" height="1" fill="#9c8a70"/><rect x="8" y="0" width="1" height="1" fill="#9c8a70"/><rect x="10" y="0" width="1" height="1" fill="#9c8a70"/><rect x="12" y="0" width="1" height="1" fill="#9c8a70"/><rect x="0" y="2" width="1" height="1" fill="#9c8a70"/><rect x="6" y="2" width="1" height="1" fill="#9c8a70"/><rect x="12" y="2" width="1" height="1" fill="#9c8a70"/><rect x="0" y="4" width="1" height="1" fill="#9c8a70"/><rect x="6" y="4" width="1" height="1" fill="#9c8a70"/><rect x="12" y="4" width="1" height="1" fill="#9c8a70"/><rect x="0" y="6" width="1" height="1" fill="#9c8a70"/><rect x="2" y="6" width="1" height="1" fill="#9c8a70"/><rect x="4" y="6" width="1" height="1" fill="#9c8a70"/><rect x="6" y="6" width="1" height="1" fill="#9c8a70"/><rect x="8" y="6" width="1" height="1" fill="#9c8a70"/><rect x="10" y="6" width="1" height="1" fill="#9c8a70"/><rect x="12" y="6" width="1" height="1" fill="#9c8a70"/><rect x="0" y="8" width="1" height="1" fill="#9c8a70"/><rect x="6" y="8" width="1" height="1" fill="#9c8a70"/><rect x="12" y="8" width="1" height="1" fill="#9c8a70"/><rect x="0" y="10" width="1" height="1" fill="#9c8a70"/><rect x="6" y="10" width="1" height="1" fill="#9c8a70"/><rect x="12" y="10" width="1" height="1" fill="#9c8a70"/><rect x="0" y="12" width="14" height="1" fill="#000000"/></svg><svg class="a" style="left:918px;top:54px" width="5" height="3" shape-rendering="crispEdges"><rect x="0" y="0" width="5" height="1" fill="#000000"/><rect x="1" y="1" width="3" height="1" fill="#000000"/><rect x="2" y="2" width="1" height="1" fill="#000000"/></svg><svg class="a" style="left:930px;top:47px" width="16" height="16" shape-rendering="crispEdges"><rect x="6" y="0" width="2" height="1" fill="#000080"/><rect x="5" y="1" width="1" height="1" fill="#000080"/><rect x="8" y="1" width="1" height="1" fill="#000080"/><rect x="5" y="2" width="1" height="1" fill="#000080"/><rect x="6" y="2" width="2" height="1" fill="#000000"/><rect x="8" y="2" width="1" height="1" fill="#000080"/><rect x="9" y="2" width="1" height="1" fill="#000000"/><rect x="4" y="3" width="1" height="1" fill="#000000"/><rect x="5" y="3" width="1" height="1" fill="#ffffff"/><rect x="6" y="3" width="1" height="1" fill="#000080"/><rect x="7" y="3" width="1" height="1" fill="#c0c0c0"/><rect x="8" y="3" width="1" height="1" fill="#ffffff"/><rect x="9" y="3" width="1" height="1" fill="#000000"/><rect x="10" y="3" width="2" height="1" fill="#000080"/><rect x="3" y="4" width="1" height="1" fill="#000000"/><rect x="4" y="4" width="2" height="1" fill="#ffffff"/><rect x="6" y="4" width="1" height="1" fill="#000080"/><rect x="7" y="4" width="2" height="1" fill="#c0c0c0"/><rect x="9" y="4" width="1" height="1" fill="#ffffff"/><rect x="10" y="4" width="1" height="1" fill="#000000"/><rect x="11" y="4" width="2" height="1" fill="#000080"/><rect x="2" y="5" width="1" height="1" fill="#000000"/><rect x="3" y="5" width="2" height="1" fill="#ffffff"/><rect x="5" y="5" width="3" height="1" fill="#000080"/><rect x="8" y="5" width="2" height="1" fill="#c0c0c0"/><rect x="10" y="5" width="1" height="1" fill="#ffffff"/><rect x="11" y="5" width="1" height="1" fill="#000000"/><rect x="12" y="5" width="2" height="1" fill="#000080"/><rect x="1" y="6" width="1" height="1" fill="#000000"/><rect x="2" y="6" width="4" height="1" fill="#ffffff"/><rect x="6" y="6" width="1" height="1" fill="#000080"/><rect x="7" y="6" width="4" height="1" fill="#c0c0c0"/><rect x="11" y="6" width="1" height="1" fill="#000000"/><rect x="12" y="6" width="2" height="1" fill="#000080"/><rect x="2" y="7" width="1" height="1" fill="#000000"/><rect x="3" y="7" width="4" height="1" fill="#ffffff"/><rect x="7" y="7" width="3" height="1" fill="#c0c0c0"/><rect x="10" y="7" width="1" height="1" fill="#000000"/><rect x="11" y="7" width="3" height="1" fill="#000080"/><rect x="3" y="8" width="1" height="1" fill="#000000"/><rect x="4" y="8" width="3" height="1" fill="#ffffff"/><rect x="7" y="8" width="2" height="1" fill="#c0c0c0"/><rect x="9" y="8" width="1" height="1" fill="#000000"/><rect x="12" y="8" width="2" height="1" fill="#000080"/><rect x="4" y="9" width="1" height="1" fill="#000000"/><rect x="5" y="9" width="2" height="1" fill="#ffffff"/><rect x="7" y="9" width="1" height="1" fill="#c0c0c0"/><rect x="8" y="9" width="1" height="1" fill="#000000"/><rect x="12" y="9" width="1" height="1" fill="#000080"/><rect x="5" y="10" width="1" height="1" fill="#000000"/><rect x="6" y="10" width="1" height="1" fill="#ffffff"/><rect x="7" y="10" width="1" height="1" fill="#000000"/><rect x="6" y="11" width="1" height="1" fill="#000000"/><rect x="0" y="12" width="16" height="1" fill="#ffff00"/><rect x="0" y="13" width="16" height="1" fill="#ffff00"/><rect x="0" y="14" width="16" height="1" fill="#ffff00"/><rect x="0" y="15" width="16" height="1" fill="#ffff00"/></svg><svg class="a" style="left:952px;top:54px" width="5" height="3" shape-rendering="crispEdges"><rect x="0" y="0" width="5" height="1" fill="#000000"/><rect x="1" y="1" width="3" height="1" fill="#000000"/><rect x="2" y="2" width="1" height="1" fill="#000000"/></svg><svg class="a" style="left:964px;top:47px" width="16" height="16" shape-rendering="crispEdges"><rect x="6" y="0" width="1" height="1" fill="#000080"/><rect x="5" y="1" width="3" height="1" fill="#000080"/><rect x="5" y="2" width="3" height="1" fill="#000080"/><rect x="4" y="3" width="2" height="1" fill="#000080"/><rect x="7" y="3" width="2" height="1" fill="#000080"/><rect x="4" y="4" width="2" height="1" fill="#000080"/><rect x="7" y="4" width="2" height="1" fill="#000080"/><rect x="3" y="5" width="2" height="1" fill="#000080"/><rect x="8" y="5" width="2" height="1" fill="#000080"/><rect x="3" y="6" width="7" height="1" fill="#000080"/><rect x="2" y="7" width="2" height="1" fill="#000080"/><rect x="9" y="7" width="2" height="1" fill="#000080"/><rect x="2" y="8" width="2" height="1" fill="#000080"/><rect x="9" y="8" width="2" height="1" fill="#000080"/><rect x="1" y="9" width="2" height="1" fill="#000080"/><rect x="10" y="9" width="2" height="1" fill="#000080"/><rect x="0" y="10" width="4" height="1" fill="#000080"/><rect x="9" y="10" width="4" height="1" fill="#000080"/><rect x="0" y="12" width="16" height="1" fill="#ff0000"/><rect x="0" y="13" width="16" height="1" fill="#ff0000"/><rect x="0" y="14" width="16" height="1" fill="#ff0000"/><rect x="0" y="15" width="16" height="1" fill="#ff0000"/></svg><svg class="a" style="left:986px;top:54px" width="5" height="3" shape-rendering="crispEdges"><rect x="0" y="0" width="5" height="1" fill="#000000"/><rect x="1" y="1" width="3" height="1" fill="#000000"/><rect x="2" y="2" width="1" height="1" fill="#000000"/></svg><svg class="a" style="left:1014px;top:48px" width="8" height="5" shape-rendering="crispEdges"><rect x="0" y="0" width="2" height="1" fill="#000000"/><rect x="4" y="0" width="2" height="1" fill="#000000"/><rect x="1" y="1" width="2" height="1" fill="#000000"/><rect x="5" y="1" width="2" height="1" fill="#000000"/><rect x="2" y="2" width="2" height="1" fill="#000000"/><rect x="6" y="2" width="2" height="1" fill="#000000"/><rect x="1" y="3" width="2" height="1" fill="#000000"/><rect x="5" y="3" width="2" height="1" fill="#000000"/><rect x="0" y="4" width="2" height="1" fill="#000000"/><rect x="4" y="4" width="2" height="1" fill="#000000"/></svg><svg class="a" style="left:1015px;top:58px" width="5" height="3" shape-rendering="crispEdges"><rect x="0" y="0" width="5" height="1" fill="#000000"/><rect x="1" y="1" width="3" height="1" fill="#000000"/><rect x="2" y="2" width="1" height="1" fill="#000000"/></svg>
<svg class="a" style="left:145px;top:75px" width="14" height="14" shape-rendering="crispEdges"><rect x="9" y="0" width="5" height="1" fill="#c8d4e1"/><rect x="6" y="1" width="2" height="1" fill="#c8d4e1"/><rect x="9" y="1" width="1" height="1" fill="#c8d4e1"/><rect x="12" y="1" width="2" height="1" fill="#c8d4e1"/><rect x="5" y="2" width="1" height="1" fill="#c8d4e1"/><rect x="7" y="2" width="2" height="1" fill="#c8d4e1"/><rect x="12" y="2" width="2" height="1" fill="#c8d4e1"/><rect x="0" y="3" width="5" height="1" fill="#c8d4e1"/><rect x="6" y="3" width="1" height="1" fill="#c8d4e1"/><rect x="8" y="3" width="2" height="1" fill="#c8d4e1"/><rect x="11" y="3" width="1" height="1" fill="#c8d4e1"/><rect x="13" y="3" width="1" height="1" fill="#c8d4e1"/><rect x="0" y="4" width="1" height="1" fill="#c8d4e1"/><rect x="3" y="4" width="1" height="1" fill="#c8d4e1"/><rect x="5" y="4" width="1" height="1" fill="#c8d4e1"/><rect x="7" y="4" width="1" height="1" fill="#c8d4e1"/><rect x="9" y="4" width="2" height="1" fill="#c8d4e1"/><rect x="0" y="5" width="1" height="1" fill="#c8d4e1"/><rect x="2" y="5" width="1" height="1" fill="#c8d4e1"/><rect x="4" y="5" width="1" height="1" fill="#c8d4e1"/><rect x="6" y="5" width="1" height="1" fill="#c8d4e1"/><rect x="8" y="5" width="1" height="1" fill="#c8d4e1"/><rect x="10" y="5" width="1" height="1" fill="#c8d4e1"/><rect x="0" y="6" width="1" height="1" fill="#c8d4e1"/><rect x="3" y="6" width="1" height="1" fill="#c8d4e1"/><rect x="5" y="6" width="1" height="1" fill="#c8d4e1"/><rect x="7" y="6" width="1" height="1" fill="#c8d4e1"/><rect x="10" y="6" width="1" height="1" fill="#c8d4e1"/><rect x="0" y="7" width="1" height="1" fill="#c8d4e1"/><rect x="10" y="7" width="1" height="1" fill="#c8d4e1"/><rect x="0" y="8" width="11" height="1" fill="#c8d4e1"/><rect x="0" y="9" width="1" height="1" fill="#c8d4e1"/><rect x="2" y="9" width="2" height="1" fill="#c8d4e1"/><rect x="10" y="9" width="1" height="1" fill="#c8d4e1"/><rect x="0" y="10" width="1" height="1" fill="#c8d4e1"/><rect x="10" y="10" width="1" height="1" fill="#c8d4e1"/><rect x="0" y="11" width="1" height="1" fill="#c8d4e1"/><rect x="2" y="11" width="2" height="1" fill="#c8d4e1"/><rect x="5" y="11" width="4" height="1" fill="#c8d4e1"/><rect x="10" y="11" width="1" height="1" fill="#c8d4e1"/><rect x="0" y="12" width="1" height="1" fill="#c8d4e1"/><rect x="10" y="12" width="1" height="1" fill="#c8d4e1"/><rect x="0" y="13" width="11" height="1" fill="#c8d4e1"/></svg><svg class="a" style="left:144px;top:74px" width="14" height="14" shape-rendering="crispEdges"><rect x="9" y="0" width="5" height="1" fill="#50637c"/><rect x="6" y="1" width="2" height="1" fill="#50637c"/><rect x="9" y="1" width="1" height="1" fill="#50637c"/><rect x="12" y="1" width="2" height="1" fill="#50637c"/><rect x="5" y="2" width="1" height="1" fill="#50637c"/><rect x="7" y="2" width="2" height="1" fill="#50637c"/><rect x="12" y="2" width="2" height="1" fill="#50637c"/><rect x="0" y="3" width="5" height="1" fill="#50637c"/><rect x="6" y="3" width="1" height="1" fill="#50637c"/><rect x="8" y="3" width="2" height="1" fill="#50637c"/><rect x="11" y="3" width="1" height="1" fill="#50637c"/><rect x="13" y="3" width="1" height="1" fill="#50637c"/><rect x="0" y="4" width="1" height="1" fill="#50637c"/><rect x="3" y="4" width="1" height="1" fill="#50637c"/><rect x="5" y="4" width="1" height="1" fill="#50637c"/><rect x="7" y="4" width="1" height="1" fill="#50637c"/><rect x="9" y="4" width="2" height="1" fill="#50637c"/><rect x="0" y="5" width="1" height="1" fill="#50637c"/><rect x="2" y="5" width="1" height="1" fill="#50637c"/><rect x="4" y="5" width="1" height="1" fill="#50637c"/><rect x="6" y="5" width="1" height="1" fill="#50637c"/><rect x="8" y="5" width="1" height="1" fill="#50637c"/><rect x="10" y="5" width="1" height="1" fill="#50637c"/><rect x="0" y="6" width="1" height="1" fill="#50637c"/><rect x="3" y="6" width="1" height="1" fill="#50637c"/><rect x="5" y="6" width="1" height="1" fill="#50637c"/><rect x="7" y="6" width="1" height="1" fill="#50637c"/><rect x="10" y="6" width="1" height="1" fill="#50637c"/><rect x="0" y="7" width="1" height="1" fill="#50637c"/><rect x="10" y="7" width="1" height="1" fill="#50637c"/><rect x="0" y="8" width="11" height="1" fill="#50637c"/><rect x="0" y="9" width="1" height="1" fill="#50637c"/><rect x="2" y="9" width="2" height="1" fill="#50637c"/><rect x="10" y="9" width="1" height="1" fill="#50637c"/><rect x="0" y="10" width="1" height="1" fill="#50637c"/><rect x="10" y="10" width="1" height="1" fill="#50637c"/><rect x="0" y="11" width="1" height="1" fill="#50637c"/><rect x="2" y="11" width="2" height="1" fill="#50637c"/><rect x="5" y="11" width="4" height="1" fill="#50637c"/><rect x="10" y="11" width="1" height="1" fill="#50637c"/><rect x="0" y="12" width="1" height="1" fill="#50637c"/><rect x="10" y="12" width="1" height="1" fill="#50637c"/><rect x="0" y="13" width="11" height="1" fill="#50637c"/></svg><svg class="a" style="left:173px;top:74px" width="15" height="14" shape-rendering="crispEdges"><rect x="0" y="0" width="1" height="1" fill="#000000"/><rect x="0" y="1" width="1" height="1" fill="#000000"/><rect x="1" y="1" width="1" height="1" fill="#a0205a"/><rect x="11" y="1" width="1" height="1" fill="#000000"/><rect x="0" y="2" width="1" height="1" fill="#000000"/><rect x="1" y="2" width="2" height="1" fill="#a0205a"/><rect x="10" y="2" width="1" height="1" fill="#000000"/><rect x="11" y="2" width="1" height="1" fill="#a0205a"/><rect x="12" y="2" width="1" height="1" fill="#000000"/><rect x="0" y="3" width="1" height="1" fill="#000000"/><rect x="1" y="3" width="3" height="1" fill="#a0205a"/><rect x="9" y="3" width="1" height="1" fill="#000000"/><rect x="10" y="3" width="3" height="1" fill="#a0205a"/><rect x="13" y="3" width="1" height="1" fill="#000000"/><rect x="0" y="4" width="1" height="1" fill="#000000"/><rect x="1" y="4" width="3" height="1" fill="#a0205a"/><rect x="4" y="4" width="1" height="1" fill="#000000"/><rect x="8" y="4" width="1" height="1" fill="#000000"/><rect x="9" y="4" width="5" height="1" fill="#a0205a"/><rect x="14" y="4" width="1" height="1" fill="#000000"/><rect x="0" y="5" width="1" height="1" fill="#000000"/><rect x="1" y="5" width="4" height="1" fill="#a0205a"/><rect x="5" y="5" width="1" height="1" fill="#000000"/><rect x="7" y="5" width="1" height="1" fill="#000000"/><rect x="8" y="5" width="6" height="1" fill="#a0205a"/><rect x="14" y="5" width="1" height="1" fill="#000000"/><rect x="0" y="6" width="1" height="1" fill="#000000"/><rect x="1" y="6" width="5" height="1" fill="#a0205a"/><rect x="6" y="6" width="1" height="1" fill="#000000"/><rect x="7" y="6" width="4" height="1" fill="#a0205a"/><rect x="11" y="6" width="1" height="1" fill="#0000ff"/><rect x="12" y="6" width="2" height="1" fill="#a0205a"/><rect x="14" y="6" width="1" height="1" fill="#000000"/><rect x="0" y="7" width="1" height="1" fill="#000000"/><rect x="1" y="7" width="1" height="1" fill="#0000ff"/><rect x="2" y="7" width="8" height="1" fill="#a0205a"/><rect x="10" y="7" width="3" height="1" fill="#0000ff"/><rect x="13" y="7" width="1" height="1" fill="#a0205a"/><rect x="14" y="7" width="1" height="1" fill="#000000"/><rect x="0" y="8" width="1" height="1" fill="#000000"/><rect x="1" y="8" width="2" height="1" fill="#0000ff"/><rect x="3" y="8" width="6" height="1" fill="#a0205a"/><rect x="9" y="8" width="5" height="1" fill="#0000ff"/><rect x="14" y="8" width="1" height="1" fill="#a0205a"/><rect x="0" y="9" width="1" height="1" fill="#000000"/><rect x="1" y="9" width="4" height="1" fill="#0000ff"/><rect x="5" y="9" width="3" height="1" fill="#a0205a"/><rect x="8" y="9" width="7" height="1" fill="#0000ff"/><rect x="0" y="10" width="1" height="1" fill="#000000"/><rect x="1" y="10" width="5" height="1" fill="#0000ff"/><rect x="6" y="10" width="1" height="1" fill="#a0205a"/><rect x="7" y="10" width="8" height="1" fill="#0000ff"/><rect x="0" y="11" width="1" height="1" fill="#000000"/><rect x="1" y="11" width="14" height="1" fill="#0000ff"/><rect x="0" y="12" width="1" height="1" fill="#000000"/><rect x="1" y="12" width="14" height="1" fill="#0000ff"/><rect x="0" y="13" width="15" height="1" fill="#000000"/></svg><svg class="a" style="left:195px;top:80px" width="5" height="3" shape-rendering="crispEdges"><rect x="0" y="0" width="5" height="1" fill="#000000"/><rect x="1" y="1" width="3" height="1" fill="#000000"/><rect x="2" y="2" width="1" height="1" fill="#000000"/></svg><svg class="a" style="left:214px;top:74px" width="15" height="13" shape-rendering="crispEdges"><rect x="0" y="0" width="15" height="1" fill="#c8d4e1"/><rect x="0" y="1" width="1" height="1" fill="#c8d4e1"/><rect x="14" y="1" width="1" height="1" fill="#c8d4e1"/><rect x="0" y="2" width="1" height="1" fill="#c8d4e1"/><rect x="2" y="2" width="2" height="1" fill="#c8d4e1"/><rect x="14" y="2" width="1" height="1" fill="#c8d4e1"/><rect x="0" y="3" width="1" height="1" fill="#c8d4e1"/><rect x="2" y="3" width="2" height="1" fill="#c8d4e1"/><rect x="5" y="3" width="7" height="1" fill="#c8d4e1"/><rect x="14" y="3" width="1" height="1" fill="#c8d4e1"/><rect x="0" y="4" width="1" height="1" fill="#c8d4e1"/><rect x="14" y="4" width="1" height="1" fill="#c8d4e1"/><rect x="0" y="5" width="1" height="1" fill="#c8d4e1"/><rect x="2" y="5" width="2" height="1" fill="#c8d4e1"/><rect x="14" y="5" width="1" height="1" fill="#c8d4e1"/><rect x="0" y="6" width="1" height="1" fill="#c8d4e1"/><rect x="2" y="6" width="2" height="1" fill="#c8d4e1"/><rect x="5" y="6" width="7" height="1" fill="#c8d4e1"/><rect x="14" y="6" width="1" height="1" fill="#c8d4e1"/><rect x="0" y="7" width="1" height="1" fill="#c8d4e1"/><rect x="14" y="7" width="1" height="1" fill="#c8d4e1"/><rect x="0" y="8" width="1" height="1" fill="#c8d4e1"/><rect x="2" y="8" width="2" height="1" fill="#c8d4e1"/><rect x="14" y="8" width="1" height="1" fill="#c8d4e1"/><rect x="0" y="9" width="1" height="1" fill="#c8d4e1"/><rect x="2" y="9" width="2" height="1" fill="#c8d4e1"/><rect x="5" y="9" width="7" height="1" fill="#c8d4e1"/><rect x="14" y="9" width="1" height="1" fill="#c8d4e1"/><rect x="0" y="10" width="1" height="1" fill="#c8d4e1"/><rect x="14" y="10" width="1" height="1" fill="#c8d4e1"/><rect x="0" y="11" width="1" height="1" fill="#c8d4e1"/><rect x="14" y="11" width="1" height="1" fill="#c8d4e1"/><rect x="0" y="12" width="15" height="1" fill="#c8d4e1"/></svg><svg class="a" style="left:213px;top:73px" width="15" height="13" shape-rendering="crispEdges"><rect x="0" y="0" width="15" height="1" fill="#50637c"/><rect x="0" y="1" width="1" height="1" fill="#50637c"/><rect x="14" y="1" width="1" height="1" fill="#50637c"/><rect x="0" y="2" width="1" height="1" fill="#50637c"/><rect x="2" y="2" width="2" height="1" fill="#50637c"/><rect x="14" y="2" width="1" height="1" fill="#50637c"/><rect x="0" y="3" width="1" height="1" fill="#50637c"/><rect x="2" y="3" width="2" height="1" fill="#50637c"/><rect x="5" y="3" width="7" height="1" fill="#50637c"/><rect x="14" y="3" width="1" height="1" fill="#50637c"/><rect x="0" y="4" width="1" height="1" fill="#50637c"/><rect x="14" y="4" width="1" height="1" fill="#50637c"/><rect x="0" y="5" width="1" height="1" fill="#50637c"/><rect x="2" y="5" width="2" height="1" fill="#50637c"/><rect x="14" y="5" width="1" height="1" fill="#50637c"/><rect x="0" y="6" width="1" height="1" fill="#50637c"/><rect x="2" y="6" width="2" height="1" fill="#50637c"/><rect x="5" y="6" width="7" height="1" fill="#50637c"/><rect x="14" y="6" width="1" height="1" fill="#50637c"/><rect x="0" y="7" width="1" height="1" fill="#50637c"/><rect x="14" y="7" width="1" height="1" fill="#50637c"/><rect x="0" y="8" width="1" height="1" fill="#50637c"/><rect x="2" y="8" width="2" height="1" fill="#50637c"/><rect x="14" y="8" width="1" height="1" fill="#50637c"/><rect x="0" y="9" width="1" height="1" fill="#50637c"/><rect x="2" y="9" width="2" height="1" fill="#50637c"/><rect x="5" y="9" width="7" height="1" fill="#50637c"/><rect x="14" y="9" width="1" height="1" fill="#50637c"/><rect x="0" y="10" width="1" height="1" fill="#50637c"/><rect x="14" y="10" width="1" height="1" fill="#50637c"/><rect x="0" y="11" width="1" height="1" fill="#50637c"/><rect x="14" y="11" width="1" height="1" fill="#50637c"/><rect x="0" y="12" width="15" height="1" fill="#50637c"/></svg><svg class="a" style="left:239px;top:77px" width="13" height="10" shape-rendering="crispEdges"><rect x="4" y="0" width="9" height="1" fill="#c8d4e1"/><rect x="4" y="1" width="1" height="1" fill="#c8d4e1"/><rect x="8" y="1" width="1" height="1" fill="#c8d4e1"/><rect x="12" y="1" width="1" height="1" fill="#c8d4e1"/><rect x="4" y="2" width="1" height="1" fill="#c8d4e1"/><rect x="8" y="2" width="1" height="1" fill="#c8d4e1"/><rect x="12" y="2" width="1" height="1" fill="#c8d4e1"/><rect x="0" y="3" width="13" height="1" fill="#c8d4e1"/><rect x="0" y="4" width="1" height="1" fill="#c8d4e1"/><rect x="4" y="4" width="1" height="1" fill="#c8d4e1"/><rect x="8" y="4" width="1" height="1" fill="#c8d4e1"/><rect x="12" y="4" width="1" height="1" fill="#c8d4e1"/><rect x="0" y="5" width="1" height="1" fill="#c8d4e1"/><rect x="4" y="5" width="1" height="1" fill="#c8d4e1"/><rect x="8" y="5" width="1" height="1" fill="#c8d4e1"/><rect x="12" y="5" width="1" height="1" fill="#c8d4e1"/><rect x="0" y="6" width="13" height="1" fill="#c8d4e1"/><rect x="0" y="7" width="1" height="1" fill="#c8d4e1"/><rect x="4" y="7" width="1" height="1" fill="#c8d4e1"/><rect x="8" y="7" width="1" height="1" fill="#c8d4e1"/><rect x="12" y="7" width="1" height="1" fill="#c8d4e1"/><rect x="0" y="8" width="1" height="1" fill="#c8d4e1"/><rect x="4" y="8" width="1" height="1" fill="#c8d4e1"/><rect x="8" y="8" width="1" height="1" fill="#c8d4e1"/><rect x="12" y="8" width="1" height="1" fill="#c8d4e1"/><rect x="0" y="9" width="13" height="1" fill="#c8d4e1"/></svg><svg class="a" style="left:238px;top:76px" width="13" height="10" shape-rendering="crispEdges"><rect x="4" y="0" width="9" height="1" fill="#50637c"/><rect x="4" y="1" width="1" height="1" fill="#50637c"/><rect x="8" y="1" width="1" height="1" fill="#50637c"/><rect x="12" y="1" width="1" height="1" fill="#50637c"/><rect x="4" y="2" width="1" height="1" fill="#50637c"/><rect x="8" y="2" width="1" height="1" fill="#50637c"/><rect x="12" y="2" width="1" height="1" fill="#50637c"/><rect x="0" y="3" width="13" height="1" fill="#50637c"/><rect x="0" y="4" width="1" height="1" fill="#50637c"/><rect x="4" y="4" width="1" height="1" fill="#50637c"/><rect x="8" y="4" width="1" height="1" fill="#50637c"/><rect x="12" y="4" width="1" height="1" fill="#50637c"/><rect x="0" y="5" width="1" height="1" fill="#50637c"/><rect x="4" y="5" width="1" height="1" fill="#50637c"/><rect x="8" y="5" width="1" height="1" fill="#50637c"/><rect x="12" y="5" width="1" height="1" fill="#50637c"/><rect x="0" y="6" width="13" height="1" fill="#50637c"/><rect x="0" y="7" width="1" height="1" fill="#50637c"/><rect x="4" y="7" width="1" height="1" fill="#50637c"/><rect x="8" y="7" width="1" height="1" fill="#50637c"/><rect x="12" y="7" width="1" height="1" fill="#50637c"/><rect x="0" y="8" width="1" height="1" fill="#50637c"/><rect x="4" y="8" width="1" height="1" fill="#50637c"/><rect x="8" y="8" width="1" height="1" fill="#50637c"/><rect x="12" y="8" width="1" height="1" fill="#50637c"/><rect x="0" y="9" width="13" height="1" fill="#50637c"/></svg><svg class="a" style="left:267px;top:75px" width="14" height="11" shape-rendering="crispEdges"><rect x="0" y="0" width="14" height="1" fill="#c8d4e1"/><rect x="0" y="1" width="1" height="1" fill="#c8d4e1"/><rect x="3" y="1" width="1" height="1" fill="#c8d4e1"/><rect x="13" y="1" width="1" height="1" fill="#c8d4e1"/><rect x="0" y="2" width="1" height="1" fill="#c8d4e1"/><rect x="2" y="2" width="2" height="1" fill="#c8d4e1"/><rect x="13" y="2" width="1" height="1" fill="#c8d4e1"/><rect x="0" y="3" width="14" height="1" fill="#c8d4e1"/><rect x="0" y="4" width="1" height="1" fill="#c8d4e1"/><rect x="3" y="4" width="1" height="1" fill="#c8d4e1"/><rect x="13" y="4" width="1" height="1" fill="#c8d4e1"/><rect x="0" y="5" width="1" height="1" fill="#c8d4e1"/><rect x="2" y="5" width="2" height="1" fill="#c8d4e1"/><rect x="13" y="5" width="1" height="1" fill="#c8d4e1"/><rect x="0" y="6" width="14" height="1" fill="#c8d4e1"/><rect x="0" y="7" width="1" height="1" fill="#c8d4e1"/><rect x="3" y="7" width="1" height="1" fill="#c8d4e1"/><rect x="13" y="7" width="1" height="1" fill="#c8d4e1"/><rect x="0" y="8" width="1" height="1" fill="#c8d4e1"/><rect x="2" y="8" width="2" height="1" fill="#c8d4e1"/><rect x="13" y="8" width="1" height="1" fill="#c8d4e1"/><rect x="0" y="9" width="1" height="1" fill="#c8d4e1"/><rect x="3" y="9" width="1" height="1" fill="#c8d4e1"/><rect x="13" y="9" width="1" height="1" fill="#c8d4e1"/><rect x="0" y="10" width="14" height="1" fill="#c8d4e1"/></svg><svg class="a" style="left:266px;top:74px" width="14" height="11" shape-rendering="crispEdges"><rect x="0" y="0" width="14" height="1" fill="#50637c"/><rect x="0" y="1" width="1" height="1" fill="#50637c"/><rect x="3" y="1" width="1" height="1" fill="#50637c"/><rect x="13" y="1" width="1" height="1" fill="#50637c"/><rect x="0" y="2" width="1" height="1" fill="#50637c"/><rect x="2" y="2" width="2" height="1" fill="#50637c"/><rect x="13" y="2" width="1" height="1" fill="#50637c"/><rect x="0" y="3" width="14" height="1" fill="#50637c"/><rect x="0" y="4" width="1" height="1" fill="#50637c"/><rect x="3" y="4" width="1" height="1" fill="#50637c"/><rect x="13" y="4" width="1" height="1" fill="#50637c"/><rect x="0" y="5" width="1" height="1" fill="#50637c"/><rect x="2" y="5" width="2" height="1" fill="#50637c"/><rect x="13" y="5" width="1" height="1" fill="#50637c"/><rect x="0" y="6" width="14" height="1" fill="#50637c"/><rect x="0" y="7" width="1" height="1" fill="#50637c"/><rect x="3" y="7" width="1" height="1" fill="#50637c"/><rect x="13" y="7" width="1" height="1" fill="#50637c"/><rect x="0" y="8" width="1" height="1" fill="#50637c"/><rect x="2" y="8" width="2" height="1" fill="#50637c"/><rect x="13" y="8" width="1" height="1" fill="#50637c"/><rect x="0" y="9" width="1" height="1" fill="#50637c"/><rect x="3" y="9" width="1" height="1" fill="#50637c"/><rect x="13" y="9" width="1" height="1" fill="#50637c"/><rect x="0" y="10" width="14" height="1" fill="#50637c"/></svg><svg class="a" style="left:291px;top:75px" width="14" height="11" shape-rendering="crispEdges"><rect x="0" y="0" width="14" height="1" fill="#c8d4e1"/><rect x="0" y="1" width="1" height="1" fill="#c8d4e1"/><rect x="3" y="1" width="1" height="1" fill="#c8d4e1"/><rect x="7" y="1" width="1" height="1" fill="#c8d4e1"/><rect x="11" y="1" width="1" height="1" fill="#c8d4e1"/><rect x="13" y="1" width="1" height="1" fill="#c8d4e1"/><rect x="0" y="2" width="1" height="1" fill="#c8d4e1"/><rect x="2" y="2" width="2" height="1" fill="#c8d4e1"/><rect x="6" y="2" width="2" height="1" fill="#c8d4e1"/><rect x="10" y="2" width="2" height="1" fill="#c8d4e1"/><rect x="13" y="2" width="1" height="1" fill="#c8d4e1"/><rect x="0" y="3" width="14" height="1" fill="#c8d4e1"/><rect x="0" y="4" width="1" height="1" fill="#c8d4e1"/><rect x="3" y="4" width="1" height="1" fill="#c8d4e1"/><rect x="7" y="4" width="1" height="1" fill="#c8d4e1"/><rect x="11" y="4" width="1" height="1" fill="#c8d4e1"/><rect x="13" y="4" width="1" height="1" fill="#c8d4e1"/><rect x="0" y="5" width="1" height="1" fill="#c8d4e1"/><rect x="3" y="5" width="1" height="1" fill="#c8d4e1"/><rect x="7" y="5" width="1" height="1" fill="#c8d4e1"/><rect x="11" y="5" width="1" height="1" fill="#c8d4e1"/><rect x="13" y="5" width="1" height="1" fill="#c8d4e1"/><rect x="0" y="6" width="1" height="1" fill="#c8d4e1"/><rect x="3" y="6" width="1" height="1" fill="#c8d4e1"/><rect x="7" y="6" width="1" height="1" fill="#c8d4e1"/><rect x="11" y="6" width="1" height="1" fill="#c8d4e1"/><rect x="13" y="6" width="1" height="1" fill="#c8d4e1"/><rect x="0" y="7" width="1" height="1" fill="#c8d4e1"/><rect x="3" y="7" width="1" height="1" fill="#c8d4e1"/><rect x="7" y="7" width="1" height="1" fill="#c8d4e1"/><rect x="11" y="7" width="1" height="1" fill="#c8d4e1"/><rect x="13" y="7" width="1" height="1" fill="#c8d4e1"/><rect x="0" y="8" width="1" height="1" fill="#c8d4e1"/><rect x="3" y="8" width="1" height="1" fill="#c8d4e1"/><rect x="7" y="8" width="1" height="1" fill="#c8d4e1"/><rect x="11" y="8" width="1" height="1" fill="#c8d4e1"/><rect x="13" y="8" width="1" height="1" fill="#c8d4e1"/><rect x="0" y="9" width="1" height="1" fill="#c8d4e1"/><rect x="3" y="9" width="1" height="1" fill="#c8d4e1"/><rect x="7" y="9" width="1" height="1" fill="#c8d4e1"/><rect x="11" y="9" width="1" height="1" fill="#c8d4e1"/><rect x="13" y="9" width="1" height="1" fill="#c8d4e1"/><rect x="0" y="10" width="14" height="1" fill="#c8d4e1"/></svg><svg class="a" style="left:290px;top:74px" width="14" height="11" shape-rendering="crispEdges"><rect x="0" y="0" width="14" height="1" fill="#50637c"/><rect x="0" y="1" width="1" height="1" fill="#50637c"/><rect x="3" y="1" width="1" height="1" fill="#50637c"/><rect x="7" y="1" width="1" height="1" fill="#50637c"/><rect x="11" y="1" width="1" height="1" fill="#50637c"/><rect x="13" y="1" width="1" height="1" fill="#50637c"/><rect x="0" y="2" width="1" height="1" fill="#50637c"/><rect x="2" y="2" width="2" height="1" fill="#50637c"/><rect x="6" y="2" width="2" height="1" fill="#50637c"/><rect x="10" y="2" width="2" height="1" fill="#50637c"/><rect x="13" y="2" width="1" height="1" fill="#50637c"/><rect x="0" y="3" width="14" height="1" fill="#50637c"/><rect x="0" y="4" width="1" height="1" fill="#50637c"/><rect x="3" y="4" width="1" height="1" fill="#50637c"/><rect x="7" y="4" width="1" height="1" fill="#50637c"/><rect x="11" y="4" width="1" height="1" fill="#50637c"/><rect x="13" y="4" width="1" height="1" fill="#50637c"/><rect x="0" y="5" width="1" height="1" fill="#50637c"/><rect x="3" y="5" width="1" height="1" fill="#50637c"/><rect x="7" y="5" width="1" height="1" fill="#50637c"/><rect x="11" y="5" width="1" height="1" fill="#50637c"/><rect x="13" y="5" width="1" height="1" fill="#50637c"/><rect x="0" y="6" width="1" height="1" fill="#50637c"/><rect x="3" y="6" width="1" height="1" fill="#50637c"/><rect x="7" y="6" width="1" height="1" fill="#50637c"/><rect x="11" y="6" width="1" height="1" fill="#50637c"/><rect x="13" y="6" width="1" height="1" fill="#50637c"/><rect x="0" y="7" width="1" height="1" fill="#50637c"/><rect x="3" y="7" width="1" height="1" fill="#50637c"/><rect x="7" y="7" width="1" height="1" fill="#50637c"/><rect x="11" y="7" width="1" height="1" fill="#50637c"/><rect x="13" y="7" width="1" height="1" fill="#50637c"/><rect x="0" y="8" width="1" height="1" fill="#50637c"/><rect x="3" y="8" width="1" height="1" fill="#50637c"/><rect x="7" y="8" width="1" height="1" fill="#50637c"/><rect x="11" y="8" width="1" height="1" fill="#50637c"/><rect x="13" y="8" width="1" height="1" fill="#50637c"/><rect x="0" y="9" width="1" height="1" fill="#50637c"/><rect x="3" y="9" width="1" height="1" fill="#50637c"/><rect x="7" y="9" width="1" height="1" fill="#50637c"/><rect x="11" y="9" width="1" height="1" fill="#50637c"/><rect x="13" y="9" width="1" height="1" fill="#50637c"/><rect x="0" y="10" width="14" height="1" fill="#50637c"/></svg><svg class="a" style="left:318px;top:75px" width="13" height="12" shape-rendering="crispEdges"><rect x="4" y="0" width="2" height="1" fill="#000000"/><rect x="6" y="1" width="1" height="1" fill="#000000"/><rect x="2" y="2" width="2" height="1" fill="#000000"/><rect x="7" y="2" width="1" height="1" fill="#000000"/><rect x="12" y="2" width="1" height="1" fill="#000000"/><rect x="1" y="3" width="1" height="1" fill="#000000"/><rect x="4" y="3" width="1" height="1" fill="#000000"/><rect x="7" y="3" width="1" height="1" fill="#000000"/><rect x="11" y="3" width="1" height="1" fill="#000000"/><rect x="0" y="4" width="1" height="1" fill="#000000"/><rect x="5" y="4" width="2" height="1" fill="#000000"/><rect x="10" y="4" width="1" height="1" fill="#000000"/><rect x="1" y="5" width="1" height="1" fill="#000000"/><rect x="5" y="5" width="1" height="1" fill="#000000"/><rect x="9" y="5" width="2" height="1" fill="#000000"/><rect x="2" y="6" width="3" height="1" fill="#000000"/><rect x="8" y="6" width="1" height="1" fill="#000000"/><rect x="11" y="6" width="1" height="1" fill="#000000"/><rect x="4" y="7" width="1" height="1" fill="#000000"/><rect x="7" y="7" width="1" height="1" fill="#000000"/><rect x="12" y="7" width="1" height="1" fill="#000000"/><rect x="6" y="8" width="1" height="1" fill="#000000"/><rect x="12" y="8" width="1" height="1" fill="#000000"/><rect x="5" y="9" width="2" height="1" fill="#000000"/><rect x="12" y="9" width="1" height="1" fill="#000000"/><rect x="7" y="10" width="1" height="1" fill="#000000"/><rect x="11" y="10" width="1" height="1" fill="#000000"/><rect x="8" y="11" width="3" height="1" fill="#000000"/></svg><svg class="a" style="left:342px;top:74px" width="12" height="13" shape-rendering="crispEdges"><rect x="2" y="0" width="1" height="1" fill="#000000"/><rect x="7" y="0" width="3" height="1" fill="#000000"/><rect x="3" y="1" width="1" height="1" fill="#000000"/><rect x="6" y="1" width="1" height="1" fill="#000000"/><rect x="10" y="1" width="1" height="1" fill="#000000"/><rect x="4" y="2" width="2" height="1" fill="#000000"/><rect x="11" y="2" width="1" height="1" fill="#000000"/><rect x="5" y="3" width="1" height="1" fill="#000000"/><rect x="11" y="3" width="1" height="1" fill="#000000"/><rect x="6" y="4" width="1" height="1" fill="#000000"/><rect x="11" y="4" width="1" height="1" fill="#000000"/><rect x="2" y="5" width="2" height="1" fill="#000000"/><rect x="7" y="5" width="1" height="1" fill="#000000"/><rect x="10" y="5" width="1" height="1" fill="#000000"/><rect x="1" y="6" width="1" height="1" fill="#000000"/><rect x="4" y="6" width="1" height="1" fill="#000000"/><rect x="8" y="6" width="2" height="1" fill="#000000"/><rect x="0" y="7" width="1" height="1" fill="#000000"/><rect x="4" y="7" width="2" height="1" fill="#000000"/><rect x="9" y="7" width="1" height="1" fill="#000000"/><rect x="0" y="8" width="1" height="1" fill="#000000"/><rect x="3" y="8" width="1" height="1" fill="#000000"/><rect x="7" y="8" width="1" height="1" fill="#000000"/><rect x="2" y="9" width="1" height="1" fill="#000000"/><rect x="6" y="9" width="1" height="1" fill="#000000"/><rect x="2" y="10" width="1" height="1" fill="#000000"/><rect x="6" y="10" width="1" height="1" fill="#000000"/><rect x="3" y="11" width="1" height="1" fill="#000000"/><rect x="5" y="11" width="1" height="1" fill="#000000"/><rect x="4" y="12" width="1" height="1" fill="#000000"/></svg><svg class="a" style="left:363px;top:84px" width="5" height="3" shape-rendering="crispEdges"><rect x="0" y="0" width="5" height="1" fill="#000000"/><rect x="1" y="1" width="3" height="1" fill="#000000"/><rect x="2" y="2" width="1" height="1" fill="#000000"/></svg>
<svg class="a" style="left:41px;top:707px" width="5" height="3" shape-rendering="crispEdges"><rect x="0" y="0" width="5" height="1" fill="#000000"/><rect x="1" y="1" width="3" height="1" fill="#000000"/><rect x="2" y="2" width="1" height="1" fill="#000000"/></svg><svg class="a" style="left:170px;top:707px" width="5" height="3" shape-rendering="crispEdges"><rect x="0" y="0" width="5" height="1" fill="#000000"/><rect x="1" y="1" width="3" height="1" fill="#000000"/><rect x="2" y="2" width="1" height="1" fill="#000000"/></svg><svg class="a" style="left:58px;top:700px" width="9" height="15" shape-rendering="crispEdges"><rect x="0" y="0" width="1" height="1" fill="#000000"/><rect x="0" y="1" width="2" height="1" fill="#000000"/><rect x="0" y="2" width="1" height="1" fill="#000000"/><rect x="1" y="2" width="1" height="1" fill="#ffffff"/><rect x="2" y="2" width="1" height="1" fill="#000000"/><rect x="0" y="3" width="1" height="1" fill="#000000"/><rect x="1" y="3" width="2" height="1" fill="#ffffff"/><rect x="3" y="3" width="1" height="1" fill="#000000"/><rect x="0" y="4" width="1" height="1" fill="#000000"/><rect x="1" y="4" width="3" height="1" fill="#ffffff"/><rect x="4" y="4" width="1" height="1" fill="#000000"/><rect x="0" y="5" width="1" height="1" fill="#000000"/><rect x="1" y="5" width="4" height="1" fill="#ffffff"/><rect x="5" y="5" width="1" height="1" fill="#000000"/><rect x="0" y="6" width="1" height="1" fill="#000000"/><rect x="1" y="6" width="5" height="1" fill="#ffffff"/><rect x="6" y="6" width="1" height="1" fill="#000000"/><rect x="0" y="7" width="1" height="1" fill="#000000"/><rect x="1" y="7" width="6" height="1" fill="#ffffff"/><rect x="7" y="7" width="1" height="1" fill="#000000"/><rect x="0" y="8" width="1" height="1" fill="#000000"/><rect x="1" y="8" width="7" height="1" fill="#ffffff"/><rect x="8" y="8" width="1" height="1" fill="#000000"/><rect x="0" y="9" width="1" height="1" fill="#000000"/><rect x="1" y="9" width="4" height="1" fill="#ffffff"/><rect x="5" y="9" width="4" height="1" fill="#000000"/><rect x="0" y="10" width="1" height="1" fill="#000000"/><rect x="1" y="10" width="1" height="1" fill="#ffffff"/><rect x="2" y="10" width="1" height="1" fill="#000000"/><rect x="3" y="10" width="2" height="1" fill="#ffffff"/><rect x="5" y="10" width="1" height="1" fill="#000000"/><rect x="0" y="11" width="2" height="1" fill="#000000"/><rect x="3" y="11" width="1" height="1" fill="#000000"/><rect x="4" y="11" width="2" height="1" fill="#ffffff"/><rect x="6" y="11" width="1" height="1" fill="#000000"/><rect x="0" y="12" width="1" height="1" fill="#000000"/><rect x="4" y="12" width="1" height="1" fill="#000000"/><rect x="5" y="12" width="1" height="1" fill="#ffffff"/><rect x="6" y="12" width="1" height="1" fill="#000000"/><rect x="5" y="13" width="1" height="1" fill="#000000"/><rect x="6" y="13" width="1" height="1" fill="#ffffff"/><rect x="7" y="13" width="1" height="1" fill="#000000"/><rect x="5" y="14" width="2" height="1" fill="#000000"/></svg><svg class="a" style="left:79px;top:701px" width="14" height="13" shape-rendering="crispEdges"><rect x="7" y="0" width="1" height="1" fill="#c8d4e1"/><rect x="7" y="1" width="2" height="1" fill="#c8d4e1"/><rect x="4" y="2" width="6" height="1" fill="#c8d4e1"/><rect x="3" y="3" width="2" height="1" fill="#c8d4e1"/><rect x="7" y="3" width="2" height="1" fill="#c8d4e1"/><rect x="2" y="4" width="2" height="1" fill="#c8d4e1"/><rect x="7" y="4" width="1" height="1" fill="#c8d4e1"/><rect x="11" y="4" width="1" height="1" fill="#c8d4e1"/><rect x="1" y="5" width="2" height="1" fill="#c8d4e1"/><rect x="13" y="5" width="1" height="1" fill="#c8d4e1"/><rect x="0" y="6" width="2" height="1" fill="#c8d4e1"/><rect x="7" y="6" width="2" height="1" fill="#c8d4e1"/><rect x="12" y="6" width="2" height="1" fill="#c8d4e1"/><rect x="0" y="7" width="2" height="1" fill="#c8d4e1"/><rect x="6" y="7" width="3" height="1" fill="#c8d4e1"/><rect x="13" y="7" width="1" height="1" fill="#c8d4e1"/><rect x="0" y="8" width="2" height="1" fill="#c8d4e1"/><rect x="7" y="8" width="1" height="1" fill="#c8d4e1"/><rect x="13" y="8" width="1" height="1" fill="#c8d4e1"/><rect x="1" y="9" width="2" height="1" fill="#c8d4e1"/><rect x="12" y="9" width="1" height="1" fill="#c8d4e1"/><rect x="2" y="10" width="2" height="1" fill="#c8d4e1"/><rect x="11" y="10" width="1" height="1" fill="#c8d4e1"/><rect x="3" y="11" width="8" height="1" fill="#c8d4e1"/><rect x="4" y="12" width="6" height="1" fill="#c8d4e1"/></svg><svg class="a" style="left:78px;top:700px" width="14" height="13" shape-rendering="crispEdges"><rect x="7" y="0" width="1" height="1" fill="#50637c"/><rect x="7" y="1" width="2" height="1" fill="#50637c"/><rect x="4" y="2" width="6" height="1" fill="#50637c"/><rect x="3" y="3" width="2" height="1" fill="#50637c"/><rect x="7" y="3" width="2" height="1" fill="#50637c"/><rect x="2" y="4" width="2" height="1" fill="#50637c"/><rect x="7" y="4" width="1" height="1" fill="#50637c"/><rect x="11" y="4" width="1" height="1" fill="#50637c"/><rect x="1" y="5" width="2" height="1" fill="#50637c"/><rect x="13" y="5" width="1" height="1" fill="#50637c"/><rect x="0" y="6" width="2" height="1" fill="#50637c"/><rect x="7" y="6" width="2" height="1" fill="#50637c"/><rect x="12" y="6" width="2" height="1" fill="#50637c"/><rect x="0" y="7" width="2" height="1" fill="#50637c"/><rect x="6" y="7" width="3" height="1" fill="#50637c"/><rect x="13" y="7" width="1" height="1" fill="#50637c"/><rect x="0" y="8" width="2" height="1" fill="#50637c"/><rect x="7" y="8" width="1" height="1" fill="#50637c"/><rect x="13" y="8" width="1" height="1" fill="#50637c"/><rect x="1" y="9" width="2" height="1" fill="#50637c"/><rect x="12" y="9" width="1" height="1" fill="#50637c"/><rect x="2" y="10" width="2" height="1" fill="#50637c"/><rect x="11" y="10" width="1" height="1" fill="#50637c"/><rect x="3" y="11" width="8" height="1" fill="#50637c"/><rect x="4" y="12" width="6" height="1" fill="#50637c"/></svg><svg class="a" style="left:185px;top:702px" width="11" height="11" shape-rendering="crispEdges"><rect x="0" y="0" width="1" height="1" fill="#000000"/><rect x="1" y="1" width="1" height="1" fill="#000000"/><rect x="2" y="2" width="1" height="1" fill="#000000"/><rect x="3" y="3" width="1" height="1" fill="#000000"/><rect x="4" y="4" width="1" height="1" fill="#000000"/><rect x="5" y="5" width="1" height="1" fill="#000000"/><rect x="6" y="6" width="1" height="1" fill="#000000"/><rect x="7" y="7" width="1" height="1" fill="#000000"/><rect x="8" y="8" width="1" height="1" fill="#000000"/><rect x="9" y="9" width="1" height="1" fill="#000000"/><rect x="10" y="10" width="1" height="1" fill="#000000"/></svg><svg class="a" style="left:209px;top:702px" width="11" height="11" shape-rendering="crispEdges"><rect x="0" y="0" width="1" height="1" fill="#000000"/><rect x="1" y="1" width="1" height="1" fill="#000000"/><rect x="2" y="2" width="1" height="1" fill="#000000"/><rect x="3" y="3" width="1" height="1" fill="#000000"/><rect x="4" y="4" width="3" height="1" fill="#000000"/><rect x="5" y="5" width="3" height="1" fill="#000000"/><rect x="4" y="6" width="4" height="1" fill="#000000"/><rect x="5" y="7" width="4" height="1" fill="#000000"/><rect x="6" y="8" width="4" height="1" fill="#000000"/><rect x="7" y="9" width="3" height="1" fill="#000000"/><rect x="9" y="10" width="1" height="1" fill="#000000"/></svg><svg class="a" style="left:229px;top:701px" width="16" height="13" shape-rendering="crispEdges"><rect x="0" y="0" width="16" height="1" fill="#000000"/><rect x="0" y="1" width="1" height="1" fill="#000000"/><rect x="15" y="1" width="1" height="1" fill="#000000"/><rect x="0" y="2" width="1" height="1" fill="#000000"/><rect x="15" y="2" width="1" height="1" fill="#000000"/><rect x="0" y="3" width="1" height="1" fill="#000000"/><rect x="15" y="3" width="1" height="1" fill="#000000"/><rect x="0" y="4" width="1" height="1" fill="#000000"/><rect x="15" y="4" width="1" height="1" fill="#000000"/><rect x="0" y="5" width="1" height="1" fill="#000000"/><rect x="15" y="5" width="1" height="1" fill="#000000"/><rect x="0" y="6" width="1" height="1" fill="#000000"/><rect x="15" y="6" width="1" height="1" fill="#000000"/><rect x="0" y="7" width="1" height="1" fill="#000000"/><rect x="15" y="7" width="1" height="1" fill="#000000"/><rect x="0" y="8" width="1" height="1" fill="#000000"/><rect x="15" y="8" width="1" height="1" fill="#000000"/><rect x="0" y="9" width="1" height="1" fill="#000000"/><rect x="15" y="9" width="1" height="1" fill="#000000"/><rect x="0" y="10" width="1" height="1" fill="#000000"/><rect x="15" y="10" width="1" height="1" fill="#000000"/><rect x="0" y="11" width="1" height="1" fill="#000000"/><rect x="15" y="11" width="1" height="1" fill="#000000"/><rect x="0" y="12" width="16" height="1" fill="#000000"/></svg><svg class="a" style="left:252px;top:701px" width="16" height="13" shape-rendering="crispEdges"><rect x="5" y="0" width="6" height="1" fill="#000000"/><rect x="3" y="1" width="2" height="1" fill="#000000"/><rect x="11" y="1" width="2" height="1" fill="#000000"/><rect x="2" y="2" width="1" height="1" fill="#000000"/><rect x="13" y="2" width="1" height="1" fill="#000000"/><rect x="1" y="3" width="1" height="1" fill="#000000"/><rect x="14" y="3" width="1" height="1" fill="#000000"/><rect x="0" y="4" width="1" height="1" fill="#000000"/><rect x="15" y="4" width="1" height="1" fill="#000000"/><rect x="0" y="5" width="1" height="1" fill="#000000"/><rect x="15" y="5" width="1" height="1" fill="#000000"/><rect x="0" y="6" width="1" height="1" fill="#000000"/><rect x="15" y="6" width="1" height="1" fill="#000000"/><rect x="0" y="7" width="1" height="1" fill="#000000"/><rect x="15" y="7" width="1" height="1" fill="#000000"/><rect x="1" y="8" width="1" height="1" fill="#000000"/><rect x="14" y="8" width="1" height="1" fill="#000000"/><rect x="2" y="9" width="1" height="1" fill="#000000"/><rect x="13" y="9" width="1" height="1" fill="#000000"/><rect x="3" y="10" width="2" height="1" fill="#000000"/><rect x="11" y="10" width="2" height="1" fill="#000000"/><rect x="5" y="11" width="6" height="1" fill="#000000"/></svg><svg class="a" style="left:275px;top:700px" width="16" height="16" shape-rendering="crispEdges"><rect x="0" y="0" width="15" height="1" fill="#000000"/><rect x="0" y="1" width="1" height="1" fill="#000000"/><rect x="1" y="1" width="13" height="1" fill="#ffffff"/><rect x="14" y="1" width="1" height="1" fill="#000000"/><rect x="15" y="1" width="1" height="1" fill="#808080"/><rect x="0" y="2" width="1" height="1" fill="#000000"/><rect x="1" y="2" width="4" height="1" fill="#ffffff"/><rect x="5" y="2" width="1" height="1" fill="#000000"/><rect x="6" y="2" width="4" height="1" fill="#ffffff"/><rect x="10" y="2" width="3" height="1" fill="#000000"/><rect x="13" y="2" width="1" height="1" fill="#ffffff"/><rect x="14" y="2" width="1" height="1" fill="#000000"/><rect x="15" y="2" width="1" height="1" fill="#808080"/><rect x="0" y="3" width="1" height="1" fill="#000000"/><rect x="1" y="3" width="3" height="1" fill="#ffffff"/><rect x="4" y="3" width="3" height="1" fill="#808080"/><rect x="7" y="3" width="7" height="1" fill="#ffffff"/><rect x="14" y="3" width="1" height="1" fill="#000000"/><rect x="15" y="3" width="1" height="1" fill="#808080"/><rect x="0" y="4" width="1" height="1" fill="#000000"/><rect x="1" y="4" width="3" height="1" fill="#ffffff"/><rect x="4" y="4" width="3" height="1" fill="#000000"/><rect x="7" y="4" width="3" height="1" fill="#ffffff"/><rect x="10" y="4" width="3" height="1" fill="#000000"/><rect x="13" y="4" width="1" height="1" fill="#ffffff"/><rect x="14" y="4" width="1" height="1" fill="#000000"/><rect x="15" y="4" width="1" height="1" fill="#808080"/><rect x="0" y="5" width="1" height="1" fill="#000000"/><rect x="1" y="5" width="2" height="1" fill="#ffffff"/><rect x="3" y="5" width="1" height="1" fill="#000000"/><rect x="4" y="5" width="3" height="1" fill="#ffffff"/><rect x="7" y="5" width="1" height="1" fill="#000000"/><rect x="8" y="5" width="6" height="1" fill="#ffffff"/><rect x="14" y="5" width="1" height="1" fill="#000000"/><rect x="15" y="5" width="1" height="1" fill="#808080"/><rect x="0" y="6" width="1" height="1" fill="#000000"/><rect x="1" y="6" width="1" height="1" fill="#ffffff"/><rect x="2" y="6" width="3" height="1" fill="#000000"/><rect x="5" y="6" width="1" height="1" fill="#ffffff"/><rect x="6" y="6" width="3" height="1" fill="#000000"/><rect x="9" y="6" width="1" height="1" fill="#ffffff"/><rect x="10" y="6" width="3" height="1" fill="#000000"/><rect x="13" y="6" width="1" height="1" fill="#ffffff"/><rect x="14" y="6" width="1" height="1" fill="#000000"/><rect x="15" y="6" width="1" height="1" fill="#808080"/><rect x="0" y="7" width="1" height="1" fill="#000000"/><rect x="1" y="7" width="13" height="1" fill="#ffffff"/><rect x="14" y="7" width="1" height="1" fill="#000000"/><rect x="15" y="7" width="1" height="1" fill="#808080"/><rect x="0" y="8" width="1" height="1" fill="#000000"/><rect x="1" y="8" width="1" height="1" fill="#ffffff"/><rect x="2" y="8" width="11" height="1" fill="#000000"/><rect x="13" y="8" width="1" height="1" fill="#ffffff"/><rect x="14" y="8" width="1" height="1" fill="#000000"/><rect x="15" y="8" width="1" height="1" fill="#808080"/><rect x="0" y="9" width="1" height="1" fill="#000000"/><rect x="1" y="9" width="13" height="1" fill="#ffffff"/><rect x="14" y="9" width="1" height="1" fill="#000000"/><rect x="15" y="9" width="1" height="1" fill="#808080"/><rect x="0" y="10" width="1" height="1" fill="#000000"/><rect x="1" y="10" width="1" height="1" fill="#ffffff"/><rect x="2" y="10" width="11" height="1" fill="#000000"/><rect x="13" y="10" width="1" height="1" fill="#ffffff"/><rect x="14" y="10" width="1" height="1" fill="#000000"/><rect x="15" y="10" width="1" height="1" fill="#808080"/><rect x="0" y="11" width="1" height="1" fill="#000000"/><rect x="1" y="11" width="13" height="1" fill="#ffffff"/><rect x="14" y="11" width="1" height="1" fill="#000000"/><rect x="15" y="11" width="1" height="1" fill="#808080"/><rect x="0" y="12" width="1" height="1" fill="#000000"/><rect x="1" y="12" width="1" height="1" fill="#ffffff"/><rect x="2" y="12" width="11" height="1" fill="#000000"/><rect x="13" y="12" width="1" height="1" fill="#ffffff"/><rect x="14" y="12" width="1" height="1" fill="#000000"/><rect x="15" y="12" width="1" height="1" fill="#808080"/><rect x="0" y="13" width="1" height="1" fill="#000000"/><rect x="1" y="13" width="13" height="1" fill="#ffffff"/><rect x="14" y="13" width="1" height="1" fill="#000000"/><rect x="15" y="13" width="1" height="1" fill="#808080"/><rect x="0" y="14" width="15" height="1" fill="#000000"/><rect x="15" y="14" width="1" height="1" fill="#808080"/><rect x="1" y="15" width="15" height="1" fill="#808080"/></svg><svg class="a" style="left:298px;top:700px" width="16" height="16" shape-rendering="crispEdges"><rect x="12" y="0" width="2" height="1" fill="#808080"/><rect x="14" y="0" width="1" height="1" fill="#000000"/><rect x="10" y="1" width="2" height="1" fill="#0000ff"/><rect x="12" y="1" width="2" height="1" fill="#808080"/><rect x="14" y="1" width="1" height="1" fill="#000000"/><rect x="9" y="2" width="3" height="1" fill="#0000ff"/><rect x="12" y="2" width="2" height="1" fill="#808080"/><rect x="14" y="2" width="1" height="1" fill="#000000"/><rect x="8" y="3" width="4" height="1" fill="#0000ff"/><rect x="12" y="3" width="2" height="1" fill="#808080"/><rect x="14" y="3" width="1" height="1" fill="#000000"/><rect x="7" y="4" width="2" height="1" fill="#0000ff"/><rect x="9" y="4" width="1" height="1" fill="#000080"/><rect x="10" y="4" width="2" height="1" fill="#0000ff"/><rect x="12" y="4" width="2" height="1" fill="#808080"/><rect x="14" y="4" width="1" height="1" fill="#000000"/><rect x="6" y="5" width="2" height="1" fill="#0000ff"/><rect x="8" y="5" width="1" height="1" fill="#000080"/><rect x="9" y="5" width="3" height="1" fill="#0000ff"/><rect x="12" y="5" width="2" height="1" fill="#808080"/><rect x="14" y="5" width="1" height="1" fill="#000000"/><rect x="5" y="6" width="2" height="1" fill="#0000ff"/><rect x="7" y="6" width="2" height="1" fill="#c0c0c0"/><rect x="9" y="6" width="2" height="1" fill="#000080"/><rect x="11" y="6" width="1" height="1" fill="#0000ff"/><rect x="12" y="6" width="2" height="1" fill="#808080"/><rect x="14" y="6" width="1" height="1" fill="#000000"/><rect x="4" y="7" width="2" height="1" fill="#0000ff"/><rect x="6" y="7" width="2" height="1" fill="#c0c0c0"/><rect x="8" y="7" width="3" height="1" fill="#000080"/><rect x="11" y="7" width="1" height="1" fill="#0000ff"/><rect x="12" y="7" width="2" height="1" fill="#808080"/><rect x="14" y="7" width="1" height="1" fill="#000000"/><rect x="3" y="8" width="2" height="1" fill="#0000ff"/><rect x="5" y="8" width="1" height="1" fill="#c0c0c0"/><rect x="6" y="8" width="2" height="1" fill="#0000ff"/><rect x="8" y="8" width="4" height="1" fill="#000080"/><rect x="12" y="8" width="2" height="1" fill="#808080"/><rect x="14" y="8" width="1" height="1" fill="#000000"/><rect x="2" y="9" width="1" height="1" fill="#0000ff"/><rect x="3" y="9" width="1" height="1" fill="#000080"/><rect x="4" y="9" width="2" height="1" fill="#c0c0c0"/><rect x="6" y="9" width="6" height="1" fill="#000080"/><rect x="12" y="9" width="2" height="1" fill="#808080"/><rect x="14" y="9" width="1" height="1" fill="#000000"/><rect x="0" y="10" width="3" height="1" fill="#000080"/><rect x="3" y="10" width="3" height="1" fill="#c0c0c0"/><rect x="6" y="10" width="6" height="1" fill="#000080"/><rect x="12" y="10" width="2" height="1" fill="#808080"/><rect x="14" y="10" width="1" height="1" fill="#000000"/><rect x="2" y="11" width="1" height="1" fill="#000080"/><rect x="3" y="11" width="2" height="1" fill="#c0c0c0"/><rect x="7" y="11" width="5" height="1" fill="#000080"/><rect x="12" y="11" width="2" height="1" fill="#808080"/><rect x="14" y="11" width="1" height="1" fill="#000000"/><rect x="7" y="12" width="5" height="1" fill="#000080"/><rect x="12" y="12" width="2" height="1" fill="#808080"/><rect x="14" y="12" width="1" height="1" fill="#000000"/><rect x="8" y="13" width="4" height="1" fill="#000080"/><rect x="12" y="13" width="2" height="1" fill="#808080"/><rect x="14" y="13" width="2" height="1" fill="#000000"/><rect x="10" y="14" width="2" height="1" fill="#000080"/><rect x="12" y="14" width="2" height="1" fill="#808080"/><rect x="11" y="15" width="1" height="1" fill="#000080"/></svg><svg class="a" style="left:322px;top:700px" width="16" height="15" shape-rendering="crispEdges"><rect x="0" y="0" width="1" height="1" fill="#000000"/><rect x="2" y="0" width="1" height="1" fill="#000000"/><rect x="4" y="0" width="1" height="1" fill="#000000"/><rect x="6" y="0" width="1" height="1" fill="#000000"/><rect x="8" y="0" width="1" height="1" fill="#000000"/><rect x="10" y="0" width="1" height="1" fill="#000000"/><rect x="12" y="0" width="1" height="1" fill="#000000"/><rect x="14" y="0" width="1" height="1" fill="#000000"/><rect x="1" y="1" width="14" height="1" fill="#ffffff"/><rect x="15" y="1" width="1" height="1" fill="#000000"/><rect x="0" y="2" width="1" height="1" fill="#000000"/><rect x="1" y="2" width="4" height="1" fill="#ffffff"/><rect x="5" y="2" width="6" height="1" fill="#800000"/><rect x="11" y="2" width="4" height="1" fill="#ffffff"/><rect x="1" y="3" width="4" height="1" fill="#ffffff"/><rect x="5" y="3" width="7" height="1" fill="#800000"/><rect x="12" y="3" width="3" height="1" fill="#ffffff"/><rect x="15" y="3" width="1" height="1" fill="#000000"/><rect x="0" y="4" width="1" height="1" fill="#000000"/><rect x="1" y="4" width="3" height="1" fill="#ffffff"/><rect x="4" y="4" width="1" height="1" fill="#000000"/><rect x="5" y="4" width="1" height="1" fill="#ffffff"/><rect x="6" y="4" width="1" height="1" fill="#ffff00"/><rect x="7" y="4" width="1" height="1" fill="#000000"/><rect x="8" y="4" width="3" height="1" fill="#800000"/><rect x="11" y="4" width="4" height="1" fill="#ffffff"/><rect x="1" y="5" width="3" height="1" fill="#ffffff"/><rect x="4" y="5" width="1" height="1" fill="#ffff00"/><rect x="5" y="5" width="2" height="1" fill="#000000"/><rect x="7" y="5" width="1" height="1" fill="#ffffff"/><rect x="8" y="5" width="1" height="1" fill="#ffff00"/><rect x="9" y="5" width="2" height="1" fill="#800000"/><rect x="11" y="5" width="4" height="1" fill="#ffffff"/><rect x="15" y="5" width="1" height="1" fill="#000000"/><rect x="0" y="6" width="1" height="1" fill="#000000"/><rect x="1" y="6" width="3" height="1" fill="#ffffff"/><rect x="4" y="6" width="2" height="1" fill="#000000"/><rect x="6" y="6" width="1" height="1" fill="#800080"/><rect x="7" y="6" width="1" height="1" fill="#000000"/><rect x="8" y="6" width="2" height="1" fill="#ffffff"/><rect x="10" y="6" width="1" height="1" fill="#800080"/><rect x="11" y="6" width="4" height="1" fill="#ffffff"/><rect x="1" y="7" width="4" height="1" fill="#ffffff"/><rect x="5" y="7" width="1" height="1" fill="#000000"/><rect x="6" y="7" width="1" height="1" fill="#ffff00"/><rect x="7" y="7" width="1" height="1" fill="#800080"/><rect x="8" y="7" width="1" height="1" fill="#000000"/><rect x="9" y="7" width="1" height="1" fill="#ffffff"/><rect x="10" y="7" width="1" height="1" fill="#800080"/><rect x="11" y="7" width="4" height="1" fill="#ffffff"/><rect x="15" y="7" width="1" height="1" fill="#000000"/><rect x="0" y="8" width="1" height="1" fill="#000000"/><rect x="1" y="8" width="4" height="1" fill="#ffffff"/><rect x="5" y="8" width="1" height="1" fill="#000000"/><rect x="6" y="8" width="2" height="1" fill="#ffff00"/><rect x="8" y="8" width="1" height="1" fill="#ffffff"/><rect x="9" y="8" width="1" height="1" fill="#000000"/><rect x="10" y="8" width="5" height="1" fill="#ffffff"/><rect x="1" y="9" width="5" height="1" fill="#ffffff"/><rect x="6" y="9" width="2" height="1" fill="#ffff00"/><rect x="8" y="9" width="1" height="1" fill="#000000"/><rect x="9" y="9" width="6" height="1" fill="#ffffff"/><rect x="15" y="9" width="1" height="1" fill="#000000"/><rect x="0" y="10" width="1" height="1" fill="#000000"/><rect x="1" y="10" width="3" height="1" fill="#ffffff"/><rect x="4" y="10" width="1" height="1" fill="#000000"/><rect x="5" y="10" width="2" height="1" fill="#800080"/><rect x="7" y="10" width="2" height="1" fill="#ffff00"/><rect x="9" y="10" width="2" height="1" fill="#800080"/><rect x="11" y="10" width="4" height="1" fill="#ffffff"/><rect x="1" y="11" width="2" height="1" fill="#ffffff"/><rect x="3" y="11" width="1" height="1" fill="#800080"/><rect x="4" y="11" width="1" height="1" fill="#ffffff"/><rect x="5" y="11" width="1" height="1" fill="#000000"/><rect x="6" y="11" width="1" height="1" fill="#800080"/><rect x="7" y="11" width="1" height="1" fill="#ffff00"/><rect x="8" y="11" width="1" height="1" fill="#800080"/><rect x="9" y="11" width="1" height="1" fill="#000000"/><rect x="10" y="11" width="1" height="1" fill="#ffffff"/><rect x="11" y="11" width="1" height="1" fill="#800080"/><rect x="12" y="11" width="3" height="1" fill="#ffffff"/><rect x="15" y="11" width="1" height="1" fill="#000000"/><rect x="0" y="12" width="1" height="1" fill="#000000"/><rect x="1" y="12" width="1" height="1" fill="#ffffff"/><rect x="2" y="12" width="1" height="1" fill="#800080"/><rect x="3" y="12" width="3" height="1" fill="#ffffff"/><rect x="6" y="12" width="1" height="1" fill="#800080"/><rect x="7" y="12" width="1" height="1" fill="#ffff00"/><rect x="8" y="12" width="1" height="1" fill="#800080"/><rect x="9" y="12" width="3" height="1" fill="#ffffff"/><rect x="12" y="12" width="1" height="1" fill="#800080"/><rect x="13" y="12" width="2" height="1" fill="#ffffff"/><rect x="1" y="13" width="14" height="1" fill="#ffffff"/><rect x="15" y="13" width="1" height="1" fill="#000000"/><rect x="0" y="14" width="1" height="1" fill="#000000"/><rect x="2" y="14" width="1" height="1" fill="#000000"/><rect x="4" y="14" width="1" height="1" fill="#000000"/><rect x="6" y="14" width="1" height="1" fill="#000000"/><rect x="8" y="14" width="1" height="1" fill="#000000"/><rect x="10" y="14" width="1" height="1" fill="#000000"/><rect x="12" y="14" width="1" height="1" fill="#000000"/><rect x="14" y="14" width="1" height="1" fill="#000000"/></svg><svg class="a" style="left:350px;top:700px" width="16" height="16" shape-rendering="crispEdges"><rect x="6" y="0" width="2" height="1" fill="#000080"/><rect x="5" y="1" width="1" height="1" fill="#000080"/><rect x="8" y="1" width="1" height="1" fill="#000080"/><rect x="5" y="2" width="1" height="1" fill="#000080"/><rect x="6" y="2" width="2" height="1" fill="#000000"/><rect x="8" y="2" width="1" height="1" fill="#000080"/><rect x="9" y="2" width="1" height="1" fill="#000000"/><rect x="4" y="3" width="1" height="1" fill="#000000"/><rect x="5" y="3" width="1" height="1" fill="#ffffff"/><rect x="6" y="3" width="1" height="1" fill="#000080"/><rect x="7" y="3" width="1" height="1" fill="#c0c0c0"/><rect x="8" y="3" width="1" height="1" fill="#ffffff"/><rect x="9" y="3" width="1" height="1" fill="#000000"/><rect x="10" y="3" width="2" height="1" fill="#000080"/><rect x="3" y="4" width="1" height="1" fill="#000000"/><rect x="4" y="4" width="2" height="1" fill="#ffffff"/><rect x="6" y="4" width="1" height="1" fill="#000080"/><rect x="7" y="4" width="2" height="1" fill="#c0c0c0"/><rect x="9" y="4" width="1" height="1" fill="#ffffff"/><rect x="10" y="4" width="1" height="1" fill="#000000"/><rect x="11" y="4" width="2" height="1" fill="#000080"/><rect x="2" y="5" width="1" height="1" fill="#000000"/><rect x="3" y="5" width="2" height="1" fill="#ffffff"/><rect x="5" y="5" width="3" height="1" fill="#000080"/><rect x="8" y="5" width="2" height="1" fill="#c0c0c0"/><rect x="10" y="5" width="1" height="1" fill="#ffffff"/><rect x="11" y="5" width="1" height="1" fill="#000000"/><rect x="12" y="5" width="2" height="1" fill="#000080"/><rect x="1" y="6" width="1" height="1" fill="#000000"/><rect x="2" y="6" width="4" height="1" fill="#ffffff"/><rect x="6" y="6" width="1" height="1" fill="#000080"/><rect x="7" y="6" width="4" height="1" fill="#c0c0c0"/><rect x="11" y="6" width="1" height="1" fill="#000000"/><rect x="12" y="6" width="2" height="1" fill="#000080"/><rect x="2" y="7" width="1" height="1" fill="#000000"/><rect x="3" y="7" width="4" height="1" fill="#ffffff"/><rect x="7" y="7" width="3" height="1" fill="#c0c0c0"/><rect x="10" y="7" width="1" height="1" fill="#000000"/><rect x="11" y="7" width="3" height="1" fill="#000080"/><rect x="3" y="8" width="1" height="1" fill="#000000"/><rect x="4" y="8" width="3" height="1" fill="#ffffff"/><rect x="7" y="8" width="2" height="1" fill="#c0c0c0"/><rect x="9" y="8" width="1" height="1" fill="#000000"/><rect x="12" y="8" width="2" height="1" fill="#000080"/><rect x="4" y="9" width="1" height="1" fill="#000000"/><rect x="5" y="9" width="2" height="1" fill="#ffffff"/><rect x="7" y="9" width="1" height="1" fill="#c0c0c0"/><rect x="8" y="9" width="1" height="1" fill="#000000"/><rect x="12" y="9" width="1" height="1" fill="#000080"/><rect x="5" y="10" width="1" height="1" fill="#000000"/><rect x="6" y="10" width="1" height="1" fill="#ffffff"/><rect x="7" y="10" width="1" height="1" fill="#000000"/><rect x="6" y="11" width="1" height="1" fill="#000000"/><rect x="0" y="12" width="16" height="1" fill="#ffff00"/><rect x="0" y="13" width="16" height="1" fill="#ffff00"/><rect x="0" y="14" width="16" height="1" fill="#ffff00"/><rect x="0" y="15" width="16" height="1" fill="#ffff00"/></svg><svg class="a" style="left:372px;top:707px" width="5" height="3" shape-rendering="crispEdges"><rect x="0" y="0" width="5" height="1" fill="#000000"/><rect x="1" y="1" width="3" height="1" fill="#000000"/><rect x="2" y="2" width="1" height="1" fill="#000000"/></svg><svg class="a" style="left:384px;top:700px" width="16" height="16" shape-rendering="crispEdges"><rect x="12" y="0" width="1" height="1" fill="#000000"/><rect x="13" y="0" width="2" height="1" fill="#ffff00"/><rect x="11" y="1" width="1" height="1" fill="#000000"/><rect x="12" y="1" width="3" height="1" fill="#ffff00"/><rect x="10" y="2" width="1" height="1" fill="#000000"/><rect x="11" y="2" width="1" height="1" fill="#ffffff"/><rect x="12" y="2" width="1" height="1" fill="#000000"/><rect x="13" y="2" width="1" height="1" fill="#ffff00"/><rect x="14" y="2" width="1" height="1" fill="#000000"/><rect x="9" y="3" width="1" height="1" fill="#000000"/><rect x="10" y="3" width="2" height="1" fill="#ffffff"/><rect x="12" y="3" width="2" height="1" fill="#000000"/><rect x="8" y="4" width="1" height="1" fill="#000000"/><rect x="9" y="4" width="1" height="1" fill="#ffffff"/><rect x="10" y="4" width="2" height="1" fill="#000080"/><rect x="12" y="4" width="1" height="1" fill="#000000"/><rect x="7" y="5" width="1" height="1" fill="#000000"/><rect x="8" y="5" width="1" height="1" fill="#ffffff"/><rect x="9" y="5" width="2" height="1" fill="#000080"/><rect x="11" y="5" width="1" height="1" fill="#000000"/><rect x="6" y="6" width="1" height="1" fill="#000000"/><rect x="7" y="6" width="1" height="1" fill="#ffffff"/><rect x="8" y="6" width="2" height="1" fill="#000080"/><rect x="10" y="6" width="1" height="1" fill="#000000"/><rect x="5" y="7" width="1" height="1" fill="#000000"/><rect x="6" y="7" width="1" height="1" fill="#ffffff"/><rect x="7" y="7" width="2" height="1" fill="#000080"/><rect x="9" y="7" width="1" height="1" fill="#000000"/><rect x="4" y="8" width="1" height="1" fill="#000000"/><rect x="5" y="8" width="1" height="1" fill="#ffffff"/><rect x="6" y="8" width="2" height="1" fill="#000080"/><rect x="8" y="8" width="1" height="1" fill="#000000"/><rect x="4" y="9" width="1" height="1" fill="#000000"/><rect x="5" y="9" width="2" height="1" fill="#000080"/><rect x="7" y="9" width="1" height="1" fill="#000000"/><rect x="0" y="10" width="3" height="1" fill="#008080"/><rect x="3" y="10" width="4" height="1" fill="#000000"/><rect x="0" y="11" width="3" height="1" fill="#000080"/><rect x="0" y="12" width="16" height="1" fill="#0000ff"/><rect x="0" y="13" width="16" height="1" fill="#0000ff"/><rect x="0" y="14" width="16" height="1" fill="#0000ff"/><rect x="0" y="15" width="16" height="1" fill="#0000ff"/></svg><svg class="a" style="left:406px;top:707px" width="5" height="3" shape-rendering="crispEdges"><rect x="0" y="0" width="5" height="1" fill="#000000"/><rect x="1" y="1" width="3" height="1" fill="#000000"/><rect x="2" y="2" width="1" height="1" fill="#000000"/></svg><svg class="a" style="left:418px;top:700px" width="16" height="16" shape-rendering="crispEdges"><rect x="6" y="0" width="1" height="1" fill="#000080"/><rect x="5" y="1" width="3" height="1" fill="#000080"/><rect x="5" y="2" width="3" height="1" fill="#000080"/><rect x="4" y="3" width="2" height="1" fill="#000080"/><rect x="7" y="3" width="2" height="1" fill="#000080"/><rect x="4" y="4" width="2" height="1" fill="#000080"/><rect x="7" y="4" width="2" height="1" fill="#000080"/><rect x="3" y="5" width="2" height="1" fill="#000080"/><rect x="8" y="5" width="2" height="1" fill="#000080"/><rect x="3" y="6" width="7" height="1" fill="#000080"/><rect x="2" y="7" width="2" height="1" fill="#000080"/><rect x="9" y="7" width="2" height="1" fill="#000080"/><rect x="2" y="8" width="2" height="1" fill="#000080"/><rect x="9" y="8" width="2" height="1" fill="#000080"/><rect x="1" y="9" width="2" height="1" fill="#000080"/><rect x="10" y="9" width="2" height="1" fill="#000080"/><rect x="0" y="10" width="4" height="1" fill="#000080"/><rect x="9" y="10" width="4" height="1" fill="#000080"/><rect x="0" y="12" width="16" height="1" fill="#ff0000"/><rect x="0" y="13" width="16" height="1" fill="#ff0000"/><rect x="0" y="14" width="16" height="1" fill="#ff0000"/><rect x="0" y="15" width="16" height="1" fill="#ff0000"/></svg><svg class="a" style="left:440px;top:707px" width="5" height="3" shape-rendering="crispEdges"><rect x="0" y="0" width="5" height="1" fill="#000000"/><rect x="1" y="1" width="3" height="1" fill="#000000"/><rect x="2" y="2" width="1" height="1" fill="#000000"/></svg><svg class="a" style="left:452px;top:702px" width="15" height="10" shape-rendering="crispEdges"><rect x="0" y="0" width="15" height="1" fill="#000000"/><rect x="0" y="3" width="15" height="1" fill="#000000"/><rect x="0" y="4" width="15" height="1" fill="#000000"/><rect x="0" y="7" width="15" height="1" fill="#000000"/><rect x="0" y="8" width="15" height="1" fill="#000000"/><rect x="0" y="9" width="15" height="1" fill="#000000"/></svg><svg class="a" style="left:475px;top:702px" width="15" height="10" shape-rendering="crispEdges"><rect x="0" y="0" width="15" height="1" fill="#000000"/><rect x="0" y="3" width="1" height="1" fill="#000000"/><rect x="2" y="3" width="1" height="1" fill="#000000"/><rect x="4" y="3" width="1" height="1" fill="#000000"/><rect x="6" y="3" width="1" height="1" fill="#000000"/><rect x="8" y="3" width="1" height="1" fill="#000000"/><rect x="10" y="3" width="1" height="1" fill="#000000"/><rect x="12" y="3" width="1" height="1" fill="#000000"/><rect x="14" y="3" width="1" height="1" fill="#000000"/><rect x="0" y="6" width="3" height="1" fill="#000000"/><rect x="4" y="6" width="3" height="1" fill="#000000"/><rect x="8" y="6" width="3" height="1" fill="#000000"/><rect x="12" y="6" width="3" height="1" fill="#000000"/><rect x="0" y="9" width="2" height="1" fill="#000000"/><rect x="4" y="9" width="1" height="1" fill="#000000"/><rect x="7" y="9" width="2" height="1" fill="#000000"/><rect x="11" y="9" width="1" height="1" fill="#000000"/><rect x="14" y="9" width="1" height="1" fill="#000000"/></svg><svg class="a" style="left:499px;top:700px" width="16" height="15" shape-rendering="crispEdges"><rect x="10" y="0" width="1" height="1" fill="#000000"/><rect x="10" y="1" width="2" height="1" fill="#000000"/><rect x="0" y="2" width="13" height="1" fill="#000000"/><rect x="10" y="3" width="2" height="1" fill="#000000"/><rect x="10" y="4" width="1" height="1" fill="#000000"/><rect x="3" y="5" width="1" height="1" fill="#000000"/><rect x="2" y="6" width="2" height="1" fill="#000000"/><rect x="1" y="7" width="14" height="1" fill="#000000"/><rect x="2" y="8" width="2" height="1" fill="#000000"/><rect x="3" y="9" width="1" height="1" fill="#000000"/><rect x="3" y="10" width="1" height="1" fill="#000000"/><rect x="11" y="10" width="1" height="1" fill="#000000"/><rect x="2" y="11" width="2" height="1" fill="#000000"/><rect x="11" y="11" width="2" height="1" fill="#000000"/><rect x="1" y="12" width="13" height="1" fill="#000000"/><rect x="2" y="13" width="2" height="1" fill="#000000"/><rect x="11" y="13" width="2" height="1" fill="#000000"/><rect x="3" y="14" width="1" height="1" fill="#000000"/><rect x="11" y="14" width="1" height="1" fill="#000000"/></svg><svg class="a" style="left:522px;top:701px" width="13" height="13" shape-rendering="crispEdges"><rect x="0" y="0" width="11" height="1" fill="#000000"/><rect x="0" y="1" width="1" height="1" fill="#000000"/><rect x="1" y="1" width="9" height="1" fill="#008080"/><rect x="10" y="1" width="1" height="1" fill="#000000"/><rect x="0" y="2" width="1" height="1" fill="#000000"/><rect x="1" y="2" width="9" height="1" fill="#008080"/><rect x="10" y="2" width="2" height="1" fill="#000000"/><rect x="12" y="2" width="1" height="1" fill="#ffffff"/><rect x="0" y="3" width="1" height="1" fill="#000000"/><rect x="1" y="3" width="9" height="1" fill="#008080"/><rect x="10" y="3" width="1" height="1" fill="#000000"/><rect x="11" y="3" width="1" height="1" fill="#ffffff"/><rect x="12" y="3" width="1" height="1" fill="#000000"/><rect x="0" y="4" width="1" height="1" fill="#000000"/><rect x="1" y="4" width="9" height="1" fill="#008080"/><rect x="10" y="4" width="2" height="1" fill="#000000"/><rect x="12" y="4" width="1" height="1" fill="#ffffff"/><rect x="0" y="5" width="1" height="1" fill="#000000"/><rect x="1" y="5" width="9" height="1" fill="#008080"/><rect x="10" y="5" width="1" height="1" fill="#000000"/><rect x="11" y="5" width="1" height="1" fill="#ffffff"/><rect x="12" y="5" width="1" height="1" fill="#000000"/><rect x="0" y="6" width="1" height="1" fill="#000000"/><rect x="1" y="6" width="9" height="1" fill="#008080"/><rect x="10" y="6" width="2" height="1" fill="#000000"/><rect x="12" y="6" width="1" height="1" fill="#ffffff"/><rect x="0" y="7" width="1" height="1" fill="#000000"/><rect x="1" y="7" width="9" height="1" fill="#008080"/><rect x="10" y="7" width="1" height="1" fill="#000000"/><rect x="11" y="7" width="1" height="1" fill="#ffffff"/><rect x="12" y="7" width="1" height="1" fill="#000000"/><rect x="0" y="8" width="1" height="1" fill="#000000"/><rect x="1" y="8" width="9" height="1" fill="#008080"/><rect x="10" y="8" width="2" height="1" fill="#000000"/><rect x="12" y="8" width="1" height="1" fill="#ffffff"/><rect x="0" y="9" width="1" height="1" fill="#000000"/><rect x="1" y="9" width="9" height="1" fill="#008080"/><rect x="10" y="9" width="1" height="1" fill="#000000"/><rect x="11" y="9" width="1" height="1" fill="#ffffff"/><rect x="12" y="9" width="1" height="1" fill="#000000"/><rect x="0" y="10" width="12" height="1" fill="#000000"/><rect x="12" y="10" width="1" height="1" fill="#ffffff"/><rect x="2" y="11" width="1" height="1" fill="#000000"/><rect x="3" y="11" width="1" height="1" fill="#ffffff"/><rect x="4" y="11" width="1" height="1" fill="#000000"/><rect x="5" y="11" width="1" height="1" fill="#ffffff"/><rect x="6" y="11" width="1" height="1" fill="#000000"/><rect x="7" y="11" width="1" height="1" fill="#ffffff"/><rect x="8" y="11" width="1" height="1" fill="#000000"/><rect x="9" y="11" width="1" height="1" fill="#ffffff"/><rect x="10" y="11" width="1" height="1" fill="#000000"/><rect x="11" y="11" width="1" height="1" fill="#ffffff"/><rect x="12" y="11" width="1" height="1" fill="#000000"/><rect x="2" y="12" width="1" height="1" fill="#ffffff"/><rect x="3" y="12" width="1" height="1" fill="#000000"/><rect x="4" y="12" width="1" height="1" fill="#ffffff"/><rect x="5" y="12" width="1" height="1" fill="#000000"/><rect x="6" y="12" width="1" height="1" fill="#ffffff"/><rect x="7" y="12" width="1" height="1" fill="#000000"/><rect x="8" y="12" width="1" height="1" fill="#ffffff"/><rect x="9" y="12" width="1" height="1" fill="#000000"/><rect x="10" y="12" width="1" height="1" fill="#ffffff"/><rect x="11" y="12" width="1" height="1" fill="#000000"/><rect x="12" y="12" width="1" height="1" fill="#ffffff"/></svg><svg class="a" style="left:544px;top:700px" width="17" height="16" shape-rendering="crispEdges"><rect x="4" y="0" width="1" height="1" fill="#000000"/><rect x="5" y="0" width="10" height="1" fill="#ffffff"/><rect x="15" y="0" width="1" height="1" fill="#808080"/><rect x="3" y="1" width="1" height="1" fill="#000000"/><rect x="4" y="1" width="1" height="1" fill="#ffffff"/><rect x="5" y="1" width="1" height="1" fill="#c0c0c0"/><rect x="6" y="1" width="1" height="1" fill="#ffffff"/><rect x="7" y="1" width="1" height="1" fill="#c0c0c0"/><rect x="8" y="1" width="1" height="1" fill="#ffffff"/><rect x="9" y="1" width="1" height="1" fill="#c0c0c0"/><rect x="10" y="1" width="1" height="1" fill="#ffffff"/><rect x="11" y="1" width="1" height="1" fill="#c0c0c0"/><rect x="12" y="1" width="1" height="1" fill="#ffffff"/><rect x="13" y="1" width="2" height="1" fill="#c0c0c0"/><rect x="15" y="1" width="1" height="1" fill="#808080"/><rect x="2" y="2" width="1" height="1" fill="#000000"/><rect x="3" y="2" width="1" height="1" fill="#ffffff"/><rect x="4" y="2" width="1" height="1" fill="#c0c0c0"/><rect x="5" y="2" width="1" height="1" fill="#ffffff"/><rect x="6" y="2" width="1" height="1" fill="#c0c0c0"/><rect x="7" y="2" width="1" height="1" fill="#ffffff"/><rect x="8" y="2" width="1" height="1" fill="#c0c0c0"/><rect x="9" y="2" width="1" height="1" fill="#ffffff"/><rect x="10" y="2" width="1" height="1" fill="#c0c0c0"/><rect x="11" y="2" width="1" height="1" fill="#ffffff"/><rect x="12" y="2" width="1" height="1" fill="#c0c0c0"/><rect x="13" y="2" width="1" height="1" fill="#ffffff"/><rect x="14" y="2" width="1" height="1" fill="#c0c0c0"/><rect x="15" y="2" width="1" height="1" fill="#808080"/><rect x="1" y="3" width="1" height="1" fill="#000000"/><rect x="2" y="3" width="1" height="1" fill="#ffffff"/><rect x="3" y="3" width="1" height="1" fill="#c0c0c0"/><rect x="4" y="3" width="1" height="1" fill="#ffffff"/><rect x="5" y="3" width="1" height="1" fill="#c0c0c0"/><rect x="6" y="3" width="1" height="1" fill="#ffffff"/><rect x="7" y="3" width="1" height="1" fill="#c0c0c0"/><rect x="8" y="3" width="1" height="1" fill="#ffffff"/><rect x="9" y="3" width="1" height="1" fill="#c0c0c0"/><rect x="10" y="3" width="1" height="1" fill="#ffffff"/><rect x="11" y="3" width="1" height="1" fill="#c0c0c0"/><rect x="12" y="3" width="1" height="1" fill="#ffffff"/><rect x="13" y="3" width="2" height="1" fill="#c0c0c0"/><rect x="15" y="3" width="1" height="1" fill="#808080"/><rect x="0" y="4" width="1" height="1" fill="#000000"/><rect x="1" y="4" width="10" height="1" fill="#008080"/><rect x="11" y="4" width="1" height="1" fill="#ffffff"/><rect x="12" y="4" width="3" height="1" fill="#c0c0c0"/><rect x="15" y="4" width="1" height="1" fill="#808080"/><rect x="0" y="5" width="1" height="1" fill="#000000"/><rect x="1" y="5" width="10" height="1" fill="#008080"/><rect x="11" y="5" width="4" height="1" fill="#c0c0c0"/><rect x="15" y="5" width="1" height="1" fill="#808080"/><rect x="0" y="6" width="1" height="1" fill="#000000"/><rect x="1" y="6" width="10" height="1" fill="#008080"/><rect x="11" y="6" width="4" height="1" fill="#c0c0c0"/><rect x="15" y="6" width="1" height="1" fill="#808080"/><rect x="0" y="7" width="1" height="1" fill="#000000"/><rect x="1" y="7" width="10" height="1" fill="#008080"/><rect x="11" y="7" width="4" height="1" fill="#c0c0c0"/><rect x="15" y="7" width="1" height="1" fill="#808080"/><rect x="0" y="8" width="1" height="1" fill="#000000"/><rect x="1" y="8" width="10" height="1" fill="#008080"/><rect x="11" y="8" width="4" height="1" fill="#c0c0c0"/><rect x="15" y="8" width="1" height="1" fill="#808080"/><rect x="0" y="9" width="1" height="1" fill="#000000"/><rect x="1" y="9" width="10" height="1" fill="#008080"/><rect x="11" y="9" width="4" height="1" fill="#c0c0c0"/><rect x="15" y="9" width="1" height="1" fill="#808080"/><rect x="0" y="10" width="1" height="1" fill="#000000"/><rect x="1" y="10" width="10" height="1" fill="#008080"/><rect x="11" y="10" width="3" height="1" fill="#c0c0c0"/><rect x="14" y="10" width="1" height="1" fill="#808080"/><rect x="0" y="11" width="1" height="1" fill="#000000"/><rect x="1" y="11" width="10" height="1" fill="#008080"/><rect x="11" y="11" width="2" height="1" fill="#c0c0c0"/><rect x="13" y="11" width="1" height="1" fill="#808080"/><rect x="0" y="12" width="1" height="1" fill="#000000"/><rect x="1" y="12" width="10" height="1" fill="#008080"/><rect x="11" y="12" width="1" height="1" fill="#c0c0c0"/><rect x="12" y="12" width="1" height="1" fill="#808080"/><rect x="0" y="13" width="1" height="1" fill="#000000"/><rect x="1" y="13" width="10" height="1" fill="#008080"/><rect x="11" y="13" width="1" height="1" fill="#808080"/><rect x="0" y="14" width="1" height="1" fill="#000000"/><rect x="1" y="14" width="10" height="1" fill="#008080"/><rect x="11" y="14" width="1" height="1" fill="#808080"/><rect x="0" y="15" width="11" height="1" fill="#000000"/></svg><svg class="a" style="left:567px;top:711px" width="5" height="3" shape-rendering="crispEdges"><rect x="0" y="0" width="5" height="1" fill="#000000"/><rect x="1" y="1" width="3" height="1" fill="#000000"/><rect x="2" y="2" width="1" height="1" fill="#000000"/></svg>
<svg class="a" style="left:976px;top:11px" width="6" height="2" shape-rendering="crispEdges"><rect x="0" y="0" width="6" height="1" fill="#000000"/><rect x="0" y="1" width="6" height="1" fill="#000000"/></svg><svg class="a" style="left:991px;top:4px" width="8" height="9" shape-rendering="crispEdges"><rect x="3" y="0" width="5" height="1" fill="#000000"/><rect x="3" y="1" width="5" height="1" fill="#000000"/><rect x="3" y="2" width="1" height="1" fill="#000000"/><rect x="7" y="2" width="1" height="1" fill="#000000"/><rect x="0" y="3" width="6" height="1" fill="#000000"/><rect x="7" y="3" width="1" height="1" fill="#000000"/><rect x="0" y="4" width="6" height="1" fill="#000000"/><rect x="7" y="4" width="1" height="1" fill="#000000"/><rect x="0" y="5" width="1" height="1" fill="#000000"/><rect x="5" y="5" width="3" height="1" fill="#000000"/><rect x="0" y="6" width="1" height="1" fill="#000000"/><rect x="5" y="6" width="1" height="1" fill="#000000"/><rect x="0" y="7" width="1" height="1" fill="#000000"/><rect x="5" y="7" width="1" height="1" fill="#000000"/><rect x="0" y="8" width="6" height="1" fill="#000000"/></svg><svg class="a" style="left:1010px;top:5px" width="8" height="7" shape-rendering="crispEdges"><rect x="0" y="0" width="2" height="1" fill="#000000"/><rect x="6" y="0" width="2" height="1" fill="#000000"/><rect x="1" y="1" width="2" height="1" fill="#000000"/><rect x="5" y="1" width="2" height="1" fill="#000000"/><rect x="2" y="2" width="4" height="1" fill="#000000"/><rect x="3" y="3" width="2" height="1" fill="#000000"/><rect x="2" y="4" width="4" height="1" fill="#000000"/><rect x="1" y="5" width="2" height="1" fill="#000000"/><rect x="5" y="5" width="2" height="1" fill="#000000"/><rect x="0" y="6" width="2" height="1" fill="#000000"/><rect x="6" y="6" width="2" height="1" fill="#000000"/></svg><svg class="a" style="left:976px;top:32px" width="6" height="2" shape-rendering="crispEdges"><rect x="0" y="0" width="6" height="1" fill="#000000"/><rect x="0" y="1" width="6" height="1" fill="#000000"/></svg><svg class="a" style="left:991px;top:25px" width="8" height="9" shape-rendering="crispEdges"><rect x="3" y="0" width="5" height="1" fill="#000000"/><rect x="3" y="1" width="5" height="1" fill="#000000"/><rect x="3" y="2" width="1" height="1" fill="#000000"/><rect x="7" y="2" width="1" height="1" fill="#000000"/><rect x="0" y="3" width="6" height="1" fill="#000000"/><rect x="7" y="3" width="1" height="1" fill="#000000"/><rect x="0" y="4" width="6" height="1" fill="#000000"/><rect x="7" y="4" width="1" height="1" fill="#000000"/><rect x="0" y="5" width="1" height="1" fill="#000000"/><rect x="5" y="5" width="3" height="1" fill="#000000"/><rect x="0" y="6" width="1" height="1" fill="#000000"/><rect x="5" y="6" width="1" height="1" fill="#000000"/><rect x="0" y="7" width="1" height="1" fill="#000000"/><rect x="5" y="7" width="1" height="1" fill="#000000"/><rect x="0" y="8" width="6" height="1" fill="#000000"/></svg><svg class="a" style="left:1010px;top:26px" width="8" height="7" shape-rendering="crispEdges"><rect x="0" y="0" width="2" height="1" fill="#000000"/><rect x="6" y="0" width="2" height="1" fill="#000000"/><rect x="1" y="1" width="2" height="1" fill="#000000"/><rect x="5" y="1" width="2" height="1" fill="#000000"/><rect x="2" y="2" width="4" height="1" fill="#000000"/><rect x="3" y="3" width="2" height="1" fill="#000000"/><rect x="2" y="4" width="4" height="1" fill="#000000"/><rect x="1" y="5" width="2" height="1" fill="#000000"/><rect x="5" y="5" width="2" height="1" fill="#000000"/><rect x="0" y="6" width="2" height="1" fill="#000000"/><rect x="6" y="6" width="2" height="1" fill="#000000"/></svg>
</body></html>
